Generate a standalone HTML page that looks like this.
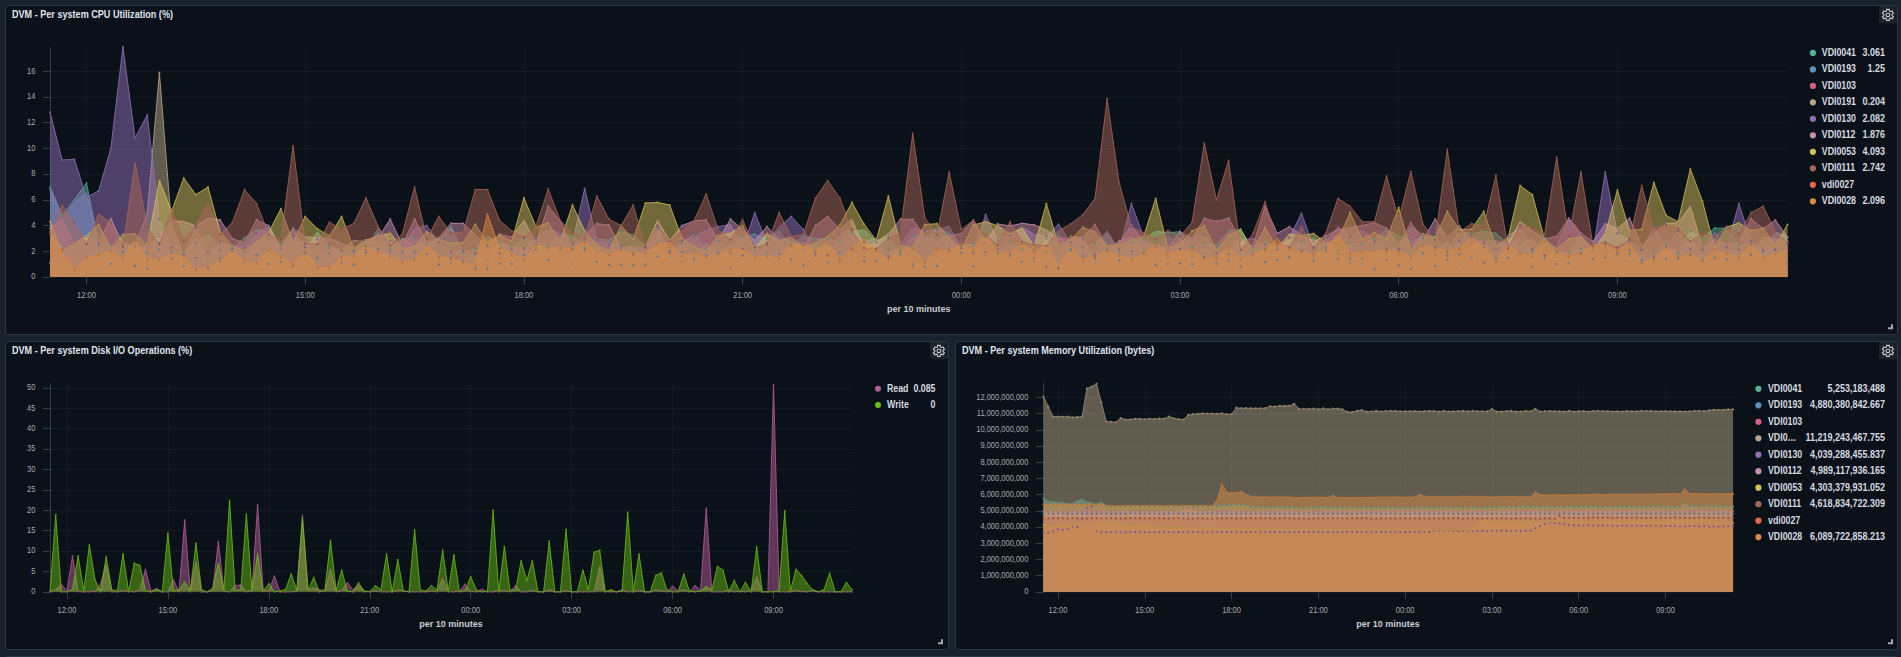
<!DOCTYPE html><html><head><meta charset="utf-8"><style>
html,body{margin:0;padding:0}body{width:1901px;height:657px;background:#19222c;overflow:hidden;position:relative;font-family:"Liberation Sans",sans-serif}
.p{position:absolute;box-sizing:border-box;border:1px solid #283644;background:#0b1118;border-radius:3px}
.t{position:absolute;font-weight:bold;font-size:9.1px;color:#dfe5ee;white-space:nowrap;line-height:1}
.g{position:absolute;width:18px;height:18px;background:#1b2027;border-radius:0 2px 0 4px}
svg{position:absolute;left:0;top:0}
</style></head><body>
<div class="p" style="left:5px;top:5px;width:1893px;height:330px"></div>
<div class="p" style="left:5px;top:341px;width:944px;height:309px"></div>
<div class="p" style="left:955px;top:341px;width:943px;height:309px"></div>
<div class="p" style="left:5px;top:656px;width:1893px;height:100px"></div>
<svg width="1901" height="657" viewBox="0 0 1901 657" font-family="Liberation Sans, sans-serif">
<text transform="translate(12 18.4) scale(1 1.1)" font-size="9.1" font-weight="bold" fill="#dfe5ee">DVM - Per system CPU Utilization (%)</text>
<text transform="translate(12 354.4) scale(1 1.1)" font-size="9.1" font-weight="bold" fill="#dfe5ee">DVM - Per system Disk I/O Operations (%)</text>
<text transform="translate(962 354.4) scale(1 1.1)" font-size="9.1" font-weight="bold" fill="#dfe5ee">DVM - Per system Memory Utilization (bytes)</text>
<path d="M1879 6 h18 v14.5 a3 3 0 0 1 -3 3 h-12 a3 3 0 0 1 -3 -3 z" fill="#1d2229"/>
<path d="M1886.46 10.95 L1886.62 9.35 L1889.18 9.35 L1889.34 10.95 A4.20 4.20 0 0 1 1890.60 11.68 L1892.07 11.01 L1893.35 13.23 L1892.04 14.17 A4.20 4.20 0 0 1 1892.04 15.63 L1893.35 16.57 L1892.07 18.79 L1890.60 18.12 A4.20 4.20 0 0 1 1889.34 18.85 L1889.18 20.45 L1886.62 20.45 L1886.46 18.85 A4.20 4.20 0 0 1 1885.20 18.12 L1883.73 18.79 L1882.45 16.57 L1883.76 15.63 A4.20 4.20 0 0 1 1883.76 14.17 L1882.45 13.23 L1883.73 11.01 L1885.20 11.68 A4.20 4.20 0 0 1 1886.46 10.95 Z" fill="none" stroke="#c3c8ce" stroke-width="1.15" stroke-linejoin="miter"/>
<rect x="1886.20" y="13.20" width="3.4" height="3.4" rx="1" fill="none" stroke="#c3c8ce" stroke-width="1.15"/>
<path d="M930 342 h18 v14.5 a3 3 0 0 1 -3 3 h-12 a3 3 0 0 1 -3 -3 z" fill="#1d2229"/>
<path d="M937.46 346.95 L937.62 345.35 L940.18 345.35 L940.34 346.95 A4.20 4.20 0 0 1 941.60 347.68 L943.07 347.01 L944.35 349.23 L943.04 350.17 A4.20 4.20 0 0 1 943.04 351.63 L944.35 352.57 L943.07 354.79 L941.60 354.12 A4.20 4.20 0 0 1 940.34 354.85 L940.18 356.45 L937.62 356.45 L937.46 354.85 A4.20 4.20 0 0 1 936.20 354.12 L934.73 354.79 L933.45 352.57 L934.76 351.63 A4.20 4.20 0 0 1 934.76 350.17 L933.45 349.23 L934.73 347.01 L936.20 347.68 A4.20 4.20 0 0 1 937.46 346.95 Z" fill="none" stroke="#c3c8ce" stroke-width="1.15" stroke-linejoin="miter"/>
<rect x="937.20" y="349.20" width="3.4" height="3.4" rx="1" fill="none" stroke="#c3c8ce" stroke-width="1.15"/>
<path d="M1879 342 h18 v14.5 a3 3 0 0 1 -3 3 h-12 a3 3 0 0 1 -3 -3 z" fill="#1d2229"/>
<path d="M1886.46 346.95 L1886.62 345.35 L1889.18 345.35 L1889.34 346.95 A4.20 4.20 0 0 1 1890.60 347.68 L1892.07 347.01 L1893.35 349.23 L1892.04 350.17 A4.20 4.20 0 0 1 1892.04 351.63 L1893.35 352.57 L1892.07 354.79 L1890.60 354.12 A4.20 4.20 0 0 1 1889.34 354.85 L1889.18 356.45 L1886.62 356.45 L1886.46 354.85 A4.20 4.20 0 0 1 1885.20 354.12 L1883.73 354.79 L1882.45 352.57 L1883.76 351.63 A4.20 4.20 0 0 1 1883.76 350.17 L1882.45 349.23 L1883.73 347.01 L1885.20 347.68 A4.20 4.20 0 0 1 1886.46 346.95 Z" fill="none" stroke="#c3c8ce" stroke-width="1.15" stroke-linejoin="miter"/>
<rect x="1886.20" y="349.20" width="3.4" height="3.4" rx="1" fill="none" stroke="#c3c8ce" stroke-width="1.15"/>
<path d="M1892 324.2 V328.2 H1888" fill="none" stroke="#a3a8ae" stroke-width="2"/>
<path d="M942 639.2 V643.2 H938" fill="none" stroke="#a3a8ae" stroke-width="2"/>
<path d="M1892 639.2 V643.2 H1888" fill="none" stroke="#a3a8ae" stroke-width="2"/>
<line x1="50" y1="277.5" x2="1787.5" y2="277.5" stroke="rgba(255,255,255,0.04)" stroke-width="1"/>
<line x1="43" y1="277.5" x2="50" y2="277.5" stroke="#343b43" stroke-width="1"/>
<text transform="translate(35.4 279.3) scale(1 1.13)" font-size="7.5" fill="#a3a9b0" text-anchor="end">0</text>
<line x1="50" y1="251.5" x2="1787.5" y2="251.5" stroke="rgba(255,255,255,0.04)" stroke-width="1"/>
<line x1="43" y1="251.5" x2="50" y2="251.5" stroke="#343b43" stroke-width="1"/>
<text transform="translate(35.4 253.58) scale(1 1.13)" font-size="7.5" fill="#a3a9b0" text-anchor="end">2</text>
<line x1="50" y1="225.5" x2="1787.5" y2="225.5" stroke="rgba(255,255,255,0.04)" stroke-width="1"/>
<line x1="43" y1="225.5" x2="50" y2="225.5" stroke="#343b43" stroke-width="1"/>
<text transform="translate(35.4 227.86) scale(1 1.13)" font-size="7.5" fill="#a3a9b0" text-anchor="end">4</text>
<line x1="50" y1="200.5" x2="1787.5" y2="200.5" stroke="rgba(255,255,255,0.04)" stroke-width="1"/>
<line x1="43" y1="200.5" x2="50" y2="200.5" stroke="#343b43" stroke-width="1"/>
<text transform="translate(35.4 202.14) scale(1 1.13)" font-size="7.5" fill="#a3a9b0" text-anchor="end">6</text>
<line x1="50" y1="174.5" x2="1787.5" y2="174.5" stroke="rgba(255,255,255,0.04)" stroke-width="1"/>
<line x1="43" y1="174.5" x2="50" y2="174.5" stroke="#343b43" stroke-width="1"/>
<text transform="translate(35.4 176.42) scale(1 1.13)" font-size="7.5" fill="#a3a9b0" text-anchor="end">8</text>
<line x1="50" y1="148.5" x2="1787.5" y2="148.5" stroke="rgba(255,255,255,0.04)" stroke-width="1"/>
<line x1="43" y1="148.5" x2="50" y2="148.5" stroke="#343b43" stroke-width="1"/>
<text transform="translate(35.4 150.7) scale(1 1.13)" font-size="7.5" fill="#a3a9b0" text-anchor="end">10</text>
<line x1="50" y1="122.5" x2="1787.5" y2="122.5" stroke="rgba(255,255,255,0.04)" stroke-width="1"/>
<line x1="43" y1="122.5" x2="50" y2="122.5" stroke="#343b43" stroke-width="1"/>
<text transform="translate(35.4 124.98) scale(1 1.13)" font-size="7.5" fill="#a3a9b0" text-anchor="end">12</text>
<line x1="50" y1="97.5" x2="1787.5" y2="97.5" stroke="rgba(255,255,255,0.04)" stroke-width="1"/>
<line x1="43" y1="97.5" x2="50" y2="97.5" stroke="#343b43" stroke-width="1"/>
<text transform="translate(35.4 99.26) scale(1 1.13)" font-size="7.5" fill="#a3a9b0" text-anchor="end">14</text>
<line x1="50" y1="71.5" x2="1787.5" y2="71.5" stroke="rgba(255,255,255,0.04)" stroke-width="1"/>
<line x1="43" y1="71.5" x2="50" y2="71.5" stroke="#343b43" stroke-width="1"/>
<text transform="translate(35.4 73.54) scale(1 1.13)" font-size="7.5" fill="#a3a9b0" text-anchor="end">16</text>
<line x1="86.5" y1="47" x2="86.5" y2="277" stroke="rgba(255,255,255,0.04)" stroke-width="1"/>
<line x1="86.5" y1="277" x2="86.5" y2="285" stroke="#343b43" stroke-width="1"/>
<text transform="translate(86.5 298) scale(1 1.13)" font-size="7.5" fill="#a3a9b0" text-anchor="middle">12:00</text>
<line x1="305.5" y1="47" x2="305.5" y2="277" stroke="rgba(255,255,255,0.04)" stroke-width="1"/>
<line x1="305.5" y1="277" x2="305.5" y2="285" stroke="#343b43" stroke-width="1"/>
<text transform="translate(305.2 298) scale(1 1.13)" font-size="7.5" fill="#a3a9b0" text-anchor="middle">15:00</text>
<line x1="524.5" y1="47" x2="524.5" y2="277" stroke="rgba(255,255,255,0.04)" stroke-width="1"/>
<line x1="524.5" y1="277" x2="524.5" y2="285" stroke="#343b43" stroke-width="1"/>
<text transform="translate(523.9 298) scale(1 1.13)" font-size="7.5" fill="#a3a9b0" text-anchor="middle">18:00</text>
<line x1="742.5" y1="47" x2="742.5" y2="277" stroke="rgba(255,255,255,0.04)" stroke-width="1"/>
<line x1="742.5" y1="277" x2="742.5" y2="285" stroke="#343b43" stroke-width="1"/>
<text transform="translate(742.6 298) scale(1 1.13)" font-size="7.5" fill="#a3a9b0" text-anchor="middle">21:00</text>
<line x1="961.5" y1="47" x2="961.5" y2="277" stroke="rgba(255,255,255,0.04)" stroke-width="1"/>
<line x1="961.5" y1="277" x2="961.5" y2="285" stroke="#343b43" stroke-width="1"/>
<text transform="translate(961.3 298) scale(1 1.13)" font-size="7.5" fill="#a3a9b0" text-anchor="middle">00:00</text>
<line x1="1180.5" y1="47" x2="1180.5" y2="277" stroke="rgba(255,255,255,0.04)" stroke-width="1"/>
<line x1="1180.5" y1="277" x2="1180.5" y2="285" stroke="#343b43" stroke-width="1"/>
<text transform="translate(1180 298) scale(1 1.13)" font-size="7.5" fill="#a3a9b0" text-anchor="middle">03:00</text>
<line x1="1398.5" y1="47" x2="1398.5" y2="277" stroke="rgba(255,255,255,0.04)" stroke-width="1"/>
<line x1="1398.5" y1="277" x2="1398.5" y2="285" stroke="#343b43" stroke-width="1"/>
<text transform="translate(1398.7 298) scale(1 1.13)" font-size="7.5" fill="#a3a9b0" text-anchor="middle">06:00</text>
<line x1="1617.5" y1="47" x2="1617.5" y2="277" stroke="rgba(255,255,255,0.04)" stroke-width="1"/>
<line x1="1617.5" y1="277" x2="1617.5" y2="285" stroke="#343b43" stroke-width="1"/>
<text transform="translate(1617.4 298) scale(1 1.13)" font-size="7.5" fill="#a3a9b0" text-anchor="middle">09:00</text>
<line x1="50.5" y1="47" x2="50.5" y2="277" stroke="#343b43" stroke-width="1"/>
<text transform="translate(918.8 312) scale(1 1.05)" font-size="9" font-weight="bold" fill="#c8cdd3" text-anchor="middle">per 10 minutes</text>
<polygon points="50.05,277 50.05,186.98 62.2,215.27 74.35,199.84 86.5,183.12 98.65,243.56 110.8,244.45 122.95,252.36 135.1,240.8 147.25,252.89 159.4,242.7 171.55,252.06 183.7,251.52 195.85,242.93 208,232.59 220.15,250.67 232.3,248.11 244.45,237.71 256.6,229.48 268.75,231.99 280.9,243.65 293.05,228.74 305.2,252.65 317.35,231.77 329.5,246.4 341.65,250.14 353.8,250.82 365.95,245.92 378.1,232.86 390.25,249.2 402.4,238.89 414.55,237.42 426.7,244.27 438.85,239.76 451,226.85 463.15,252.32 475.3,248.55 487.45,236.35 499.6,242.85 511.75,245.77 523.9,238.79 536.05,242.2 548.2,246.14 560.35,233.42 572.5,235.87 584.65,247.57 596.8,239.08 608.95,240.34 621.1,231.34 633.25,235.09 645.4,246.45 657.55,228.64 669.7,250.82 681.85,243.1 694,234.38 706.15,249.94 718.3,241.28 730.45,252.84 742.6,236.67 754.75,234.19 766.9,239.11 779.05,231.33 791.2,245.78 803.35,235.97 815.5,238.56 827.65,238.94 839.8,242.12 851.95,232.25 864.1,229.55 876.25,241.66 888.4,236.77 900.55,252.29 912.7,235.81 924.85,237.21 937,228.31 949.15,232.71 961.3,246.53 973.45,243.93 985.6,236.65 997.75,253.27 1009.9,241.98 1022.05,249.53 1034.2,250.84 1046.35,252.34 1058.5,234.09 1070.65,250.53 1082.8,247.48 1094.95,243.8 1107.1,231.44 1119.25,251.78 1131.4,242.3 1143.55,239.72 1155.7,231.13 1167.85,232.78 1180,231.63 1192.15,246.69 1204.3,243.17 1216.45,244.62 1228.6,231.11 1240.75,229.22 1252.9,249.97 1265.05,249.32 1277.2,247.89 1289.35,247.85 1301.5,241.38 1313.65,238.7 1325.8,247.09 1337.95,253.75 1350.1,243.08 1362.25,244.35 1374.4,239.29 1386.55,229.34 1398.7,236.09 1410.85,240.59 1423,237.97 1435.15,236.46 1447.3,252.46 1459.45,230.72 1471.6,233.79 1483.75,231.36 1495.9,233.33 1508.05,243.76 1520.2,243.59 1532.35,251.19 1544.5,237.54 1556.65,252.25 1568.8,252.12 1580.95,248.48 1593.1,249.68 1605.25,245.11 1617.4,252.5 1629.55,253.85 1641.7,249.96 1653.85,251.24 1666,244.5 1678.15,253.2 1690.3,231.36 1702.45,238.06 1714.6,228.13 1726.75,228.13 1738.9,244.92 1751.05,244.49 1763.2,250.69 1775.35,232.02 1787.5,237.13 1787.5,277" fill="#54B399" fill-opacity="0.5"/><polyline points="50.05,186.98 62.2,215.27 74.35,199.84 86.5,183.12 98.65,243.56 110.8,244.45 122.95,252.36 135.1,240.8 147.25,252.89 159.4,242.7 171.55,252.06 183.7,251.52 195.85,242.93 208,232.59 220.15,250.67 232.3,248.11 244.45,237.71 256.6,229.48 268.75,231.99 280.9,243.65 293.05,228.74 305.2,252.65 317.35,231.77 329.5,246.4 341.65,250.14 353.8,250.82 365.95,245.92 378.1,232.86 390.25,249.2 402.4,238.89 414.55,237.42 426.7,244.27 438.85,239.76 451,226.85 463.15,252.32 475.3,248.55 487.45,236.35 499.6,242.85 511.75,245.77 523.9,238.79 536.05,242.2 548.2,246.14 560.35,233.42 572.5,235.87 584.65,247.57 596.8,239.08 608.95,240.34 621.1,231.34 633.25,235.09 645.4,246.45 657.55,228.64 669.7,250.82 681.85,243.1 694,234.38 706.15,249.94 718.3,241.28 730.45,252.84 742.6,236.67 754.75,234.19 766.9,239.11 779.05,231.33 791.2,245.78 803.35,235.97 815.5,238.56 827.65,238.94 839.8,242.12 851.95,232.25 864.1,229.55 876.25,241.66 888.4,236.77 900.55,252.29 912.7,235.81 924.85,237.21 937,228.31 949.15,232.71 961.3,246.53 973.45,243.93 985.6,236.65 997.75,253.27 1009.9,241.98 1022.05,249.53 1034.2,250.84 1046.35,252.34 1058.5,234.09 1070.65,250.53 1082.8,247.48 1094.95,243.8 1107.1,231.44 1119.25,251.78 1131.4,242.3 1143.55,239.72 1155.7,231.13 1167.85,232.78 1180,231.63 1192.15,246.69 1204.3,243.17 1216.45,244.62 1228.6,231.11 1240.75,229.22 1252.9,249.97 1265.05,249.32 1277.2,247.89 1289.35,247.85 1301.5,241.38 1313.65,238.7 1325.8,247.09 1337.95,253.75 1350.1,243.08 1362.25,244.35 1374.4,239.29 1386.55,229.34 1398.7,236.09 1410.85,240.59 1423,237.97 1435.15,236.46 1447.3,252.46 1459.45,230.72 1471.6,233.79 1483.75,231.36 1495.9,233.33 1508.05,243.76 1520.2,243.59 1532.35,251.19 1544.5,237.54 1556.65,252.25 1568.8,252.12 1580.95,248.48 1593.1,249.68 1605.25,245.11 1617.4,252.5 1629.55,253.85 1641.7,249.96 1653.85,251.24 1666,244.5 1678.15,253.2 1690.3,231.36 1702.45,238.06 1714.6,228.13 1726.75,228.13 1738.9,244.92 1751.05,244.49 1763.2,250.69 1775.35,232.02 1787.5,237.13" fill="none" stroke="#54B399" stroke-opacity="0.8" stroke-width="1" stroke-linejoin="round"/>
<polygon points="50.05,277 50.05,189.55 62.2,219.13 74.35,202.41 86.5,193.41 98.65,244.85 110.8,263.84 122.95,252.23 135.1,265.96 147.25,268.81 159.4,249.72 171.55,258.41 183.7,266.27 195.85,258.11 208,268.73 220.15,258.42 232.3,249.15 244.45,251.52 256.6,254.96 268.75,263.91 280.9,261.74 293.05,265.85 305.2,253.4 317.35,258.33 329.5,253.25 341.65,262.5 353.8,264.69 365.95,252.59 378.1,249.02 390.25,251.74 402.4,252.7 414.55,252.45 426.7,254.06 438.85,264.62 451,258.63 463.15,261.97 475.3,268.69 487.45,268.71 499.6,263.53 511.75,263.95 523.9,255.03 536.05,249.6 548.2,260.08 560.35,250 572.5,248.95 584.65,249.63 596.8,261.78 608.95,264.75 621.1,264.62 633.25,265.24 645.4,265.08 657.55,256.44 669.7,250.76 681.85,251.99 694,259.42 706.15,255.85 718.3,252.83 730.45,267.54 742.6,255.69 754.75,250.56 766.9,253.19 779.05,253.85 791.2,259.45 803.35,265.61 815.5,253.05 827.65,262.44 839.8,252.81 851.95,249.29 864.1,261.14 876.25,261.03 888.4,249.8 900.55,254.37 912.7,265.79 924.85,266.67 937,266.17 949.15,250.67 961.3,252.69 973.45,266.28 985.6,252.28 997.75,249.11 1009.9,255.76 1022.05,262.07 1034.2,257.99 1046.35,266.59 1058.5,268.99 1070.65,249.31 1082.8,255.92 1094.95,258.45 1107.1,250.07 1119.25,260.36 1131.4,251.35 1143.55,252.29 1155.7,264.94 1167.85,264.1 1180,263.26 1192.15,264.33 1204.3,257.22 1216.45,263.95 1228.6,260.66 1240.75,266.59 1252.9,250.56 1265.05,262 1277.2,259.86 1289.35,257.28 1301.5,250.68 1313.65,260.63 1325.8,250.4 1337.95,258.96 1350.1,258.34 1362.25,258.51 1374.4,268.9 1386.55,260.23 1398.7,265.52 1410.85,269.2 1423,252.84 1435.15,265.74 1447.3,259.54 1459.45,254.36 1471.6,257.83 1483.75,262.58 1495.9,258.62 1508.05,257.86 1520.2,253.15 1532.35,267.1 1544.5,257.76 1556.65,264.17 1568.8,263.59 1580.95,253.39 1593.1,258.84 1605.25,257.73 1617.4,253.65 1629.55,250.51 1641.7,260.16 1653.85,256.68 1666,258.88 1678.15,258.75 1690.3,255.03 1702.45,259.98 1714.6,258.31 1726.75,259.45 1738.9,249.91 1751.05,254.9 1763.2,251.25 1775.35,249.9 1787.5,263.94 1787.5,277" fill="#6092C0" fill-opacity="0.5"/><polyline points="50.05,189.55 62.2,219.13 74.35,202.41 86.5,193.41 98.65,244.85 110.8,263.84 122.95,252.23 135.1,265.96 147.25,268.81 159.4,249.72 171.55,258.41 183.7,266.27 195.85,258.11 208,268.73 220.15,258.42 232.3,249.15 244.45,251.52 256.6,254.96 268.75,263.91 280.9,261.74 293.05,265.85 305.2,253.4 317.35,258.33 329.5,253.25 341.65,262.5 353.8,264.69 365.95,252.59 378.1,249.02 390.25,251.74 402.4,252.7 414.55,252.45 426.7,254.06 438.85,264.62 451,258.63 463.15,261.97 475.3,268.69 487.45,268.71 499.6,263.53 511.75,263.95 523.9,255.03 536.05,249.6 548.2,260.08 560.35,250 572.5,248.95 584.65,249.63 596.8,261.78 608.95,264.75 621.1,264.62 633.25,265.24 645.4,265.08 657.55,256.44 669.7,250.76 681.85,251.99 694,259.42 706.15,255.85 718.3,252.83 730.45,267.54 742.6,255.69 754.75,250.56 766.9,253.19 779.05,253.85 791.2,259.45 803.35,265.61 815.5,253.05 827.65,262.44 839.8,252.81 851.95,249.29 864.1,261.14 876.25,261.03 888.4,249.8 900.55,254.37 912.7,265.79 924.85,266.67 937,266.17 949.15,250.67 961.3,252.69 973.45,266.28 985.6,252.28 997.75,249.11 1009.9,255.76 1022.05,262.07 1034.2,257.99 1046.35,266.59 1058.5,268.99 1070.65,249.31 1082.8,255.92 1094.95,258.45 1107.1,250.07 1119.25,260.36 1131.4,251.35 1143.55,252.29 1155.7,264.94 1167.85,264.1 1180,263.26 1192.15,264.33 1204.3,257.22 1216.45,263.95 1228.6,260.66 1240.75,266.59 1252.9,250.56 1265.05,262 1277.2,259.86 1289.35,257.28 1301.5,250.68 1313.65,260.63 1325.8,250.4 1337.95,258.96 1350.1,258.34 1362.25,258.51 1374.4,268.9 1386.55,260.23 1398.7,265.52 1410.85,269.2 1423,252.84 1435.15,265.74 1447.3,259.54 1459.45,254.36 1471.6,257.83 1483.75,262.58 1495.9,258.62 1508.05,257.86 1520.2,253.15 1532.35,267.1 1544.5,257.76 1556.65,264.17 1568.8,263.59 1580.95,253.39 1593.1,258.84 1605.25,257.73 1617.4,253.65 1629.55,250.51 1641.7,260.16 1653.85,256.68 1666,258.88 1678.15,258.75 1690.3,255.03 1702.45,259.98 1714.6,258.31 1726.75,259.45 1738.9,249.91 1751.05,254.9 1763.2,251.25 1775.35,249.9 1787.5,263.94" fill="none" stroke="#6092C0" stroke-opacity="0.8" stroke-width="1" stroke-linejoin="round"/>
<polygon points="50.05,277 50.05,262.96 62.2,263.5 74.35,255.53 86.5,257.55 98.65,247.57 110.8,249.17 122.95,242.91 135.1,245.54 147.25,212.7 159.4,72.53 171.55,225.56 183.7,254.91 195.85,236.28 208,259.91 220.15,243.65 232.3,245.94 244.45,262.9 256.6,240.51 268.75,238.91 280.9,246.39 293.05,243.38 305.2,241.16 317.35,260.2 329.5,249.32 341.65,249.87 353.8,240.52 365.95,241.37 378.1,240.76 390.25,247.62 402.4,238.88 414.55,244.82 426.7,244.52 438.85,257.63 451,263.26 463.15,260.37 475.3,253.93 487.45,261.17 499.6,240.49 511.75,248.34 523.9,246.38 536.05,246.42 548.2,244.88 560.35,250.3 572.5,264.05 584.65,241.57 596.8,242.97 608.95,249.91 621.1,249 633.25,245.49 645.4,262.27 657.55,243.29 669.7,257 681.85,262.03 694,256.63 706.15,243.51 718.3,258.33 730.45,243.21 742.6,236.53 754.75,250.17 766.9,253.32 779.05,250.59 791.2,244.8 803.35,242.44 815.5,246.68 827.65,245.95 839.8,261.95 851.95,259.97 864.1,256.96 876.25,243.11 888.4,255.53 900.55,248.08 912.7,263.79 924.85,262.42 937,256.54 949.15,245.13 961.3,244.56 973.45,245.02 985.6,255.91 997.75,249.53 1009.9,250.99 1022.05,250.95 1034.2,260.79 1046.35,238.86 1058.5,258.5 1070.65,236.47 1082.8,237.65 1094.95,263.64 1107.1,251.15 1119.25,240.94 1131.4,236.75 1143.55,251.42 1155.7,256.54 1167.85,258.2 1180,237.39 1192.15,258.18 1204.3,247.69 1216.45,260.13 1228.6,249.31 1240.75,237.19 1252.9,260.39 1265.05,240.93 1277.2,249.75 1289.35,239.05 1301.5,244.24 1313.65,257.59 1325.8,238.74 1337.95,250.39 1350.1,263.44 1362.25,264.04 1374.4,250.23 1386.55,251.39 1398.7,255.6 1410.85,260.16 1423,254.41 1435.15,255.2 1447.3,240.37 1459.45,264.09 1471.6,242.9 1483.75,240.4 1495.9,260.74 1508.05,237.93 1520.2,243.97 1532.35,238.63 1544.5,255.94 1556.65,253.61 1568.8,253.02 1580.95,235.88 1593.1,247.47 1605.25,253.93 1617.4,252.03 1629.55,256.36 1641.7,262.77 1653.85,261.26 1666,240.53 1678.15,256.06 1690.3,237.67 1702.45,257.09 1714.6,256.62 1726.75,249.68 1738.9,258.77 1751.05,253.58 1763.2,237.09 1775.35,239.12 1787.5,241.17 1787.5,277" fill="#B9A888" fill-opacity="0.5"/><polyline points="50.05,262.96 62.2,263.5 74.35,255.53 86.5,257.55 98.65,247.57 110.8,249.17 122.95,242.91 135.1,245.54 147.25,212.7 159.4,72.53 171.55,225.56 183.7,254.91 195.85,236.28 208,259.91 220.15,243.65 232.3,245.94 244.45,262.9 256.6,240.51 268.75,238.91 280.9,246.39 293.05,243.38 305.2,241.16 317.35,260.2 329.5,249.32 341.65,249.87 353.8,240.52 365.95,241.37 378.1,240.76 390.25,247.62 402.4,238.88 414.55,244.82 426.7,244.52 438.85,257.63 451,263.26 463.15,260.37 475.3,253.93 487.45,261.17 499.6,240.49 511.75,248.34 523.9,246.38 536.05,246.42 548.2,244.88 560.35,250.3 572.5,264.05 584.65,241.57 596.8,242.97 608.95,249.91 621.1,249 633.25,245.49 645.4,262.27 657.55,243.29 669.7,257 681.85,262.03 694,256.63 706.15,243.51 718.3,258.33 730.45,243.21 742.6,236.53 754.75,250.17 766.9,253.32 779.05,250.59 791.2,244.8 803.35,242.44 815.5,246.68 827.65,245.95 839.8,261.95 851.95,259.97 864.1,256.96 876.25,243.11 888.4,255.53 900.55,248.08 912.7,263.79 924.85,262.42 937,256.54 949.15,245.13 961.3,244.56 973.45,245.02 985.6,255.91 997.75,249.53 1009.9,250.99 1022.05,250.95 1034.2,260.79 1046.35,238.86 1058.5,258.5 1070.65,236.47 1082.8,237.65 1094.95,263.64 1107.1,251.15 1119.25,240.94 1131.4,236.75 1143.55,251.42 1155.7,256.54 1167.85,258.2 1180,237.39 1192.15,258.18 1204.3,247.69 1216.45,260.13 1228.6,249.31 1240.75,237.19 1252.9,260.39 1265.05,240.93 1277.2,249.75 1289.35,239.05 1301.5,244.24 1313.65,257.59 1325.8,238.74 1337.95,250.39 1350.1,263.44 1362.25,264.04 1374.4,250.23 1386.55,251.39 1398.7,255.6 1410.85,260.16 1423,254.41 1435.15,255.2 1447.3,240.37 1459.45,264.09 1471.6,242.9 1483.75,240.4 1495.9,260.74 1508.05,237.93 1520.2,243.97 1532.35,238.63 1544.5,255.94 1556.65,253.61 1568.8,253.02 1580.95,235.88 1593.1,247.47 1605.25,253.93 1617.4,252.03 1629.55,256.36 1641.7,262.77 1653.85,261.26 1666,240.53 1678.15,256.06 1690.3,237.67 1702.45,257.09 1714.6,256.62 1726.75,249.68 1738.9,258.77 1751.05,253.58 1763.2,237.09 1775.35,239.12 1787.5,241.17" fill="none" stroke="#B9A888" stroke-opacity="0.8" stroke-width="1" stroke-linejoin="round"/>
<polygon points="50.05,277 50.05,112.39 62.2,159.97 74.35,159.33 86.5,197.27 98.65,190.84 110.8,148.4 122.95,46.81 135.1,138.11 147.25,114.96 159.4,219.13 171.55,247.59 183.7,254.91 195.85,227.82 208,252.49 220.15,241.85 232.3,245.82 244.45,247.23 256.6,233.61 268.75,226.29 280.9,248.39 293.05,236.18 305.2,247.14 317.35,239.22 329.5,244.25 341.65,251.26 353.8,251.43 365.95,250.01 378.1,228.46 390.25,241.08 402.4,249.63 414.55,228.45 426.7,225.67 438.85,242.54 451,252.12 463.15,250.49 475.3,253.62 487.45,245.87 499.6,253.61 511.75,249.04 523.9,248.45 536.05,238.84 548.2,229.04 560.35,233.29 572.5,243.68 584.65,188.27 596.8,240.25 608.95,244.79 621.1,245.99 633.25,254.51 645.4,247.86 657.55,226.56 669.7,252.54 681.85,240.89 694,236.99 706.15,229.79 718.3,226.85 730.45,224.27 742.6,248.76 754.75,212.7 766.9,242.66 779.05,226.98 791.2,216.56 803.35,229.48 815.5,255.75 827.65,255.43 839.8,234.53 851.95,228.78 864.1,241.82 876.25,238.3 888.4,256.42 900.55,244.34 912.7,227.82 924.85,230.94 937,230.02 949.15,226.42 961.3,248.76 973.45,253.06 985.6,214.63 997.75,240.3 1009.9,235.37 1022.05,227.37 1034.2,234.15 1046.35,236.44 1058.5,224.27 1070.65,242.31 1082.8,239.4 1094.95,255.2 1107.1,232.28 1119.25,249.25 1131.4,203.7 1143.55,236.5 1155.7,247.05 1167.85,234.56 1180,248.65 1192.15,236.79 1204.3,234.86 1216.45,252.96 1228.6,254.25 1240.75,240.24 1252.9,238.43 1265.05,244.45 1277.2,249.52 1289.35,237.87 1301.5,213.34 1313.65,247.12 1325.8,242.21 1337.95,226.83 1350.1,236.53 1362.25,229.15 1374.4,241.75 1386.55,249.18 1398.7,248.8 1410.85,226.78 1423,234.68 1435.15,246.94 1447.3,255.75 1459.45,241.04 1471.6,235.61 1483.75,243.46 1495.9,248.48 1508.05,235.83 1520.2,227.87 1532.35,249.42 1544.5,255.37 1556.65,245.99 1568.8,219.13 1580.95,235.36 1593.1,250.31 1605.25,172.19 1617.4,233.61 1629.55,240.84 1641.7,250.09 1653.85,226.49 1666,246.8 1678.15,231.12 1690.3,249.3 1702.45,249.59 1714.6,232.63 1726.75,247.32 1738.9,203.7 1751.05,241.12 1763.2,250.64 1775.35,249.53 1787.5,243.55 1787.5,277" fill="#9170B8" fill-opacity="0.5"/><polyline points="50.05,112.39 62.2,159.97 74.35,159.33 86.5,197.27 98.65,190.84 110.8,148.4 122.95,46.81 135.1,138.11 147.25,114.96 159.4,219.13 171.55,247.59 183.7,254.91 195.85,227.82 208,252.49 220.15,241.85 232.3,245.82 244.45,247.23 256.6,233.61 268.75,226.29 280.9,248.39 293.05,236.18 305.2,247.14 317.35,239.22 329.5,244.25 341.65,251.26 353.8,251.43 365.95,250.01 378.1,228.46 390.25,241.08 402.4,249.63 414.55,228.45 426.7,225.67 438.85,242.54 451,252.12 463.15,250.49 475.3,253.62 487.45,245.87 499.6,253.61 511.75,249.04 523.9,248.45 536.05,238.84 548.2,229.04 560.35,233.29 572.5,243.68 584.65,188.27 596.8,240.25 608.95,244.79 621.1,245.99 633.25,254.51 645.4,247.86 657.55,226.56 669.7,252.54 681.85,240.89 694,236.99 706.15,229.79 718.3,226.85 730.45,224.27 742.6,248.76 754.75,212.7 766.9,242.66 779.05,226.98 791.2,216.56 803.35,229.48 815.5,255.75 827.65,255.43 839.8,234.53 851.95,228.78 864.1,241.82 876.25,238.3 888.4,256.42 900.55,244.34 912.7,227.82 924.85,230.94 937,230.02 949.15,226.42 961.3,248.76 973.45,253.06 985.6,214.63 997.75,240.3 1009.9,235.37 1022.05,227.37 1034.2,234.15 1046.35,236.44 1058.5,224.27 1070.65,242.31 1082.8,239.4 1094.95,255.2 1107.1,232.28 1119.25,249.25 1131.4,203.7 1143.55,236.5 1155.7,247.05 1167.85,234.56 1180,248.65 1192.15,236.79 1204.3,234.86 1216.45,252.96 1228.6,254.25 1240.75,240.24 1252.9,238.43 1265.05,244.45 1277.2,249.52 1289.35,237.87 1301.5,213.34 1313.65,247.12 1325.8,242.21 1337.95,226.83 1350.1,236.53 1362.25,229.15 1374.4,241.75 1386.55,249.18 1398.7,248.8 1410.85,226.78 1423,234.68 1435.15,246.94 1447.3,255.75 1459.45,241.04 1471.6,235.61 1483.75,243.46 1495.9,248.48 1508.05,235.83 1520.2,227.87 1532.35,249.42 1544.5,255.37 1556.65,245.99 1568.8,219.13 1580.95,235.36 1593.1,250.31 1605.25,172.19 1617.4,233.61 1629.55,240.84 1641.7,250.09 1653.85,226.49 1666,246.8 1678.15,231.12 1690.3,249.3 1702.45,249.59 1714.6,232.63 1726.75,247.32 1738.9,203.7 1751.05,241.12 1763.2,250.64 1775.35,249.53 1787.5,243.55" fill="none" stroke="#9170B8" stroke-opacity="0.8" stroke-width="1" stroke-linejoin="round"/>
<polygon points="50.05,277 50.05,228.17 62.2,219.43 74.35,244.19 86.5,236.56 98.65,242.14 110.8,218.64 122.95,244.33 135.1,247.11 147.25,246.85 159.4,236.57 171.55,220.99 183.7,221.44 195.85,226.09 208,217.92 220.15,219.96 232.3,238.55 244.45,242.98 256.6,219.82 268.75,225.67 280.9,247.72 293.05,228.2 305.2,237.02 317.35,237.17 329.5,238.47 341.65,243.48 353.8,248.62 365.95,240.07 378.1,237.86 390.25,219.22 402.4,244.89 414.55,218.95 426.7,242.31 438.85,237.7 451,223.35 463.15,223.34 475.3,235.36 487.45,247.19 499.6,234.1 511.75,237.2 523.9,220.33 536.05,242.75 548.2,206.27 560.35,221.02 572.5,247.77 584.65,236.03 596.8,223.65 608.95,225.05 621.1,247.45 633.25,247.63 645.4,246.78 657.55,220.31 669.7,240.78 681.85,225.64 694,220.98 706.15,219.77 718.3,240.3 730.45,219.15 742.6,229.67 754.75,240.62 766.9,226.59 779.05,238.94 791.2,240.2 803.35,248.59 815.5,225.39 827.65,216.56 839.8,229.14 851.95,219.6 864.1,247.96 876.25,241.49 888.4,234.04 900.55,219.18 912.7,219.27 924.85,236.78 937,240.96 949.15,235.44 961.3,233.48 973.45,220.06 985.6,243.06 997.75,223.94 1009.9,225.92 1022.05,223.31 1034.2,224.86 1046.35,229.97 1058.5,238.59 1070.65,238.85 1082.8,237.54 1094.95,224.56 1107.1,246.27 1119.25,242.62 1131.4,225.47 1143.55,241.08 1155.7,246.71 1167.85,247.66 1180,231.65 1192.15,238.65 1204.3,218.45 1216.45,221.44 1228.6,218.22 1240.75,240.53 1252.9,246.11 1265.05,206.27 1277.2,233.32 1289.35,226.8 1301.5,234.91 1313.65,241.48 1325.8,235.84 1337.95,229.56 1350.1,227.9 1362.25,225.62 1374.4,222.57 1386.55,228.2 1398.7,244.97 1410.85,222.76 1423,239.64 1435.15,219.13 1447.3,237.2 1459.45,225.93 1471.6,242.56 1483.75,241.07 1495.9,241.14 1508.05,243.98 1520.2,221.42 1532.35,230.86 1544.5,238.64 1556.65,236.48 1568.8,218.08 1580.95,233.05 1593.1,241.57 1605.25,223.76 1617.4,228.54 1629.55,218.12 1641.7,245.55 1653.85,234.05 1666,223.43 1678.15,222.77 1690.3,206.27 1702.45,247.46 1714.6,239.64 1726.75,245.03 1738.9,242.86 1751.05,218.68 1763.2,228.78 1775.35,220 1787.5,237.22 1787.5,277" fill="#CA8EAE" fill-opacity="0.5"/><polyline points="50.05,228.17 62.2,219.43 74.35,244.19 86.5,236.56 98.65,242.14 110.8,218.64 122.95,244.33 135.1,247.11 147.25,246.85 159.4,236.57 171.55,220.99 183.7,221.44 195.85,226.09 208,217.92 220.15,219.96 232.3,238.55 244.45,242.98 256.6,219.82 268.75,225.67 280.9,247.72 293.05,228.2 305.2,237.02 317.35,237.17 329.5,238.47 341.65,243.48 353.8,248.62 365.95,240.07 378.1,237.86 390.25,219.22 402.4,244.89 414.55,218.95 426.7,242.31 438.85,237.7 451,223.35 463.15,223.34 475.3,235.36 487.45,247.19 499.6,234.1 511.75,237.2 523.9,220.33 536.05,242.75 548.2,206.27 560.35,221.02 572.5,247.77 584.65,236.03 596.8,223.65 608.95,225.05 621.1,247.45 633.25,247.63 645.4,246.78 657.55,220.31 669.7,240.78 681.85,225.64 694,220.98 706.15,219.77 718.3,240.3 730.45,219.15 742.6,229.67 754.75,240.62 766.9,226.59 779.05,238.94 791.2,240.2 803.35,248.59 815.5,225.39 827.65,216.56 839.8,229.14 851.95,219.6 864.1,247.96 876.25,241.49 888.4,234.04 900.55,219.18 912.7,219.27 924.85,236.78 937,240.96 949.15,235.44 961.3,233.48 973.45,220.06 985.6,243.06 997.75,223.94 1009.9,225.92 1022.05,223.31 1034.2,224.86 1046.35,229.97 1058.5,238.59 1070.65,238.85 1082.8,237.54 1094.95,224.56 1107.1,246.27 1119.25,242.62 1131.4,225.47 1143.55,241.08 1155.7,246.71 1167.85,247.66 1180,231.65 1192.15,238.65 1204.3,218.45 1216.45,221.44 1228.6,218.22 1240.75,240.53 1252.9,246.11 1265.05,206.27 1277.2,233.32 1289.35,226.8 1301.5,234.91 1313.65,241.48 1325.8,235.84 1337.95,229.56 1350.1,227.9 1362.25,225.62 1374.4,222.57 1386.55,228.2 1398.7,244.97 1410.85,222.76 1423,239.64 1435.15,219.13 1447.3,237.2 1459.45,225.93 1471.6,242.56 1483.75,241.07 1495.9,241.14 1508.05,243.98 1520.2,221.42 1532.35,230.86 1544.5,238.64 1556.65,236.48 1568.8,218.08 1580.95,233.05 1593.1,241.57 1605.25,223.76 1617.4,228.54 1629.55,218.12 1641.7,245.55 1653.85,234.05 1666,223.43 1678.15,222.77 1690.3,206.27 1702.45,247.46 1714.6,239.64 1726.75,245.03 1738.9,242.86 1751.05,218.68 1763.2,228.78 1775.35,220 1787.5,237.22" fill="none" stroke="#CA8EAE" stroke-opacity="0.8" stroke-width="1" stroke-linejoin="round"/>
<polygon points="50.05,277 50.05,221.7 62.2,251.28 74.35,243.56 86.5,235.85 98.65,224.52 110.8,248.29 122.95,234.41 135.1,233.74 147.25,245.12 159.4,180.55 171.55,211.41 183.7,177.98 195.85,194.7 208,186.98 220.15,231.99 232.3,245.52 244.45,250.96 256.6,242.02 268.75,232.09 280.9,208.84 293.05,242.45 305.2,216.56 317.35,228.78 329.5,235.77 341.65,216.56 353.8,248.41 365.95,240.1 378.1,235.72 390.25,233.2 402.4,248.7 414.55,246.65 426.7,231.61 438.85,239.69 451,243.26 463.15,242.58 475.3,224.31 487.45,242.44 499.6,235.25 511.75,241.17 523.9,197.91 536.05,226.83 548.2,223.08 560.35,240.99 572.5,204.98 584.65,230.68 596.8,245.52 608.95,251.11 621.1,225.77 633.25,239.29 645.4,203.06 657.55,202.41 669.7,204.98 681.85,238.24 694,246.68 706.15,250.86 718.3,235.68 730.45,233.15 742.6,225.54 754.75,248.76 766.9,233.68 779.05,240.79 791.2,237.01 803.35,247.15 815.5,243.27 827.65,236.54 839.8,225.1 851.95,202.41 864.1,224.27 876.25,240.35 888.4,195.98 900.55,245.7 912.7,247.7 924.85,224.6 937,223.68 949.15,237.62 961.3,249.77 973.45,225.08 985.6,221.7 997.75,225.7 1009.9,233.73 1022.05,227.95 1034.2,246.75 1046.35,203.7 1058.5,245 1070.65,239.84 1082.8,227.34 1094.95,231.99 1107.1,246.1 1119.25,245.11 1131.4,239.97 1143.55,236.63 1155.7,198.55 1167.85,247.8 1180,244.29 1192.15,230.77 1204.3,225.89 1216.45,250.12 1228.6,235.37 1240.75,229.85 1252.9,250.2 1265.05,227.57 1277.2,247.95 1289.35,234.32 1301.5,235.72 1313.65,233.54 1325.8,242.62 1337.95,239.4 1350.1,212.7 1362.25,239.23 1374.4,232.64 1386.55,238.64 1398.7,207.56 1410.85,250.62 1423,233.77 1435.15,237.43 1447.3,211.41 1459.45,229.68 1471.6,229.21 1483.75,211.41 1495.9,246.2 1508.05,237.89 1520.2,185.69 1532.35,194.7 1544.5,239.1 1556.65,248.69 1568.8,238.78 1580.95,236.85 1593.1,250.13 1605.25,233.27 1617.4,190.19 1629.55,230.53 1641.7,229.28 1653.85,182.48 1666,215.27 1678.15,221.7 1690.3,168.98 1702.45,201.13 1714.6,247.43 1726.75,227.03 1738.9,223.1 1751.05,230.57 1763.2,228.22 1775.35,245.8 1787.5,224.66 1787.5,277" fill="#D6BF57" fill-opacity="0.5"/><polyline points="50.05,221.7 62.2,251.28 74.35,243.56 86.5,235.85 98.65,224.52 110.8,248.29 122.95,234.41 135.1,233.74 147.25,245.12 159.4,180.55 171.55,211.41 183.7,177.98 195.85,194.7 208,186.98 220.15,231.99 232.3,245.52 244.45,250.96 256.6,242.02 268.75,232.09 280.9,208.84 293.05,242.45 305.2,216.56 317.35,228.78 329.5,235.77 341.65,216.56 353.8,248.41 365.95,240.1 378.1,235.72 390.25,233.2 402.4,248.7 414.55,246.65 426.7,231.61 438.85,239.69 451,243.26 463.15,242.58 475.3,224.31 487.45,242.44 499.6,235.25 511.75,241.17 523.9,197.91 536.05,226.83 548.2,223.08 560.35,240.99 572.5,204.98 584.65,230.68 596.8,245.52 608.95,251.11 621.1,225.77 633.25,239.29 645.4,203.06 657.55,202.41 669.7,204.98 681.85,238.24 694,246.68 706.15,250.86 718.3,235.68 730.45,233.15 742.6,225.54 754.75,248.76 766.9,233.68 779.05,240.79 791.2,237.01 803.35,247.15 815.5,243.27 827.65,236.54 839.8,225.1 851.95,202.41 864.1,224.27 876.25,240.35 888.4,195.98 900.55,245.7 912.7,247.7 924.85,224.6 937,223.68 949.15,237.62 961.3,249.77 973.45,225.08 985.6,221.7 997.75,225.7 1009.9,233.73 1022.05,227.95 1034.2,246.75 1046.35,203.7 1058.5,245 1070.65,239.84 1082.8,227.34 1094.95,231.99 1107.1,246.1 1119.25,245.11 1131.4,239.97 1143.55,236.63 1155.7,198.55 1167.85,247.8 1180,244.29 1192.15,230.77 1204.3,225.89 1216.45,250.12 1228.6,235.37 1240.75,229.85 1252.9,250.2 1265.05,227.57 1277.2,247.95 1289.35,234.32 1301.5,235.72 1313.65,233.54 1325.8,242.62 1337.95,239.4 1350.1,212.7 1362.25,239.23 1374.4,232.64 1386.55,238.64 1398.7,207.56 1410.85,250.62 1423,233.77 1435.15,237.43 1447.3,211.41 1459.45,229.68 1471.6,229.21 1483.75,211.41 1495.9,246.2 1508.05,237.89 1520.2,185.69 1532.35,194.7 1544.5,239.1 1556.65,248.69 1568.8,238.78 1580.95,236.85 1593.1,250.13 1605.25,233.27 1617.4,190.19 1629.55,230.53 1641.7,229.28 1653.85,182.48 1666,215.27 1678.15,221.7 1690.3,168.98 1702.45,201.13 1714.6,247.43 1726.75,227.03 1738.9,223.1 1751.05,230.57 1763.2,228.22 1775.35,245.8 1787.5,224.66" fill="none" stroke="#D6BF57" stroke-opacity="0.8" stroke-width="1" stroke-linejoin="round"/>
<polygon points="50.05,277 50.05,234.79 62.2,204.98 74.35,222.79 86.5,244.04 98.65,213.99 110.8,222.38 122.95,246.85 135.1,162.55 147.25,227.31 159.4,244.22 171.55,208.84 183.7,240.93 195.85,225.63 208,202.41 220.15,234.5 232.3,222.68 244.45,189.55 256.6,203.7 268.75,234.39 280.9,239.68 293.05,145.83 305.2,243.56 317.35,244.15 329.5,222.22 341.65,229.48 353.8,223.37 365.95,197.91 378.1,226.5 390.25,245.45 402.4,233.69 414.55,186.98 426.7,238.53 438.85,216.56 451,233 463.15,232.3 475.3,189.55 487.45,189.55 499.6,220.62 511.75,230.89 523.9,237.55 536.05,226.14 548.2,188.91 560.35,220.68 572.5,232.37 584.65,238.52 596.8,195.98 608.95,219.13 621.1,225.56 633.25,204.98 645.4,247.34 657.55,225.51 669.7,241.53 681.85,230.62 694,220.87 706.15,194.05 718.3,229.93 730.45,239.86 742.6,219.77 754.75,247.75 766.9,244.48 779.05,212.7 791.2,236.48 803.35,234.2 815.5,197.91 827.65,180.55 839.8,197.91 851.95,230.23 864.1,248.08 876.25,248.63 888.4,238.67 900.55,231.99 912.7,133.61 924.85,217.84 937,234.56 949.15,172.19 961.3,229.42 973.45,220.42 985.6,235.27 997.75,244.9 1009.9,221.7 1022.05,241.82 1034.2,244.48 1046.35,246 1058.5,230.65 1070.65,224.06 1082.8,214.63 1094.95,198.55 1107.1,98.89 1119.25,183.12 1131.4,226.85 1143.55,232.8 1155.7,238.8 1167.85,230.44 1180,236.15 1192.15,222.19 1204.3,143.26 1216.45,199.84 1228.6,160.62 1240.75,249.99 1252.9,233.67 1265.05,201.77 1277.2,241.98 1289.35,247.06 1301.5,226.67 1313.65,248.36 1325.8,233.12 1337.95,198.55 1350.1,206.27 1362.25,221.7 1374.4,221.7 1386.55,176.05 1398.7,219.13 1410.85,171.55 1423,224.27 1435.15,239.95 1447.3,149.69 1459.45,231.99 1471.6,223.55 1483.75,226.56 1495.9,175.41 1508.05,248.53 1520.2,224.82 1532.35,227.63 1544.5,235.54 1556.65,157.4 1568.8,235.91 1580.95,172.19 1593.1,245.73 1605.25,242.14 1617.4,247.61 1629.55,239.22 1641.7,185.69 1653.85,229.04 1666,224.79 1678.15,228.57 1690.3,241.18 1702.45,233.04 1714.6,236.37 1726.75,226.4 1738.9,233.9 1751.05,212.7 1763.2,206.27 1775.35,231.35 1787.5,242.57 1787.5,277" fill="#AA6556" fill-opacity="0.5"/><polyline points="50.05,234.79 62.2,204.98 74.35,222.79 86.5,244.04 98.65,213.99 110.8,222.38 122.95,246.85 135.1,162.55 147.25,227.31 159.4,244.22 171.55,208.84 183.7,240.93 195.85,225.63 208,202.41 220.15,234.5 232.3,222.68 244.45,189.55 256.6,203.7 268.75,234.39 280.9,239.68 293.05,145.83 305.2,243.56 317.35,244.15 329.5,222.22 341.65,229.48 353.8,223.37 365.95,197.91 378.1,226.5 390.25,245.45 402.4,233.69 414.55,186.98 426.7,238.53 438.85,216.56 451,233 463.15,232.3 475.3,189.55 487.45,189.55 499.6,220.62 511.75,230.89 523.9,237.55 536.05,226.14 548.2,188.91 560.35,220.68 572.5,232.37 584.65,238.52 596.8,195.98 608.95,219.13 621.1,225.56 633.25,204.98 645.4,247.34 657.55,225.51 669.7,241.53 681.85,230.62 694,220.87 706.15,194.05 718.3,229.93 730.45,239.86 742.6,219.77 754.75,247.75 766.9,244.48 779.05,212.7 791.2,236.48 803.35,234.2 815.5,197.91 827.65,180.55 839.8,197.91 851.95,230.23 864.1,248.08 876.25,248.63 888.4,238.67 900.55,231.99 912.7,133.61 924.85,217.84 937,234.56 949.15,172.19 961.3,229.42 973.45,220.42 985.6,235.27 997.75,244.9 1009.9,221.7 1022.05,241.82 1034.2,244.48 1046.35,246 1058.5,230.65 1070.65,224.06 1082.8,214.63 1094.95,198.55 1107.1,98.89 1119.25,183.12 1131.4,226.85 1143.55,232.8 1155.7,238.8 1167.85,230.44 1180,236.15 1192.15,222.19 1204.3,143.26 1216.45,199.84 1228.6,160.62 1240.75,249.99 1252.9,233.67 1265.05,201.77 1277.2,241.98 1289.35,247.06 1301.5,226.67 1313.65,248.36 1325.8,233.12 1337.95,198.55 1350.1,206.27 1362.25,221.7 1374.4,221.7 1386.55,176.05 1398.7,219.13 1410.85,171.55 1423,224.27 1435.15,239.95 1447.3,149.69 1459.45,231.99 1471.6,223.55 1483.75,226.56 1495.9,175.41 1508.05,248.53 1520.2,224.82 1532.35,227.63 1544.5,235.54 1556.65,157.4 1568.8,235.91 1580.95,172.19 1593.1,245.73 1605.25,242.14 1617.4,247.61 1629.55,239.22 1641.7,185.69 1653.85,229.04 1666,224.79 1678.15,228.57 1690.3,241.18 1702.45,233.04 1714.6,236.37 1726.75,226.4 1738.9,233.9 1751.05,212.7 1763.2,206.27 1775.35,231.35 1787.5,242.57" fill="none" stroke="#AA6556" stroke-opacity="0.8" stroke-width="1" stroke-linejoin="round"/>
<polygon points="50.05,277 50.05,231.99 62.2,250.38 74.35,270.18 86.5,257.32 98.65,254.88 110.8,251.28 122.95,258.61 135.1,240.61 147.25,259.9 159.4,260.28 171.55,253.98 183.7,256.42 195.85,269.93 208,267.74 220.15,261.83 232.3,251.79 244.45,260.28 256.6,263.88 268.75,249.99 280.9,257.32 293.05,264.53 305.2,252.31 317.35,267.74 329.5,267.74 341.65,257.32 353.8,256.42 365.95,246.78 378.1,252.57 390.25,256.42 402.4,262.34 414.55,259.9 426.7,245.88 438.85,257.71 451,257.97 463.15,262.34 475.3,265.3 487.45,213.99 499.6,248.71 511.75,253.98 523.9,259.51 536.05,245.36 548.2,248.19 560.35,247.42 572.5,248.71 584.65,242.28 596.8,252.31 608.95,255.14 621.1,249.99 633.25,253.21 645.4,253.34 657.55,244.72 669.7,242.02 681.85,256.17 694,252.95 706.15,257.32 718.3,254.24 730.45,249.48 742.6,249.48 754.75,258.35 766.9,256.17 779.05,258.74 791.2,245.75 803.35,245.24 815.5,251.02 827.65,243.05 839.8,259.64 851.95,248.71 864.1,237.65 876.25,251.02 888.4,259.64 900.55,250.25 912.7,248.71 924.85,262.85 937,249.48 949.15,251.02 961.3,245.24 973.45,249.99 985.6,234.43 997.75,252.05 1009.9,253.72 1022.05,243.95 1034.2,251.54 1046.35,245.49 1058.5,267.61 1070.65,246.26 1082.8,260.54 1094.95,256.17 1107.1,251.02 1119.25,256.17 1131.4,259.64 1143.55,254.24 1155.7,243.95 1167.85,253.72 1180,249.99 1192.15,250.51 1204.3,258.87 1216.45,257.32 1228.6,246.65 1240.75,259.25 1252.9,255.01 1265.05,249.99 1277.2,238.93 1289.35,249.48 1301.5,252.05 1313.65,255.01 1325.8,248.71 1337.95,234.05 1350.1,253.72 1362.25,252.82 1374.4,251.02 1386.55,250.25 1398.7,251.54 1410.85,256.81 1423,245.49 1435.15,248.71 1447.3,251.02 1459.45,249.48 1471.6,237.65 1483.75,247.42 1495.9,261.31 1508.05,246.26 1520.2,253.21 1532.35,256.81 1544.5,241.51 1556.65,252.57 1568.8,256.55 1580.95,254.24 1593.1,245.11 1605.25,244.34 1617.4,251.02 1629.55,243.44 1641.7,263.11 1653.85,258.87 1666,247.68 1678.15,257.84 1690.3,253.59 1702.45,260.93 1714.6,249.74 1726.75,254.24 1738.9,257.84 1751.05,244.34 1763.2,257.71 1775.35,254.75 1787.5,250.25 1787.5,277" fill="#DA8B45" fill-opacity="0.5"/><polyline points="50.05,231.99 62.2,250.38 74.35,270.18 86.5,257.32 98.65,254.88 110.8,251.28 122.95,258.61 135.1,240.61 147.25,259.9 159.4,260.28 171.55,253.98 183.7,256.42 195.85,269.93 208,267.74 220.15,261.83 232.3,251.79 244.45,260.28 256.6,263.88 268.75,249.99 280.9,257.32 293.05,264.53 305.2,252.31 317.35,267.74 329.5,267.74 341.65,257.32 353.8,256.42 365.95,246.78 378.1,252.57 390.25,256.42 402.4,262.34 414.55,259.9 426.7,245.88 438.85,257.71 451,257.97 463.15,262.34 475.3,265.3 487.45,213.99 499.6,248.71 511.75,253.98 523.9,259.51 536.05,245.36 548.2,248.19 560.35,247.42 572.5,248.71 584.65,242.28 596.8,252.31 608.95,255.14 621.1,249.99 633.25,253.21 645.4,253.34 657.55,244.72 669.7,242.02 681.85,256.17 694,252.95 706.15,257.32 718.3,254.24 730.45,249.48 742.6,249.48 754.75,258.35 766.9,256.17 779.05,258.74 791.2,245.75 803.35,245.24 815.5,251.02 827.65,243.05 839.8,259.64 851.95,248.71 864.1,237.65 876.25,251.02 888.4,259.64 900.55,250.25 912.7,248.71 924.85,262.85 937,249.48 949.15,251.02 961.3,245.24 973.45,249.99 985.6,234.43 997.75,252.05 1009.9,253.72 1022.05,243.95 1034.2,251.54 1046.35,245.49 1058.5,267.61 1070.65,246.26 1082.8,260.54 1094.95,256.17 1107.1,251.02 1119.25,256.17 1131.4,259.64 1143.55,254.24 1155.7,243.95 1167.85,253.72 1180,249.99 1192.15,250.51 1204.3,258.87 1216.45,257.32 1228.6,246.65 1240.75,259.25 1252.9,255.01 1265.05,249.99 1277.2,238.93 1289.35,249.48 1301.5,252.05 1313.65,255.01 1325.8,248.71 1337.95,234.05 1350.1,253.72 1362.25,252.82 1374.4,251.02 1386.55,250.25 1398.7,251.54 1410.85,256.81 1423,245.49 1435.15,248.71 1447.3,251.02 1459.45,249.48 1471.6,237.65 1483.75,247.42 1495.9,261.31 1508.05,246.26 1520.2,253.21 1532.35,256.81 1544.5,241.51 1556.65,252.57 1568.8,256.55 1580.95,254.24 1593.1,245.11 1605.25,244.34 1617.4,251.02 1629.55,243.44 1641.7,263.11 1653.85,258.87 1666,247.68 1678.15,257.84 1690.3,253.59 1702.45,260.93 1714.6,249.74 1726.75,254.24 1738.9,257.84 1751.05,244.34 1763.2,257.71 1775.35,254.75 1787.5,250.25" fill="none" stroke="#DA8B45" stroke-opacity="0.8" stroke-width="1" stroke-linejoin="round"/>
<g fill="#438f7a" fill-opacity="0.9"><circle cx="50.05" cy="186.98" r="1.1"/><circle cx="62.2" cy="215.27" r="1.1"/><circle cx="74.35" cy="199.84" r="1.1"/><circle cx="86.5" cy="183.12" r="1.1"/><circle cx="98.65" cy="243.56" r="1.1"/><circle cx="110.8" cy="244.45" r="1.1"/><circle cx="122.95" cy="252.36" r="1.1"/><circle cx="135.1" cy="240.8" r="1.1"/><circle cx="147.25" cy="252.89" r="1.1"/><circle cx="159.4" cy="242.7" r="1.1"/><circle cx="171.55" cy="252.06" r="1.1"/><circle cx="183.7" cy="251.52" r="1.1"/><circle cx="195.85" cy="242.93" r="1.1"/><circle cx="208" cy="232.59" r="1.1"/><circle cx="220.15" cy="250.67" r="1.1"/><circle cx="232.3" cy="248.11" r="1.1"/><circle cx="244.45" cy="237.71" r="1.1"/><circle cx="256.6" cy="229.48" r="1.1"/><circle cx="268.75" cy="231.99" r="1.1"/><circle cx="280.9" cy="243.65" r="1.1"/><circle cx="293.05" cy="228.74" r="1.1"/><circle cx="305.2" cy="252.65" r="1.1"/><circle cx="317.35" cy="231.77" r="1.1"/><circle cx="329.5" cy="246.4" r="1.1"/><circle cx="341.65" cy="250.14" r="1.1"/><circle cx="353.8" cy="250.82" r="1.1"/><circle cx="365.95" cy="245.92" r="1.1"/><circle cx="378.1" cy="232.86" r="1.1"/><circle cx="390.25" cy="249.2" r="1.1"/><circle cx="402.4" cy="238.89" r="1.1"/><circle cx="414.55" cy="237.42" r="1.1"/><circle cx="426.7" cy="244.27" r="1.1"/><circle cx="438.85" cy="239.76" r="1.1"/><circle cx="451" cy="226.85" r="1.1"/><circle cx="463.15" cy="252.32" r="1.1"/><circle cx="475.3" cy="248.55" r="1.1"/><circle cx="487.45" cy="236.35" r="1.1"/><circle cx="499.6" cy="242.85" r="1.1"/><circle cx="511.75" cy="245.77" r="1.1"/><circle cx="523.9" cy="238.79" r="1.1"/><circle cx="536.05" cy="242.2" r="1.1"/><circle cx="548.2" cy="246.14" r="1.1"/><circle cx="560.35" cy="233.42" r="1.1"/><circle cx="572.5" cy="235.87" r="1.1"/><circle cx="584.65" cy="247.57" r="1.1"/><circle cx="596.8" cy="239.08" r="1.1"/><circle cx="608.95" cy="240.34" r="1.1"/><circle cx="621.1" cy="231.34" r="1.1"/><circle cx="633.25" cy="235.09" r="1.1"/><circle cx="645.4" cy="246.45" r="1.1"/><circle cx="657.55" cy="228.64" r="1.1"/><circle cx="669.7" cy="250.82" r="1.1"/><circle cx="681.85" cy="243.1" r="1.1"/><circle cx="694" cy="234.38" r="1.1"/><circle cx="706.15" cy="249.94" r="1.1"/><circle cx="718.3" cy="241.28" r="1.1"/><circle cx="730.45" cy="252.84" r="1.1"/><circle cx="742.6" cy="236.67" r="1.1"/><circle cx="754.75" cy="234.19" r="1.1"/><circle cx="766.9" cy="239.11" r="1.1"/><circle cx="779.05" cy="231.33" r="1.1"/><circle cx="791.2" cy="245.78" r="1.1"/><circle cx="803.35" cy="235.97" r="1.1"/><circle cx="815.5" cy="238.56" r="1.1"/><circle cx="827.65" cy="238.94" r="1.1"/><circle cx="839.8" cy="242.12" r="1.1"/><circle cx="851.95" cy="232.25" r="1.1"/><circle cx="864.1" cy="229.55" r="1.1"/><circle cx="876.25" cy="241.66" r="1.1"/><circle cx="888.4" cy="236.77" r="1.1"/><circle cx="900.55" cy="252.29" r="1.1"/><circle cx="912.7" cy="235.81" r="1.1"/><circle cx="924.85" cy="237.21" r="1.1"/><circle cx="937" cy="228.31" r="1.1"/><circle cx="949.15" cy="232.71" r="1.1"/><circle cx="961.3" cy="246.53" r="1.1"/><circle cx="973.45" cy="243.93" r="1.1"/><circle cx="985.6" cy="236.65" r="1.1"/><circle cx="997.75" cy="253.27" r="1.1"/><circle cx="1009.9" cy="241.98" r="1.1"/><circle cx="1022.05" cy="249.53" r="1.1"/><circle cx="1034.2" cy="250.84" r="1.1"/><circle cx="1046.35" cy="252.34" r="1.1"/><circle cx="1058.5" cy="234.09" r="1.1"/><circle cx="1070.65" cy="250.53" r="1.1"/><circle cx="1082.8" cy="247.48" r="1.1"/><circle cx="1094.95" cy="243.8" r="1.1"/><circle cx="1107.1" cy="231.44" r="1.1"/><circle cx="1119.25" cy="251.78" r="1.1"/><circle cx="1131.4" cy="242.3" r="1.1"/><circle cx="1143.55" cy="239.72" r="1.1"/><circle cx="1155.7" cy="231.13" r="1.1"/><circle cx="1167.85" cy="232.78" r="1.1"/><circle cx="1180" cy="231.63" r="1.1"/><circle cx="1192.15" cy="246.69" r="1.1"/><circle cx="1204.3" cy="243.17" r="1.1"/><circle cx="1216.45" cy="244.62" r="1.1"/><circle cx="1228.6" cy="231.11" r="1.1"/><circle cx="1240.75" cy="229.22" r="1.1"/><circle cx="1252.9" cy="249.97" r="1.1"/><circle cx="1265.05" cy="249.32" r="1.1"/><circle cx="1277.2" cy="247.89" r="1.1"/><circle cx="1289.35" cy="247.85" r="1.1"/><circle cx="1301.5" cy="241.38" r="1.1"/><circle cx="1313.65" cy="238.7" r="1.1"/><circle cx="1325.8" cy="247.09" r="1.1"/><circle cx="1337.95" cy="253.75" r="1.1"/><circle cx="1350.1" cy="243.08" r="1.1"/><circle cx="1362.25" cy="244.35" r="1.1"/><circle cx="1374.4" cy="239.29" r="1.1"/><circle cx="1386.55" cy="229.34" r="1.1"/><circle cx="1398.7" cy="236.09" r="1.1"/><circle cx="1410.85" cy="240.59" r="1.1"/><circle cx="1423" cy="237.97" r="1.1"/><circle cx="1435.15" cy="236.46" r="1.1"/><circle cx="1447.3" cy="252.46" r="1.1"/><circle cx="1459.45" cy="230.72" r="1.1"/><circle cx="1471.6" cy="233.79" r="1.1"/><circle cx="1483.75" cy="231.36" r="1.1"/><circle cx="1495.9" cy="233.33" r="1.1"/><circle cx="1508.05" cy="243.76" r="1.1"/><circle cx="1520.2" cy="243.59" r="1.1"/><circle cx="1532.35" cy="251.19" r="1.1"/><circle cx="1544.5" cy="237.54" r="1.1"/><circle cx="1556.65" cy="252.25" r="1.1"/><circle cx="1568.8" cy="252.12" r="1.1"/><circle cx="1580.95" cy="248.48" r="1.1"/><circle cx="1593.1" cy="249.68" r="1.1"/><circle cx="1605.25" cy="245.11" r="1.1"/><circle cx="1617.4" cy="252.5" r="1.1"/><circle cx="1629.55" cy="253.85" r="1.1"/><circle cx="1641.7" cy="249.96" r="1.1"/><circle cx="1653.85" cy="251.24" r="1.1"/><circle cx="1666" cy="244.5" r="1.1"/><circle cx="1678.15" cy="253.2" r="1.1"/><circle cx="1690.3" cy="231.36" r="1.1"/><circle cx="1702.45" cy="238.06" r="1.1"/><circle cx="1714.6" cy="228.13" r="1.1"/><circle cx="1726.75" cy="228.13" r="1.1"/><circle cx="1738.9" cy="244.92" r="1.1"/><circle cx="1751.05" cy="244.49" r="1.1"/><circle cx="1763.2" cy="250.69" r="1.1"/><circle cx="1775.35" cy="232.02" r="1.1"/><circle cx="1787.5" cy="237.13" r="1.1"/></g>
<g fill="#4c7499" fill-opacity="0.9"><circle cx="50.05" cy="189.55" r="1.1"/><circle cx="62.2" cy="219.13" r="1.1"/><circle cx="74.35" cy="202.41" r="1.1"/><circle cx="86.5" cy="193.41" r="1.1"/><circle cx="98.65" cy="244.85" r="1.1"/><circle cx="110.8" cy="263.84" r="1.1"/><circle cx="122.95" cy="252.23" r="1.1"/><circle cx="135.1" cy="265.96" r="1.1"/><circle cx="147.25" cy="268.81" r="1.1"/><circle cx="159.4" cy="249.72" r="1.1"/><circle cx="171.55" cy="258.41" r="1.1"/><circle cx="183.7" cy="266.27" r="1.1"/><circle cx="195.85" cy="258.11" r="1.1"/><circle cx="208" cy="268.73" r="1.1"/><circle cx="220.15" cy="258.42" r="1.1"/><circle cx="232.3" cy="249.15" r="1.1"/><circle cx="244.45" cy="251.52" r="1.1"/><circle cx="256.6" cy="254.96" r="1.1"/><circle cx="268.75" cy="263.91" r="1.1"/><circle cx="280.9" cy="261.74" r="1.1"/><circle cx="293.05" cy="265.85" r="1.1"/><circle cx="305.2" cy="253.4" r="1.1"/><circle cx="317.35" cy="258.33" r="1.1"/><circle cx="329.5" cy="253.25" r="1.1"/><circle cx="341.65" cy="262.5" r="1.1"/><circle cx="353.8" cy="264.69" r="1.1"/><circle cx="365.95" cy="252.59" r="1.1"/><circle cx="378.1" cy="249.02" r="1.1"/><circle cx="390.25" cy="251.74" r="1.1"/><circle cx="402.4" cy="252.7" r="1.1"/><circle cx="414.55" cy="252.45" r="1.1"/><circle cx="426.7" cy="254.06" r="1.1"/><circle cx="438.85" cy="264.62" r="1.1"/><circle cx="451" cy="258.63" r="1.1"/><circle cx="463.15" cy="261.97" r="1.1"/><circle cx="475.3" cy="268.69" r="1.1"/><circle cx="487.45" cy="268.71" r="1.1"/><circle cx="499.6" cy="263.53" r="1.1"/><circle cx="511.75" cy="263.95" r="1.1"/><circle cx="523.9" cy="255.03" r="1.1"/><circle cx="536.05" cy="249.6" r="1.1"/><circle cx="548.2" cy="260.08" r="1.1"/><circle cx="560.35" cy="250" r="1.1"/><circle cx="572.5" cy="248.95" r="1.1"/><circle cx="584.65" cy="249.63" r="1.1"/><circle cx="596.8" cy="261.78" r="1.1"/><circle cx="608.95" cy="264.75" r="1.1"/><circle cx="621.1" cy="264.62" r="1.1"/><circle cx="633.25" cy="265.24" r="1.1"/><circle cx="645.4" cy="265.08" r="1.1"/><circle cx="657.55" cy="256.44" r="1.1"/><circle cx="669.7" cy="250.76" r="1.1"/><circle cx="681.85" cy="251.99" r="1.1"/><circle cx="694" cy="259.42" r="1.1"/><circle cx="706.15" cy="255.85" r="1.1"/><circle cx="718.3" cy="252.83" r="1.1"/><circle cx="730.45" cy="267.54" r="1.1"/><circle cx="742.6" cy="255.69" r="1.1"/><circle cx="754.75" cy="250.56" r="1.1"/><circle cx="766.9" cy="253.19" r="1.1"/><circle cx="779.05" cy="253.85" r="1.1"/><circle cx="791.2" cy="259.45" r="1.1"/><circle cx="803.35" cy="265.61" r="1.1"/><circle cx="815.5" cy="253.05" r="1.1"/><circle cx="827.65" cy="262.44" r="1.1"/><circle cx="839.8" cy="252.81" r="1.1"/><circle cx="851.95" cy="249.29" r="1.1"/><circle cx="864.1" cy="261.14" r="1.1"/><circle cx="876.25" cy="261.03" r="1.1"/><circle cx="888.4" cy="249.8" r="1.1"/><circle cx="900.55" cy="254.37" r="1.1"/><circle cx="912.7" cy="265.79" r="1.1"/><circle cx="924.85" cy="266.67" r="1.1"/><circle cx="937" cy="266.17" r="1.1"/><circle cx="949.15" cy="250.67" r="1.1"/><circle cx="961.3" cy="252.69" r="1.1"/><circle cx="973.45" cy="266.28" r="1.1"/><circle cx="985.6" cy="252.28" r="1.1"/><circle cx="997.75" cy="249.11" r="1.1"/><circle cx="1009.9" cy="255.76" r="1.1"/><circle cx="1022.05" cy="262.07" r="1.1"/><circle cx="1034.2" cy="257.99" r="1.1"/><circle cx="1046.35" cy="266.59" r="1.1"/><circle cx="1058.5" cy="268.99" r="1.1"/><circle cx="1070.65" cy="249.31" r="1.1"/><circle cx="1082.8" cy="255.92" r="1.1"/><circle cx="1094.95" cy="258.45" r="1.1"/><circle cx="1107.1" cy="250.07" r="1.1"/><circle cx="1119.25" cy="260.36" r="1.1"/><circle cx="1131.4" cy="251.35" r="1.1"/><circle cx="1143.55" cy="252.29" r="1.1"/><circle cx="1155.7" cy="264.94" r="1.1"/><circle cx="1167.85" cy="264.1" r="1.1"/><circle cx="1180" cy="263.26" r="1.1"/><circle cx="1192.15" cy="264.33" r="1.1"/><circle cx="1204.3" cy="257.22" r="1.1"/><circle cx="1216.45" cy="263.95" r="1.1"/><circle cx="1228.6" cy="260.66" r="1.1"/><circle cx="1240.75" cy="266.59" r="1.1"/><circle cx="1252.9" cy="250.56" r="1.1"/><circle cx="1265.05" cy="262" r="1.1"/><circle cx="1277.2" cy="259.86" r="1.1"/><circle cx="1289.35" cy="257.28" r="1.1"/><circle cx="1301.5" cy="250.68" r="1.1"/><circle cx="1313.65" cy="260.63" r="1.1"/><circle cx="1325.8" cy="250.4" r="1.1"/><circle cx="1337.95" cy="258.96" r="1.1"/><circle cx="1350.1" cy="258.34" r="1.1"/><circle cx="1362.25" cy="258.51" r="1.1"/><circle cx="1374.4" cy="268.9" r="1.1"/><circle cx="1386.55" cy="260.23" r="1.1"/><circle cx="1398.7" cy="265.52" r="1.1"/><circle cx="1410.85" cy="269.2" r="1.1"/><circle cx="1423" cy="252.84" r="1.1"/><circle cx="1435.15" cy="265.74" r="1.1"/><circle cx="1447.3" cy="259.54" r="1.1"/><circle cx="1459.45" cy="254.36" r="1.1"/><circle cx="1471.6" cy="257.83" r="1.1"/><circle cx="1483.75" cy="262.58" r="1.1"/><circle cx="1495.9" cy="258.62" r="1.1"/><circle cx="1508.05" cy="257.86" r="1.1"/><circle cx="1520.2" cy="253.15" r="1.1"/><circle cx="1532.35" cy="267.1" r="1.1"/><circle cx="1544.5" cy="257.76" r="1.1"/><circle cx="1556.65" cy="264.17" r="1.1"/><circle cx="1568.8" cy="263.59" r="1.1"/><circle cx="1580.95" cy="253.39" r="1.1"/><circle cx="1593.1" cy="258.84" r="1.1"/><circle cx="1605.25" cy="257.73" r="1.1"/><circle cx="1617.4" cy="253.65" r="1.1"/><circle cx="1629.55" cy="250.51" r="1.1"/><circle cx="1641.7" cy="260.16" r="1.1"/><circle cx="1653.85" cy="256.68" r="1.1"/><circle cx="1666" cy="258.88" r="1.1"/><circle cx="1678.15" cy="258.75" r="1.1"/><circle cx="1690.3" cy="255.03" r="1.1"/><circle cx="1702.45" cy="259.98" r="1.1"/><circle cx="1714.6" cy="258.31" r="1.1"/><circle cx="1726.75" cy="259.45" r="1.1"/><circle cx="1738.9" cy="249.91" r="1.1"/><circle cx="1751.05" cy="254.9" r="1.1"/><circle cx="1763.2" cy="251.25" r="1.1"/><circle cx="1775.35" cy="249.9" r="1.1"/><circle cx="1787.5" cy="263.94" r="1.1"/></g>
<g fill="#94866c" fill-opacity="0.9"><circle cx="50.05" cy="262.96" r="1.1"/><circle cx="62.2" cy="263.5" r="1.1"/><circle cx="74.35" cy="255.53" r="1.1"/><circle cx="86.5" cy="257.55" r="1.1"/><circle cx="98.65" cy="247.57" r="1.1"/><circle cx="110.8" cy="249.17" r="1.1"/><circle cx="122.95" cy="242.91" r="1.1"/><circle cx="135.1" cy="245.54" r="1.1"/><circle cx="147.25" cy="212.7" r="1.1"/><circle cx="159.4" cy="72.53" r="1.1"/><circle cx="171.55" cy="225.56" r="1.1"/><circle cx="183.7" cy="254.91" r="1.1"/><circle cx="195.85" cy="236.28" r="1.1"/><circle cx="208" cy="259.91" r="1.1"/><circle cx="220.15" cy="243.65" r="1.1"/><circle cx="232.3" cy="245.94" r="1.1"/><circle cx="244.45" cy="262.9" r="1.1"/><circle cx="256.6" cy="240.51" r="1.1"/><circle cx="268.75" cy="238.91" r="1.1"/><circle cx="280.9" cy="246.39" r="1.1"/><circle cx="293.05" cy="243.38" r="1.1"/><circle cx="305.2" cy="241.16" r="1.1"/><circle cx="317.35" cy="260.2" r="1.1"/><circle cx="329.5" cy="249.32" r="1.1"/><circle cx="341.65" cy="249.87" r="1.1"/><circle cx="353.8" cy="240.52" r="1.1"/><circle cx="365.95" cy="241.37" r="1.1"/><circle cx="378.1" cy="240.76" r="1.1"/><circle cx="390.25" cy="247.62" r="1.1"/><circle cx="402.4" cy="238.88" r="1.1"/><circle cx="414.55" cy="244.82" r="1.1"/><circle cx="426.7" cy="244.52" r="1.1"/><circle cx="438.85" cy="257.63" r="1.1"/><circle cx="451" cy="263.26" r="1.1"/><circle cx="463.15" cy="260.37" r="1.1"/><circle cx="475.3" cy="253.93" r="1.1"/><circle cx="487.45" cy="261.17" r="1.1"/><circle cx="499.6" cy="240.49" r="1.1"/><circle cx="511.75" cy="248.34" r="1.1"/><circle cx="523.9" cy="246.38" r="1.1"/><circle cx="536.05" cy="246.42" r="1.1"/><circle cx="548.2" cy="244.88" r="1.1"/><circle cx="560.35" cy="250.3" r="1.1"/><circle cx="572.5" cy="264.05" r="1.1"/><circle cx="584.65" cy="241.57" r="1.1"/><circle cx="596.8" cy="242.97" r="1.1"/><circle cx="608.95" cy="249.91" r="1.1"/><circle cx="621.1" cy="249" r="1.1"/><circle cx="633.25" cy="245.49" r="1.1"/><circle cx="645.4" cy="262.27" r="1.1"/><circle cx="657.55" cy="243.29" r="1.1"/><circle cx="669.7" cy="257" r="1.1"/><circle cx="681.85" cy="262.03" r="1.1"/><circle cx="694" cy="256.63" r="1.1"/><circle cx="706.15" cy="243.51" r="1.1"/><circle cx="718.3" cy="258.33" r="1.1"/><circle cx="730.45" cy="243.21" r="1.1"/><circle cx="742.6" cy="236.53" r="1.1"/><circle cx="754.75" cy="250.17" r="1.1"/><circle cx="766.9" cy="253.32" r="1.1"/><circle cx="779.05" cy="250.59" r="1.1"/><circle cx="791.2" cy="244.8" r="1.1"/><circle cx="803.35" cy="242.44" r="1.1"/><circle cx="815.5" cy="246.68" r="1.1"/><circle cx="827.65" cy="245.95" r="1.1"/><circle cx="839.8" cy="261.95" r="1.1"/><circle cx="851.95" cy="259.97" r="1.1"/><circle cx="864.1" cy="256.96" r="1.1"/><circle cx="876.25" cy="243.11" r="1.1"/><circle cx="888.4" cy="255.53" r="1.1"/><circle cx="900.55" cy="248.08" r="1.1"/><circle cx="912.7" cy="263.79" r="1.1"/><circle cx="924.85" cy="262.42" r="1.1"/><circle cx="937" cy="256.54" r="1.1"/><circle cx="949.15" cy="245.13" r="1.1"/><circle cx="961.3" cy="244.56" r="1.1"/><circle cx="973.45" cy="245.02" r="1.1"/><circle cx="985.6" cy="255.91" r="1.1"/><circle cx="997.75" cy="249.53" r="1.1"/><circle cx="1009.9" cy="250.99" r="1.1"/><circle cx="1022.05" cy="250.95" r="1.1"/><circle cx="1034.2" cy="260.79" r="1.1"/><circle cx="1046.35" cy="238.86" r="1.1"/><circle cx="1058.5" cy="258.5" r="1.1"/><circle cx="1070.65" cy="236.47" r="1.1"/><circle cx="1082.8" cy="237.65" r="1.1"/><circle cx="1094.95" cy="263.64" r="1.1"/><circle cx="1107.1" cy="251.15" r="1.1"/><circle cx="1119.25" cy="240.94" r="1.1"/><circle cx="1131.4" cy="236.75" r="1.1"/><circle cx="1143.55" cy="251.42" r="1.1"/><circle cx="1155.7" cy="256.54" r="1.1"/><circle cx="1167.85" cy="258.2" r="1.1"/><circle cx="1180" cy="237.39" r="1.1"/><circle cx="1192.15" cy="258.18" r="1.1"/><circle cx="1204.3" cy="247.69" r="1.1"/><circle cx="1216.45" cy="260.13" r="1.1"/><circle cx="1228.6" cy="249.31" r="1.1"/><circle cx="1240.75" cy="237.19" r="1.1"/><circle cx="1252.9" cy="260.39" r="1.1"/><circle cx="1265.05" cy="240.93" r="1.1"/><circle cx="1277.2" cy="249.75" r="1.1"/><circle cx="1289.35" cy="239.05" r="1.1"/><circle cx="1301.5" cy="244.24" r="1.1"/><circle cx="1313.65" cy="257.59" r="1.1"/><circle cx="1325.8" cy="238.74" r="1.1"/><circle cx="1337.95" cy="250.39" r="1.1"/><circle cx="1350.1" cy="263.44" r="1.1"/><circle cx="1362.25" cy="264.04" r="1.1"/><circle cx="1374.4" cy="250.23" r="1.1"/><circle cx="1386.55" cy="251.39" r="1.1"/><circle cx="1398.7" cy="255.6" r="1.1"/><circle cx="1410.85" cy="260.16" r="1.1"/><circle cx="1423" cy="254.41" r="1.1"/><circle cx="1435.15" cy="255.2" r="1.1"/><circle cx="1447.3" cy="240.37" r="1.1"/><circle cx="1459.45" cy="264.09" r="1.1"/><circle cx="1471.6" cy="242.9" r="1.1"/><circle cx="1483.75" cy="240.4" r="1.1"/><circle cx="1495.9" cy="260.74" r="1.1"/><circle cx="1508.05" cy="237.93" r="1.1"/><circle cx="1520.2" cy="243.97" r="1.1"/><circle cx="1532.35" cy="238.63" r="1.1"/><circle cx="1544.5" cy="255.94" r="1.1"/><circle cx="1556.65" cy="253.61" r="1.1"/><circle cx="1568.8" cy="253.02" r="1.1"/><circle cx="1580.95" cy="235.88" r="1.1"/><circle cx="1593.1" cy="247.47" r="1.1"/><circle cx="1605.25" cy="253.93" r="1.1"/><circle cx="1617.4" cy="252.03" r="1.1"/><circle cx="1629.55" cy="256.36" r="1.1"/><circle cx="1641.7" cy="262.77" r="1.1"/><circle cx="1653.85" cy="261.26" r="1.1"/><circle cx="1666" cy="240.53" r="1.1"/><circle cx="1678.15" cy="256.06" r="1.1"/><circle cx="1690.3" cy="237.67" r="1.1"/><circle cx="1702.45" cy="257.09" r="1.1"/><circle cx="1714.6" cy="256.62" r="1.1"/><circle cx="1726.75" cy="249.68" r="1.1"/><circle cx="1738.9" cy="258.77" r="1.1"/><circle cx="1751.05" cy="253.58" r="1.1"/><circle cx="1763.2" cy="237.09" r="1.1"/><circle cx="1775.35" cy="239.12" r="1.1"/><circle cx="1787.5" cy="241.17" r="1.1"/></g>
<g fill="#745993" fill-opacity="0.9"><circle cx="50.05" cy="112.39" r="1.1"/><circle cx="62.2" cy="159.97" r="1.1"/><circle cx="74.35" cy="159.33" r="1.1"/><circle cx="86.5" cy="197.27" r="1.1"/><circle cx="98.65" cy="190.84" r="1.1"/><circle cx="110.8" cy="148.4" r="1.1"/><circle cx="122.95" cy="46.81" r="1.1"/><circle cx="135.1" cy="138.11" r="1.1"/><circle cx="147.25" cy="114.96" r="1.1"/><circle cx="159.4" cy="219.13" r="1.1"/><circle cx="171.55" cy="247.59" r="1.1"/><circle cx="183.7" cy="254.91" r="1.1"/><circle cx="195.85" cy="227.82" r="1.1"/><circle cx="208" cy="252.49" r="1.1"/><circle cx="220.15" cy="241.85" r="1.1"/><circle cx="232.3" cy="245.82" r="1.1"/><circle cx="244.45" cy="247.23" r="1.1"/><circle cx="256.6" cy="233.61" r="1.1"/><circle cx="268.75" cy="226.29" r="1.1"/><circle cx="280.9" cy="248.39" r="1.1"/><circle cx="293.05" cy="236.18" r="1.1"/><circle cx="305.2" cy="247.14" r="1.1"/><circle cx="317.35" cy="239.22" r="1.1"/><circle cx="329.5" cy="244.25" r="1.1"/><circle cx="341.65" cy="251.26" r="1.1"/><circle cx="353.8" cy="251.43" r="1.1"/><circle cx="365.95" cy="250.01" r="1.1"/><circle cx="378.1" cy="228.46" r="1.1"/><circle cx="390.25" cy="241.08" r="1.1"/><circle cx="402.4" cy="249.63" r="1.1"/><circle cx="414.55" cy="228.45" r="1.1"/><circle cx="426.7" cy="225.67" r="1.1"/><circle cx="438.85" cy="242.54" r="1.1"/><circle cx="451" cy="252.12" r="1.1"/><circle cx="463.15" cy="250.49" r="1.1"/><circle cx="475.3" cy="253.62" r="1.1"/><circle cx="487.45" cy="245.87" r="1.1"/><circle cx="499.6" cy="253.61" r="1.1"/><circle cx="511.75" cy="249.04" r="1.1"/><circle cx="523.9" cy="248.45" r="1.1"/><circle cx="536.05" cy="238.84" r="1.1"/><circle cx="548.2" cy="229.04" r="1.1"/><circle cx="560.35" cy="233.29" r="1.1"/><circle cx="572.5" cy="243.68" r="1.1"/><circle cx="584.65" cy="188.27" r="1.1"/><circle cx="596.8" cy="240.25" r="1.1"/><circle cx="608.95" cy="244.79" r="1.1"/><circle cx="621.1" cy="245.99" r="1.1"/><circle cx="633.25" cy="254.51" r="1.1"/><circle cx="645.4" cy="247.86" r="1.1"/><circle cx="657.55" cy="226.56" r="1.1"/><circle cx="669.7" cy="252.54" r="1.1"/><circle cx="681.85" cy="240.89" r="1.1"/><circle cx="694" cy="236.99" r="1.1"/><circle cx="706.15" cy="229.79" r="1.1"/><circle cx="718.3" cy="226.85" r="1.1"/><circle cx="730.45" cy="224.27" r="1.1"/><circle cx="742.6" cy="248.76" r="1.1"/><circle cx="754.75" cy="212.7" r="1.1"/><circle cx="766.9" cy="242.66" r="1.1"/><circle cx="779.05" cy="226.98" r="1.1"/><circle cx="791.2" cy="216.56" r="1.1"/><circle cx="803.35" cy="229.48" r="1.1"/><circle cx="815.5" cy="255.75" r="1.1"/><circle cx="827.65" cy="255.43" r="1.1"/><circle cx="839.8" cy="234.53" r="1.1"/><circle cx="851.95" cy="228.78" r="1.1"/><circle cx="864.1" cy="241.82" r="1.1"/><circle cx="876.25" cy="238.3" r="1.1"/><circle cx="888.4" cy="256.42" r="1.1"/><circle cx="900.55" cy="244.34" r="1.1"/><circle cx="912.7" cy="227.82" r="1.1"/><circle cx="924.85" cy="230.94" r="1.1"/><circle cx="937" cy="230.02" r="1.1"/><circle cx="949.15" cy="226.42" r="1.1"/><circle cx="961.3" cy="248.76" r="1.1"/><circle cx="973.45" cy="253.06" r="1.1"/><circle cx="985.6" cy="214.63" r="1.1"/><circle cx="997.75" cy="240.3" r="1.1"/><circle cx="1009.9" cy="235.37" r="1.1"/><circle cx="1022.05" cy="227.37" r="1.1"/><circle cx="1034.2" cy="234.15" r="1.1"/><circle cx="1046.35" cy="236.44" r="1.1"/><circle cx="1058.5" cy="224.27" r="1.1"/><circle cx="1070.65" cy="242.31" r="1.1"/><circle cx="1082.8" cy="239.4" r="1.1"/><circle cx="1094.95" cy="255.2" r="1.1"/><circle cx="1107.1" cy="232.28" r="1.1"/><circle cx="1119.25" cy="249.25" r="1.1"/><circle cx="1131.4" cy="203.7" r="1.1"/><circle cx="1143.55" cy="236.5" r="1.1"/><circle cx="1155.7" cy="247.05" r="1.1"/><circle cx="1167.85" cy="234.56" r="1.1"/><circle cx="1180" cy="248.65" r="1.1"/><circle cx="1192.15" cy="236.79" r="1.1"/><circle cx="1204.3" cy="234.86" r="1.1"/><circle cx="1216.45" cy="252.96" r="1.1"/><circle cx="1228.6" cy="254.25" r="1.1"/><circle cx="1240.75" cy="240.24" r="1.1"/><circle cx="1252.9" cy="238.43" r="1.1"/><circle cx="1265.05" cy="244.45" r="1.1"/><circle cx="1277.2" cy="249.52" r="1.1"/><circle cx="1289.35" cy="237.87" r="1.1"/><circle cx="1301.5" cy="213.34" r="1.1"/><circle cx="1313.65" cy="247.12" r="1.1"/><circle cx="1325.8" cy="242.21" r="1.1"/><circle cx="1337.95" cy="226.83" r="1.1"/><circle cx="1350.1" cy="236.53" r="1.1"/><circle cx="1362.25" cy="229.15" r="1.1"/><circle cx="1374.4" cy="241.75" r="1.1"/><circle cx="1386.55" cy="249.18" r="1.1"/><circle cx="1398.7" cy="248.8" r="1.1"/><circle cx="1410.85" cy="226.78" r="1.1"/><circle cx="1423" cy="234.68" r="1.1"/><circle cx="1435.15" cy="246.94" r="1.1"/><circle cx="1447.3" cy="255.75" r="1.1"/><circle cx="1459.45" cy="241.04" r="1.1"/><circle cx="1471.6" cy="235.61" r="1.1"/><circle cx="1483.75" cy="243.46" r="1.1"/><circle cx="1495.9" cy="248.48" r="1.1"/><circle cx="1508.05" cy="235.83" r="1.1"/><circle cx="1520.2" cy="227.87" r="1.1"/><circle cx="1532.35" cy="249.42" r="1.1"/><circle cx="1544.5" cy="255.37" r="1.1"/><circle cx="1556.65" cy="245.99" r="1.1"/><circle cx="1568.8" cy="219.13" r="1.1"/><circle cx="1580.95" cy="235.36" r="1.1"/><circle cx="1593.1" cy="250.31" r="1.1"/><circle cx="1605.25" cy="172.19" r="1.1"/><circle cx="1617.4" cy="233.61" r="1.1"/><circle cx="1629.55" cy="240.84" r="1.1"/><circle cx="1641.7" cy="250.09" r="1.1"/><circle cx="1653.85" cy="226.49" r="1.1"/><circle cx="1666" cy="246.8" r="1.1"/><circle cx="1678.15" cy="231.12" r="1.1"/><circle cx="1690.3" cy="249.3" r="1.1"/><circle cx="1702.45" cy="249.59" r="1.1"/><circle cx="1714.6" cy="232.63" r="1.1"/><circle cx="1726.75" cy="247.32" r="1.1"/><circle cx="1738.9" cy="203.7" r="1.1"/><circle cx="1751.05" cy="241.12" r="1.1"/><circle cx="1763.2" cy="250.64" r="1.1"/><circle cx="1775.35" cy="249.53" r="1.1"/><circle cx="1787.5" cy="243.55" r="1.1"/></g>
<g fill="#a1718b" fill-opacity="0.9"><circle cx="50.05" cy="228.17" r="1.1"/><circle cx="62.2" cy="219.43" r="1.1"/><circle cx="74.35" cy="244.19" r="1.1"/><circle cx="86.5" cy="236.56" r="1.1"/><circle cx="98.65" cy="242.14" r="1.1"/><circle cx="110.8" cy="218.64" r="1.1"/><circle cx="122.95" cy="244.33" r="1.1"/><circle cx="135.1" cy="247.11" r="1.1"/><circle cx="147.25" cy="246.85" r="1.1"/><circle cx="159.4" cy="236.57" r="1.1"/><circle cx="171.55" cy="220.99" r="1.1"/><circle cx="183.7" cy="221.44" r="1.1"/><circle cx="195.85" cy="226.09" r="1.1"/><circle cx="208" cy="217.92" r="1.1"/><circle cx="220.15" cy="219.96" r="1.1"/><circle cx="232.3" cy="238.55" r="1.1"/><circle cx="244.45" cy="242.98" r="1.1"/><circle cx="256.6" cy="219.82" r="1.1"/><circle cx="268.75" cy="225.67" r="1.1"/><circle cx="280.9" cy="247.72" r="1.1"/><circle cx="293.05" cy="228.2" r="1.1"/><circle cx="305.2" cy="237.02" r="1.1"/><circle cx="317.35" cy="237.17" r="1.1"/><circle cx="329.5" cy="238.47" r="1.1"/><circle cx="341.65" cy="243.48" r="1.1"/><circle cx="353.8" cy="248.62" r="1.1"/><circle cx="365.95" cy="240.07" r="1.1"/><circle cx="378.1" cy="237.86" r="1.1"/><circle cx="390.25" cy="219.22" r="1.1"/><circle cx="402.4" cy="244.89" r="1.1"/><circle cx="414.55" cy="218.95" r="1.1"/><circle cx="426.7" cy="242.31" r="1.1"/><circle cx="438.85" cy="237.7" r="1.1"/><circle cx="451" cy="223.35" r="1.1"/><circle cx="463.15" cy="223.34" r="1.1"/><circle cx="475.3" cy="235.36" r="1.1"/><circle cx="487.45" cy="247.19" r="1.1"/><circle cx="499.6" cy="234.1" r="1.1"/><circle cx="511.75" cy="237.2" r="1.1"/><circle cx="523.9" cy="220.33" r="1.1"/><circle cx="536.05" cy="242.75" r="1.1"/><circle cx="548.2" cy="206.27" r="1.1"/><circle cx="560.35" cy="221.02" r="1.1"/><circle cx="572.5" cy="247.77" r="1.1"/><circle cx="584.65" cy="236.03" r="1.1"/><circle cx="596.8" cy="223.65" r="1.1"/><circle cx="608.95" cy="225.05" r="1.1"/><circle cx="621.1" cy="247.45" r="1.1"/><circle cx="633.25" cy="247.63" r="1.1"/><circle cx="645.4" cy="246.78" r="1.1"/><circle cx="657.55" cy="220.31" r="1.1"/><circle cx="669.7" cy="240.78" r="1.1"/><circle cx="681.85" cy="225.64" r="1.1"/><circle cx="694" cy="220.98" r="1.1"/><circle cx="706.15" cy="219.77" r="1.1"/><circle cx="718.3" cy="240.3" r="1.1"/><circle cx="730.45" cy="219.15" r="1.1"/><circle cx="742.6" cy="229.67" r="1.1"/><circle cx="754.75" cy="240.62" r="1.1"/><circle cx="766.9" cy="226.59" r="1.1"/><circle cx="779.05" cy="238.94" r="1.1"/><circle cx="791.2" cy="240.2" r="1.1"/><circle cx="803.35" cy="248.59" r="1.1"/><circle cx="815.5" cy="225.39" r="1.1"/><circle cx="827.65" cy="216.56" r="1.1"/><circle cx="839.8" cy="229.14" r="1.1"/><circle cx="851.95" cy="219.6" r="1.1"/><circle cx="864.1" cy="247.96" r="1.1"/><circle cx="876.25" cy="241.49" r="1.1"/><circle cx="888.4" cy="234.04" r="1.1"/><circle cx="900.55" cy="219.18" r="1.1"/><circle cx="912.7" cy="219.27" r="1.1"/><circle cx="924.85" cy="236.78" r="1.1"/><circle cx="937" cy="240.96" r="1.1"/><circle cx="949.15" cy="235.44" r="1.1"/><circle cx="961.3" cy="233.48" r="1.1"/><circle cx="973.45" cy="220.06" r="1.1"/><circle cx="985.6" cy="243.06" r="1.1"/><circle cx="997.75" cy="223.94" r="1.1"/><circle cx="1009.9" cy="225.92" r="1.1"/><circle cx="1022.05" cy="223.31" r="1.1"/><circle cx="1034.2" cy="224.86" r="1.1"/><circle cx="1046.35" cy="229.97" r="1.1"/><circle cx="1058.5" cy="238.59" r="1.1"/><circle cx="1070.65" cy="238.85" r="1.1"/><circle cx="1082.8" cy="237.54" r="1.1"/><circle cx="1094.95" cy="224.56" r="1.1"/><circle cx="1107.1" cy="246.27" r="1.1"/><circle cx="1119.25" cy="242.62" r="1.1"/><circle cx="1131.4" cy="225.47" r="1.1"/><circle cx="1143.55" cy="241.08" r="1.1"/><circle cx="1155.7" cy="246.71" r="1.1"/><circle cx="1167.85" cy="247.66" r="1.1"/><circle cx="1180" cy="231.65" r="1.1"/><circle cx="1192.15" cy="238.65" r="1.1"/><circle cx="1204.3" cy="218.45" r="1.1"/><circle cx="1216.45" cy="221.44" r="1.1"/><circle cx="1228.6" cy="218.22" r="1.1"/><circle cx="1240.75" cy="240.53" r="1.1"/><circle cx="1252.9" cy="246.11" r="1.1"/><circle cx="1265.05" cy="206.27" r="1.1"/><circle cx="1277.2" cy="233.32" r="1.1"/><circle cx="1289.35" cy="226.8" r="1.1"/><circle cx="1301.5" cy="234.91" r="1.1"/><circle cx="1313.65" cy="241.48" r="1.1"/><circle cx="1325.8" cy="235.84" r="1.1"/><circle cx="1337.95" cy="229.56" r="1.1"/><circle cx="1350.1" cy="227.9" r="1.1"/><circle cx="1362.25" cy="225.62" r="1.1"/><circle cx="1374.4" cy="222.57" r="1.1"/><circle cx="1386.55" cy="228.2" r="1.1"/><circle cx="1398.7" cy="244.97" r="1.1"/><circle cx="1410.85" cy="222.76" r="1.1"/><circle cx="1423" cy="239.64" r="1.1"/><circle cx="1435.15" cy="219.13" r="1.1"/><circle cx="1447.3" cy="237.2" r="1.1"/><circle cx="1459.45" cy="225.93" r="1.1"/><circle cx="1471.6" cy="242.56" r="1.1"/><circle cx="1483.75" cy="241.07" r="1.1"/><circle cx="1495.9" cy="241.14" r="1.1"/><circle cx="1508.05" cy="243.98" r="1.1"/><circle cx="1520.2" cy="221.42" r="1.1"/><circle cx="1532.35" cy="230.86" r="1.1"/><circle cx="1544.5" cy="238.64" r="1.1"/><circle cx="1556.65" cy="236.48" r="1.1"/><circle cx="1568.8" cy="218.08" r="1.1"/><circle cx="1580.95" cy="233.05" r="1.1"/><circle cx="1593.1" cy="241.57" r="1.1"/><circle cx="1605.25" cy="223.76" r="1.1"/><circle cx="1617.4" cy="228.54" r="1.1"/><circle cx="1629.55" cy="218.12" r="1.1"/><circle cx="1641.7" cy="245.55" r="1.1"/><circle cx="1653.85" cy="234.05" r="1.1"/><circle cx="1666" cy="223.43" r="1.1"/><circle cx="1678.15" cy="222.77" r="1.1"/><circle cx="1690.3" cy="206.27" r="1.1"/><circle cx="1702.45" cy="247.46" r="1.1"/><circle cx="1714.6" cy="239.64" r="1.1"/><circle cx="1726.75" cy="245.03" r="1.1"/><circle cx="1738.9" cy="242.86" r="1.1"/><circle cx="1751.05" cy="218.68" r="1.1"/><circle cx="1763.2" cy="228.78" r="1.1"/><circle cx="1775.35" cy="220" r="1.1"/><circle cx="1787.5" cy="237.22" r="1.1"/></g>
<g fill="#ab9845" fill-opacity="0.9"><circle cx="50.05" cy="221.7" r="1.1"/><circle cx="62.2" cy="251.28" r="1.1"/><circle cx="74.35" cy="243.56" r="1.1"/><circle cx="86.5" cy="235.85" r="1.1"/><circle cx="98.65" cy="224.52" r="1.1"/><circle cx="110.8" cy="248.29" r="1.1"/><circle cx="122.95" cy="234.41" r="1.1"/><circle cx="135.1" cy="233.74" r="1.1"/><circle cx="147.25" cy="245.12" r="1.1"/><circle cx="159.4" cy="180.55" r="1.1"/><circle cx="171.55" cy="211.41" r="1.1"/><circle cx="183.7" cy="177.98" r="1.1"/><circle cx="195.85" cy="194.7" r="1.1"/><circle cx="208" cy="186.98" r="1.1"/><circle cx="220.15" cy="231.99" r="1.1"/><circle cx="232.3" cy="245.52" r="1.1"/><circle cx="244.45" cy="250.96" r="1.1"/><circle cx="256.6" cy="242.02" r="1.1"/><circle cx="268.75" cy="232.09" r="1.1"/><circle cx="280.9" cy="208.84" r="1.1"/><circle cx="293.05" cy="242.45" r="1.1"/><circle cx="305.2" cy="216.56" r="1.1"/><circle cx="317.35" cy="228.78" r="1.1"/><circle cx="329.5" cy="235.77" r="1.1"/><circle cx="341.65" cy="216.56" r="1.1"/><circle cx="353.8" cy="248.41" r="1.1"/><circle cx="365.95" cy="240.1" r="1.1"/><circle cx="378.1" cy="235.72" r="1.1"/><circle cx="390.25" cy="233.2" r="1.1"/><circle cx="402.4" cy="248.7" r="1.1"/><circle cx="414.55" cy="246.65" r="1.1"/><circle cx="426.7" cy="231.61" r="1.1"/><circle cx="438.85" cy="239.69" r="1.1"/><circle cx="451" cy="243.26" r="1.1"/><circle cx="463.15" cy="242.58" r="1.1"/><circle cx="475.3" cy="224.31" r="1.1"/><circle cx="487.45" cy="242.44" r="1.1"/><circle cx="499.6" cy="235.25" r="1.1"/><circle cx="511.75" cy="241.17" r="1.1"/><circle cx="523.9" cy="197.91" r="1.1"/><circle cx="536.05" cy="226.83" r="1.1"/><circle cx="548.2" cy="223.08" r="1.1"/><circle cx="560.35" cy="240.99" r="1.1"/><circle cx="572.5" cy="204.98" r="1.1"/><circle cx="584.65" cy="230.68" r="1.1"/><circle cx="596.8" cy="245.52" r="1.1"/><circle cx="608.95" cy="251.11" r="1.1"/><circle cx="621.1" cy="225.77" r="1.1"/><circle cx="633.25" cy="239.29" r="1.1"/><circle cx="645.4" cy="203.06" r="1.1"/><circle cx="657.55" cy="202.41" r="1.1"/><circle cx="669.7" cy="204.98" r="1.1"/><circle cx="681.85" cy="238.24" r="1.1"/><circle cx="694" cy="246.68" r="1.1"/><circle cx="706.15" cy="250.86" r="1.1"/><circle cx="718.3" cy="235.68" r="1.1"/><circle cx="730.45" cy="233.15" r="1.1"/><circle cx="742.6" cy="225.54" r="1.1"/><circle cx="754.75" cy="248.76" r="1.1"/><circle cx="766.9" cy="233.68" r="1.1"/><circle cx="779.05" cy="240.79" r="1.1"/><circle cx="791.2" cy="237.01" r="1.1"/><circle cx="803.35" cy="247.15" r="1.1"/><circle cx="815.5" cy="243.27" r="1.1"/><circle cx="827.65" cy="236.54" r="1.1"/><circle cx="839.8" cy="225.1" r="1.1"/><circle cx="851.95" cy="202.41" r="1.1"/><circle cx="864.1" cy="224.27" r="1.1"/><circle cx="876.25" cy="240.35" r="1.1"/><circle cx="888.4" cy="195.98" r="1.1"/><circle cx="900.55" cy="245.7" r="1.1"/><circle cx="912.7" cy="247.7" r="1.1"/><circle cx="924.85" cy="224.6" r="1.1"/><circle cx="937" cy="223.68" r="1.1"/><circle cx="949.15" cy="237.62" r="1.1"/><circle cx="961.3" cy="249.77" r="1.1"/><circle cx="973.45" cy="225.08" r="1.1"/><circle cx="985.6" cy="221.7" r="1.1"/><circle cx="997.75" cy="225.7" r="1.1"/><circle cx="1009.9" cy="233.73" r="1.1"/><circle cx="1022.05" cy="227.95" r="1.1"/><circle cx="1034.2" cy="246.75" r="1.1"/><circle cx="1046.35" cy="203.7" r="1.1"/><circle cx="1058.5" cy="245" r="1.1"/><circle cx="1070.65" cy="239.84" r="1.1"/><circle cx="1082.8" cy="227.34" r="1.1"/><circle cx="1094.95" cy="231.99" r="1.1"/><circle cx="1107.1" cy="246.1" r="1.1"/><circle cx="1119.25" cy="245.11" r="1.1"/><circle cx="1131.4" cy="239.97" r="1.1"/><circle cx="1143.55" cy="236.63" r="1.1"/><circle cx="1155.7" cy="198.55" r="1.1"/><circle cx="1167.85" cy="247.8" r="1.1"/><circle cx="1180" cy="244.29" r="1.1"/><circle cx="1192.15" cy="230.77" r="1.1"/><circle cx="1204.3" cy="225.89" r="1.1"/><circle cx="1216.45" cy="250.12" r="1.1"/><circle cx="1228.6" cy="235.37" r="1.1"/><circle cx="1240.75" cy="229.85" r="1.1"/><circle cx="1252.9" cy="250.2" r="1.1"/><circle cx="1265.05" cy="227.57" r="1.1"/><circle cx="1277.2" cy="247.95" r="1.1"/><circle cx="1289.35" cy="234.32" r="1.1"/><circle cx="1301.5" cy="235.72" r="1.1"/><circle cx="1313.65" cy="233.54" r="1.1"/><circle cx="1325.8" cy="242.62" r="1.1"/><circle cx="1337.95" cy="239.4" r="1.1"/><circle cx="1350.1" cy="212.7" r="1.1"/><circle cx="1362.25" cy="239.23" r="1.1"/><circle cx="1374.4" cy="232.64" r="1.1"/><circle cx="1386.55" cy="238.64" r="1.1"/><circle cx="1398.7" cy="207.56" r="1.1"/><circle cx="1410.85" cy="250.62" r="1.1"/><circle cx="1423" cy="233.77" r="1.1"/><circle cx="1435.15" cy="237.43" r="1.1"/><circle cx="1447.3" cy="211.41" r="1.1"/><circle cx="1459.45" cy="229.68" r="1.1"/><circle cx="1471.6" cy="229.21" r="1.1"/><circle cx="1483.75" cy="211.41" r="1.1"/><circle cx="1495.9" cy="246.2" r="1.1"/><circle cx="1508.05" cy="237.89" r="1.1"/><circle cx="1520.2" cy="185.69" r="1.1"/><circle cx="1532.35" cy="194.7" r="1.1"/><circle cx="1544.5" cy="239.1" r="1.1"/><circle cx="1556.65" cy="248.69" r="1.1"/><circle cx="1568.8" cy="238.78" r="1.1"/><circle cx="1580.95" cy="236.85" r="1.1"/><circle cx="1593.1" cy="250.13" r="1.1"/><circle cx="1605.25" cy="233.27" r="1.1"/><circle cx="1617.4" cy="190.19" r="1.1"/><circle cx="1629.55" cy="230.53" r="1.1"/><circle cx="1641.7" cy="229.28" r="1.1"/><circle cx="1653.85" cy="182.48" r="1.1"/><circle cx="1666" cy="215.27" r="1.1"/><circle cx="1678.15" cy="221.7" r="1.1"/><circle cx="1690.3" cy="168.98" r="1.1"/><circle cx="1702.45" cy="201.13" r="1.1"/><circle cx="1714.6" cy="247.43" r="1.1"/><circle cx="1726.75" cy="227.03" r="1.1"/><circle cx="1738.9" cy="223.1" r="1.1"/><circle cx="1751.05" cy="230.57" r="1.1"/><circle cx="1763.2" cy="228.22" r="1.1"/><circle cx="1775.35" cy="245.8" r="1.1"/><circle cx="1787.5" cy="224.66" r="1.1"/></g>
<g fill="#885044" fill-opacity="0.9"><circle cx="50.05" cy="234.79" r="1.1"/><circle cx="62.2" cy="204.98" r="1.1"/><circle cx="74.35" cy="222.79" r="1.1"/><circle cx="86.5" cy="244.04" r="1.1"/><circle cx="98.65" cy="213.99" r="1.1"/><circle cx="110.8" cy="222.38" r="1.1"/><circle cx="122.95" cy="246.85" r="1.1"/><circle cx="135.1" cy="162.55" r="1.1"/><circle cx="147.25" cy="227.31" r="1.1"/><circle cx="159.4" cy="244.22" r="1.1"/><circle cx="171.55" cy="208.84" r="1.1"/><circle cx="183.7" cy="240.93" r="1.1"/><circle cx="195.85" cy="225.63" r="1.1"/><circle cx="208" cy="202.41" r="1.1"/><circle cx="220.15" cy="234.5" r="1.1"/><circle cx="232.3" cy="222.68" r="1.1"/><circle cx="244.45" cy="189.55" r="1.1"/><circle cx="256.6" cy="203.7" r="1.1"/><circle cx="268.75" cy="234.39" r="1.1"/><circle cx="280.9" cy="239.68" r="1.1"/><circle cx="293.05" cy="145.83" r="1.1"/><circle cx="305.2" cy="243.56" r="1.1"/><circle cx="317.35" cy="244.15" r="1.1"/><circle cx="329.5" cy="222.22" r="1.1"/><circle cx="341.65" cy="229.48" r="1.1"/><circle cx="353.8" cy="223.37" r="1.1"/><circle cx="365.95" cy="197.91" r="1.1"/><circle cx="378.1" cy="226.5" r="1.1"/><circle cx="390.25" cy="245.45" r="1.1"/><circle cx="402.4" cy="233.69" r="1.1"/><circle cx="414.55" cy="186.98" r="1.1"/><circle cx="426.7" cy="238.53" r="1.1"/><circle cx="438.85" cy="216.56" r="1.1"/><circle cx="451" cy="233" r="1.1"/><circle cx="463.15" cy="232.3" r="1.1"/><circle cx="475.3" cy="189.55" r="1.1"/><circle cx="487.45" cy="189.55" r="1.1"/><circle cx="499.6" cy="220.62" r="1.1"/><circle cx="511.75" cy="230.89" r="1.1"/><circle cx="523.9" cy="237.55" r="1.1"/><circle cx="536.05" cy="226.14" r="1.1"/><circle cx="548.2" cy="188.91" r="1.1"/><circle cx="560.35" cy="220.68" r="1.1"/><circle cx="572.5" cy="232.37" r="1.1"/><circle cx="584.65" cy="238.52" r="1.1"/><circle cx="596.8" cy="195.98" r="1.1"/><circle cx="608.95" cy="219.13" r="1.1"/><circle cx="621.1" cy="225.56" r="1.1"/><circle cx="633.25" cy="204.98" r="1.1"/><circle cx="645.4" cy="247.34" r="1.1"/><circle cx="657.55" cy="225.51" r="1.1"/><circle cx="669.7" cy="241.53" r="1.1"/><circle cx="681.85" cy="230.62" r="1.1"/><circle cx="694" cy="220.87" r="1.1"/><circle cx="706.15" cy="194.05" r="1.1"/><circle cx="718.3" cy="229.93" r="1.1"/><circle cx="730.45" cy="239.86" r="1.1"/><circle cx="742.6" cy="219.77" r="1.1"/><circle cx="754.75" cy="247.75" r="1.1"/><circle cx="766.9" cy="244.48" r="1.1"/><circle cx="779.05" cy="212.7" r="1.1"/><circle cx="791.2" cy="236.48" r="1.1"/><circle cx="803.35" cy="234.2" r="1.1"/><circle cx="815.5" cy="197.91" r="1.1"/><circle cx="827.65" cy="180.55" r="1.1"/><circle cx="839.8" cy="197.91" r="1.1"/><circle cx="851.95" cy="230.23" r="1.1"/><circle cx="864.1" cy="248.08" r="1.1"/><circle cx="876.25" cy="248.63" r="1.1"/><circle cx="888.4" cy="238.67" r="1.1"/><circle cx="900.55" cy="231.99" r="1.1"/><circle cx="912.7" cy="133.61" r="1.1"/><circle cx="924.85" cy="217.84" r="1.1"/><circle cx="937" cy="234.56" r="1.1"/><circle cx="949.15" cy="172.19" r="1.1"/><circle cx="961.3" cy="229.42" r="1.1"/><circle cx="973.45" cy="220.42" r="1.1"/><circle cx="985.6" cy="235.27" r="1.1"/><circle cx="997.75" cy="244.9" r="1.1"/><circle cx="1009.9" cy="221.7" r="1.1"/><circle cx="1022.05" cy="241.82" r="1.1"/><circle cx="1034.2" cy="244.48" r="1.1"/><circle cx="1046.35" cy="246" r="1.1"/><circle cx="1058.5" cy="230.65" r="1.1"/><circle cx="1070.65" cy="224.06" r="1.1"/><circle cx="1082.8" cy="214.63" r="1.1"/><circle cx="1094.95" cy="198.55" r="1.1"/><circle cx="1107.1" cy="98.89" r="1.1"/><circle cx="1119.25" cy="183.12" r="1.1"/><circle cx="1131.4" cy="226.85" r="1.1"/><circle cx="1143.55" cy="232.8" r="1.1"/><circle cx="1155.7" cy="238.8" r="1.1"/><circle cx="1167.85" cy="230.44" r="1.1"/><circle cx="1180" cy="236.15" r="1.1"/><circle cx="1192.15" cy="222.19" r="1.1"/><circle cx="1204.3" cy="143.26" r="1.1"/><circle cx="1216.45" cy="199.84" r="1.1"/><circle cx="1228.6" cy="160.62" r="1.1"/><circle cx="1240.75" cy="249.99" r="1.1"/><circle cx="1252.9" cy="233.67" r="1.1"/><circle cx="1265.05" cy="201.77" r="1.1"/><circle cx="1277.2" cy="241.98" r="1.1"/><circle cx="1289.35" cy="247.06" r="1.1"/><circle cx="1301.5" cy="226.67" r="1.1"/><circle cx="1313.65" cy="248.36" r="1.1"/><circle cx="1325.8" cy="233.12" r="1.1"/><circle cx="1337.95" cy="198.55" r="1.1"/><circle cx="1350.1" cy="206.27" r="1.1"/><circle cx="1362.25" cy="221.7" r="1.1"/><circle cx="1374.4" cy="221.7" r="1.1"/><circle cx="1386.55" cy="176.05" r="1.1"/><circle cx="1398.7" cy="219.13" r="1.1"/><circle cx="1410.85" cy="171.55" r="1.1"/><circle cx="1423" cy="224.27" r="1.1"/><circle cx="1435.15" cy="239.95" r="1.1"/><circle cx="1447.3" cy="149.69" r="1.1"/><circle cx="1459.45" cy="231.99" r="1.1"/><circle cx="1471.6" cy="223.55" r="1.1"/><circle cx="1483.75" cy="226.56" r="1.1"/><circle cx="1495.9" cy="175.41" r="1.1"/><circle cx="1508.05" cy="248.53" r="1.1"/><circle cx="1520.2" cy="224.82" r="1.1"/><circle cx="1532.35" cy="227.63" r="1.1"/><circle cx="1544.5" cy="235.54" r="1.1"/><circle cx="1556.65" cy="157.4" r="1.1"/><circle cx="1568.8" cy="235.91" r="1.1"/><circle cx="1580.95" cy="172.19" r="1.1"/><circle cx="1593.1" cy="245.73" r="1.1"/><circle cx="1605.25" cy="242.14" r="1.1"/><circle cx="1617.4" cy="247.61" r="1.1"/><circle cx="1629.55" cy="239.22" r="1.1"/><circle cx="1641.7" cy="185.69" r="1.1"/><circle cx="1653.85" cy="229.04" r="1.1"/><circle cx="1666" cy="224.79" r="1.1"/><circle cx="1678.15" cy="228.57" r="1.1"/><circle cx="1690.3" cy="241.18" r="1.1"/><circle cx="1702.45" cy="233.04" r="1.1"/><circle cx="1714.6" cy="236.37" r="1.1"/><circle cx="1726.75" cy="226.4" r="1.1"/><circle cx="1738.9" cy="233.9" r="1.1"/><circle cx="1751.05" cy="212.7" r="1.1"/><circle cx="1763.2" cy="206.27" r="1.1"/><circle cx="1775.35" cy="231.35" r="1.1"/><circle cx="1787.5" cy="242.57" r="1.1"/></g>
<g fill="#ae6f37" fill-opacity="0.9"><circle cx="50.05" cy="231.99" r="1.1"/><circle cx="62.2" cy="250.38" r="1.1"/><circle cx="74.35" cy="270.18" r="1.1"/><circle cx="86.5" cy="257.32" r="1.1"/><circle cx="98.65" cy="254.88" r="1.1"/><circle cx="110.8" cy="251.28" r="1.1"/><circle cx="122.95" cy="258.61" r="1.1"/><circle cx="135.1" cy="240.61" r="1.1"/><circle cx="147.25" cy="259.9" r="1.1"/><circle cx="159.4" cy="260.28" r="1.1"/><circle cx="171.55" cy="253.98" r="1.1"/><circle cx="183.7" cy="256.42" r="1.1"/><circle cx="195.85" cy="269.93" r="1.1"/><circle cx="208" cy="267.74" r="1.1"/><circle cx="220.15" cy="261.83" r="1.1"/><circle cx="232.3" cy="251.79" r="1.1"/><circle cx="244.45" cy="260.28" r="1.1"/><circle cx="256.6" cy="263.88" r="1.1"/><circle cx="268.75" cy="249.99" r="1.1"/><circle cx="280.9" cy="257.32" r="1.1"/><circle cx="293.05" cy="264.53" r="1.1"/><circle cx="305.2" cy="252.31" r="1.1"/><circle cx="317.35" cy="267.74" r="1.1"/><circle cx="329.5" cy="267.74" r="1.1"/><circle cx="341.65" cy="257.32" r="1.1"/><circle cx="353.8" cy="256.42" r="1.1"/><circle cx="365.95" cy="246.78" r="1.1"/><circle cx="378.1" cy="252.57" r="1.1"/><circle cx="390.25" cy="256.42" r="1.1"/><circle cx="402.4" cy="262.34" r="1.1"/><circle cx="414.55" cy="259.9" r="1.1"/><circle cx="426.7" cy="245.88" r="1.1"/><circle cx="438.85" cy="257.71" r="1.1"/><circle cx="451" cy="257.97" r="1.1"/><circle cx="463.15" cy="262.34" r="1.1"/><circle cx="475.3" cy="265.3" r="1.1"/><circle cx="487.45" cy="213.99" r="1.1"/><circle cx="499.6" cy="248.71" r="1.1"/><circle cx="511.75" cy="253.98" r="1.1"/><circle cx="523.9" cy="259.51" r="1.1"/><circle cx="536.05" cy="245.36" r="1.1"/><circle cx="548.2" cy="248.19" r="1.1"/><circle cx="560.35" cy="247.42" r="1.1"/><circle cx="572.5" cy="248.71" r="1.1"/><circle cx="584.65" cy="242.28" r="1.1"/><circle cx="596.8" cy="252.31" r="1.1"/><circle cx="608.95" cy="255.14" r="1.1"/><circle cx="621.1" cy="249.99" r="1.1"/><circle cx="633.25" cy="253.21" r="1.1"/><circle cx="645.4" cy="253.34" r="1.1"/><circle cx="657.55" cy="244.72" r="1.1"/><circle cx="669.7" cy="242.02" r="1.1"/><circle cx="681.85" cy="256.17" r="1.1"/><circle cx="694" cy="252.95" r="1.1"/><circle cx="706.15" cy="257.32" r="1.1"/><circle cx="718.3" cy="254.24" r="1.1"/><circle cx="730.45" cy="249.48" r="1.1"/><circle cx="742.6" cy="249.48" r="1.1"/><circle cx="754.75" cy="258.35" r="1.1"/><circle cx="766.9" cy="256.17" r="1.1"/><circle cx="779.05" cy="258.74" r="1.1"/><circle cx="791.2" cy="245.75" r="1.1"/><circle cx="803.35" cy="245.24" r="1.1"/><circle cx="815.5" cy="251.02" r="1.1"/><circle cx="827.65" cy="243.05" r="1.1"/><circle cx="839.8" cy="259.64" r="1.1"/><circle cx="851.95" cy="248.71" r="1.1"/><circle cx="864.1" cy="237.65" r="1.1"/><circle cx="876.25" cy="251.02" r="1.1"/><circle cx="888.4" cy="259.64" r="1.1"/><circle cx="900.55" cy="250.25" r="1.1"/><circle cx="912.7" cy="248.71" r="1.1"/><circle cx="924.85" cy="262.85" r="1.1"/><circle cx="937" cy="249.48" r="1.1"/><circle cx="949.15" cy="251.02" r="1.1"/><circle cx="961.3" cy="245.24" r="1.1"/><circle cx="973.45" cy="249.99" r="1.1"/><circle cx="985.6" cy="234.43" r="1.1"/><circle cx="997.75" cy="252.05" r="1.1"/><circle cx="1009.9" cy="253.72" r="1.1"/><circle cx="1022.05" cy="243.95" r="1.1"/><circle cx="1034.2" cy="251.54" r="1.1"/><circle cx="1046.35" cy="245.49" r="1.1"/><circle cx="1058.5" cy="267.61" r="1.1"/><circle cx="1070.65" cy="246.26" r="1.1"/><circle cx="1082.8" cy="260.54" r="1.1"/><circle cx="1094.95" cy="256.17" r="1.1"/><circle cx="1107.1" cy="251.02" r="1.1"/><circle cx="1119.25" cy="256.17" r="1.1"/><circle cx="1131.4" cy="259.64" r="1.1"/><circle cx="1143.55" cy="254.24" r="1.1"/><circle cx="1155.7" cy="243.95" r="1.1"/><circle cx="1167.85" cy="253.72" r="1.1"/><circle cx="1180" cy="249.99" r="1.1"/><circle cx="1192.15" cy="250.51" r="1.1"/><circle cx="1204.3" cy="258.87" r="1.1"/><circle cx="1216.45" cy="257.32" r="1.1"/><circle cx="1228.6" cy="246.65" r="1.1"/><circle cx="1240.75" cy="259.25" r="1.1"/><circle cx="1252.9" cy="255.01" r="1.1"/><circle cx="1265.05" cy="249.99" r="1.1"/><circle cx="1277.2" cy="238.93" r="1.1"/><circle cx="1289.35" cy="249.48" r="1.1"/><circle cx="1301.5" cy="252.05" r="1.1"/><circle cx="1313.65" cy="255.01" r="1.1"/><circle cx="1325.8" cy="248.71" r="1.1"/><circle cx="1337.95" cy="234.05" r="1.1"/><circle cx="1350.1" cy="253.72" r="1.1"/><circle cx="1362.25" cy="252.82" r="1.1"/><circle cx="1374.4" cy="251.02" r="1.1"/><circle cx="1386.55" cy="250.25" r="1.1"/><circle cx="1398.7" cy="251.54" r="1.1"/><circle cx="1410.85" cy="256.81" r="1.1"/><circle cx="1423" cy="245.49" r="1.1"/><circle cx="1435.15" cy="248.71" r="1.1"/><circle cx="1447.3" cy="251.02" r="1.1"/><circle cx="1459.45" cy="249.48" r="1.1"/><circle cx="1471.6" cy="237.65" r="1.1"/><circle cx="1483.75" cy="247.42" r="1.1"/><circle cx="1495.9" cy="261.31" r="1.1"/><circle cx="1508.05" cy="246.26" r="1.1"/><circle cx="1520.2" cy="253.21" r="1.1"/><circle cx="1532.35" cy="256.81" r="1.1"/><circle cx="1544.5" cy="241.51" r="1.1"/><circle cx="1556.65" cy="252.57" r="1.1"/><circle cx="1568.8" cy="256.55" r="1.1"/><circle cx="1580.95" cy="254.24" r="1.1"/><circle cx="1593.1" cy="245.11" r="1.1"/><circle cx="1605.25" cy="244.34" r="1.1"/><circle cx="1617.4" cy="251.02" r="1.1"/><circle cx="1629.55" cy="243.44" r="1.1"/><circle cx="1641.7" cy="263.11" r="1.1"/><circle cx="1653.85" cy="258.87" r="1.1"/><circle cx="1666" cy="247.68" r="1.1"/><circle cx="1678.15" cy="257.84" r="1.1"/><circle cx="1690.3" cy="253.59" r="1.1"/><circle cx="1702.45" cy="260.93" r="1.1"/><circle cx="1714.6" cy="249.74" r="1.1"/><circle cx="1726.75" cy="254.24" r="1.1"/><circle cx="1738.9" cy="257.84" r="1.1"/><circle cx="1751.05" cy="244.34" r="1.1"/><circle cx="1763.2" cy="257.71" r="1.1"/><circle cx="1775.35" cy="254.75" r="1.1"/><circle cx="1787.5" cy="250.25" r="1.1"/></g>
<circle cx="1812.9" cy="52.9" r="3.1" fill="#54B399"/>
<text transform="translate(1821.8 55.8) scale(1 1.16)" font-size="8.8" font-weight="bold" fill="#d5dae1" text-anchor="start">VDI0041</text>
<text transform="translate(1885 55.8) scale(1 1.16)" font-size="9.0" font-weight="bold" fill="#d5dae1" text-anchor="end">3.061</text>
<circle cx="1812.9" cy="69.39" r="3.1" fill="#6092C0"/>
<text transform="translate(1821.8 72.29) scale(1 1.16)" font-size="8.8" font-weight="bold" fill="#d5dae1" text-anchor="start">VDI0193</text>
<text transform="translate(1885 72.29) scale(1 1.16)" font-size="9.0" font-weight="bold" fill="#d5dae1" text-anchor="end">1.25</text>
<circle cx="1812.9" cy="85.88" r="3.1" fill="#D36086"/>
<text transform="translate(1821.8 88.78) scale(1 1.16)" font-size="8.8" font-weight="bold" fill="#d5dae1" text-anchor="start">VDI0103</text>
<circle cx="1812.9" cy="102.37" r="3.1" fill="#B9A888"/>
<text transform="translate(1821.8 105.27) scale(1 1.16)" font-size="8.8" font-weight="bold" fill="#d5dae1" text-anchor="start">VDI0191</text>
<text transform="translate(1885 105.27) scale(1 1.16)" font-size="9.0" font-weight="bold" fill="#d5dae1" text-anchor="end">0.204</text>
<circle cx="1812.9" cy="118.86" r="3.1" fill="#9170B8"/>
<text transform="translate(1821.8 121.76) scale(1 1.16)" font-size="8.8" font-weight="bold" fill="#d5dae1" text-anchor="start">VDI0130</text>
<text transform="translate(1885 121.76) scale(1 1.16)" font-size="9.0" font-weight="bold" fill="#d5dae1" text-anchor="end">2.082</text>
<circle cx="1812.9" cy="135.35" r="3.1" fill="#CA8EAE"/>
<text transform="translate(1821.8 138.25) scale(1 1.16)" font-size="8.8" font-weight="bold" fill="#d5dae1" text-anchor="start">VDI0112</text>
<text transform="translate(1885 138.25) scale(1 1.16)" font-size="9.0" font-weight="bold" fill="#d5dae1" text-anchor="end">1.876</text>
<circle cx="1812.9" cy="151.84" r="3.1" fill="#D6BF57"/>
<text transform="translate(1821.8 154.74) scale(1 1.16)" font-size="8.8" font-weight="bold" fill="#d5dae1" text-anchor="start">VDI0053</text>
<text transform="translate(1885 154.74) scale(1 1.16)" font-size="9.0" font-weight="bold" fill="#d5dae1" text-anchor="end">4.093</text>
<circle cx="1812.9" cy="168.33" r="3.1" fill="#AA6556"/>
<text transform="translate(1821.8 171.23) scale(1 1.16)" font-size="8.8" font-weight="bold" fill="#d5dae1" text-anchor="start">VDI0111</text>
<text transform="translate(1885 171.23) scale(1 1.16)" font-size="9.0" font-weight="bold" fill="#d5dae1" text-anchor="end">2.742</text>
<circle cx="1812.9" cy="184.82" r="3.1" fill="#E7664C"/>
<text transform="translate(1821.8 187.72) scale(1 1.16)" font-size="8.8" font-weight="bold" fill="#d5dae1" text-anchor="start">vdi0027</text>
<circle cx="1812.9" cy="201.31" r="3.1" fill="#DA8B45"/>
<text transform="translate(1821.8 204.21) scale(1 1.16)" font-size="8.8" font-weight="bold" fill="#d5dae1" text-anchor="start">VDI0028</text>
<text transform="translate(1885 204.21) scale(1 1.16)" font-size="9.0" font-weight="bold" fill="#d5dae1" text-anchor="end">2.096</text>
<line x1="50" y1="592.5" x2="852.04" y2="592.5" stroke="rgba(255,255,255,0.04)" stroke-width="1"/>
<line x1="43" y1="592.5" x2="50" y2="592.5" stroke="#343b43" stroke-width="1"/>
<text transform="translate(35.4 594.1) scale(1 1.13)" font-size="7.5" fill="#a3a9b0" text-anchor="end">0</text>
<line x1="50" y1="571.5" x2="852.04" y2="571.5" stroke="rgba(255,255,255,0.04)" stroke-width="1"/>
<line x1="43" y1="571.5" x2="50" y2="571.5" stroke="#343b43" stroke-width="1"/>
<text transform="translate(35.4 573.7) scale(1 1.13)" font-size="7.5" fill="#a3a9b0" text-anchor="end">5</text>
<line x1="50" y1="551.5" x2="852.04" y2="551.5" stroke="rgba(255,255,255,0.04)" stroke-width="1"/>
<line x1="43" y1="551.5" x2="50" y2="551.5" stroke="#343b43" stroke-width="1"/>
<text transform="translate(35.4 553.3) scale(1 1.13)" font-size="7.5" fill="#a3a9b0" text-anchor="end">10</text>
<line x1="50" y1="530.5" x2="852.04" y2="530.5" stroke="rgba(255,255,255,0.04)" stroke-width="1"/>
<line x1="43" y1="530.5" x2="50" y2="530.5" stroke="#343b43" stroke-width="1"/>
<text transform="translate(35.4 532.9) scale(1 1.13)" font-size="7.5" fill="#a3a9b0" text-anchor="end">15</text>
<line x1="50" y1="510.5" x2="852.04" y2="510.5" stroke="rgba(255,255,255,0.04)" stroke-width="1"/>
<line x1="43" y1="510.5" x2="50" y2="510.5" stroke="#343b43" stroke-width="1"/>
<text transform="translate(35.4 512.5) scale(1 1.13)" font-size="7.5" fill="#a3a9b0" text-anchor="end">20</text>
<line x1="50" y1="490.5" x2="852.04" y2="490.5" stroke="rgba(255,255,255,0.04)" stroke-width="1"/>
<line x1="43" y1="490.5" x2="50" y2="490.5" stroke="#343b43" stroke-width="1"/>
<text transform="translate(35.4 492.1) scale(1 1.13)" font-size="7.5" fill="#a3a9b0" text-anchor="end">25</text>
<line x1="50" y1="469.5" x2="852.04" y2="469.5" stroke="rgba(255,255,255,0.04)" stroke-width="1"/>
<line x1="43" y1="469.5" x2="50" y2="469.5" stroke="#343b43" stroke-width="1"/>
<text transform="translate(35.4 471.7) scale(1 1.13)" font-size="7.5" fill="#a3a9b0" text-anchor="end">30</text>
<line x1="50" y1="449.5" x2="852.04" y2="449.5" stroke="rgba(255,255,255,0.04)" stroke-width="1"/>
<line x1="43" y1="449.5" x2="50" y2="449.5" stroke="#343b43" stroke-width="1"/>
<text transform="translate(35.4 451.3) scale(1 1.13)" font-size="7.5" fill="#a3a9b0" text-anchor="end">35</text>
<line x1="50" y1="428.5" x2="852.04" y2="428.5" stroke="rgba(255,255,255,0.04)" stroke-width="1"/>
<line x1="43" y1="428.5" x2="50" y2="428.5" stroke="#343b43" stroke-width="1"/>
<text transform="translate(35.4 430.9) scale(1 1.13)" font-size="7.5" fill="#a3a9b0" text-anchor="end">40</text>
<line x1="50" y1="408.5" x2="852.04" y2="408.5" stroke="rgba(255,255,255,0.04)" stroke-width="1"/>
<line x1="43" y1="408.5" x2="50" y2="408.5" stroke="#343b43" stroke-width="1"/>
<text transform="translate(35.4 410.5) scale(1 1.13)" font-size="7.5" fill="#a3a9b0" text-anchor="end">45</text>
<line x1="50" y1="388.5" x2="852.04" y2="388.5" stroke="rgba(255,255,255,0.04)" stroke-width="1"/>
<line x1="43" y1="388.5" x2="50" y2="388.5" stroke="#343b43" stroke-width="1"/>
<text transform="translate(35.4 390.1) scale(1 1.13)" font-size="7.5" fill="#a3a9b0" text-anchor="end">50</text>
<line x1="67.5" y1="383" x2="67.5" y2="591" stroke="rgba(255,255,255,0.04)" stroke-width="1"/>
<line x1="67.5" y1="591" x2="67.5" y2="599" stroke="#343b43" stroke-width="1"/>
<text transform="translate(66.92 613) scale(1 1.13)" font-size="7.5" fill="#a3a9b0" text-anchor="middle">12:00</text>
<line x1="168.5" y1="383" x2="168.5" y2="591" stroke="rgba(255,255,255,0.04)" stroke-width="1"/>
<line x1="168.5" y1="591" x2="168.5" y2="599" stroke="#343b43" stroke-width="1"/>
<text transform="translate(167.87 613) scale(1 1.13)" font-size="7.5" fill="#a3a9b0" text-anchor="middle">15:00</text>
<line x1="269.5" y1="383" x2="269.5" y2="591" stroke="rgba(255,255,255,0.04)" stroke-width="1"/>
<line x1="269.5" y1="591" x2="269.5" y2="599" stroke="#343b43" stroke-width="1"/>
<text transform="translate(268.81 613) scale(1 1.13)" font-size="7.5" fill="#a3a9b0" text-anchor="middle">18:00</text>
<line x1="370.5" y1="383" x2="370.5" y2="591" stroke="rgba(255,255,255,0.04)" stroke-width="1"/>
<line x1="370.5" y1="591" x2="370.5" y2="599" stroke="#343b43" stroke-width="1"/>
<text transform="translate(369.76 613) scale(1 1.13)" font-size="7.5" fill="#a3a9b0" text-anchor="middle">21:00</text>
<line x1="470.5" y1="383" x2="470.5" y2="591" stroke="rgba(255,255,255,0.04)" stroke-width="1"/>
<line x1="470.5" y1="591" x2="470.5" y2="599" stroke="#343b43" stroke-width="1"/>
<text transform="translate(470.7 613) scale(1 1.13)" font-size="7.5" fill="#a3a9b0" text-anchor="middle">00:00</text>
<line x1="571.5" y1="383" x2="571.5" y2="591" stroke="rgba(255,255,255,0.04)" stroke-width="1"/>
<line x1="571.5" y1="591" x2="571.5" y2="599" stroke="#343b43" stroke-width="1"/>
<text transform="translate(571.64 613) scale(1 1.13)" font-size="7.5" fill="#a3a9b0" text-anchor="middle">03:00</text>
<line x1="672.5" y1="383" x2="672.5" y2="591" stroke="rgba(255,255,255,0.04)" stroke-width="1"/>
<line x1="672.5" y1="591" x2="672.5" y2="599" stroke="#343b43" stroke-width="1"/>
<text transform="translate(672.59 613) scale(1 1.13)" font-size="7.5" fill="#a3a9b0" text-anchor="middle">06:00</text>
<line x1="773.5" y1="383" x2="773.5" y2="591" stroke="rgba(255,255,255,0.04)" stroke-width="1"/>
<line x1="773.5" y1="591" x2="773.5" y2="599" stroke="#343b43" stroke-width="1"/>
<text transform="translate(773.53 613) scale(1 1.13)" font-size="7.5" fill="#a3a9b0" text-anchor="middle">09:00</text>
<line x1="50.5" y1="383" x2="50.5" y2="591" stroke="#343b43" stroke-width="1"/>
<text transform="translate(451 627) scale(1 1.05)" font-size="9" font-weight="bold" fill="#c8cdd3" text-anchor="middle">per 10 minutes</text>
<polygon points="50.1,591.8 50.1,591.8 55.71,589.35 61.32,584.05 66.92,590.98 72.53,555.9 78.14,591.61 83.75,591.8 89.36,591.8 94.96,591.42 100.57,584.05 106.18,564.87 111.79,591.8 117.4,591.8 123,590.61 128.61,591.14 134.22,591.8 139.83,589.84 145.44,569.36 151.04,591.31 156.65,588.54 162.26,591.8 167.87,591.8 173.48,579.97 179.08,591.8 184.69,519.99 190.3,591.8 195.91,562.02 201.52,591.8 207.12,591.8 212.73,590.47 218.34,541.62 223.95,591.37 229.56,591.8 235.16,585.68 240.77,584.86 246.38,591.8 251.99,589.77 257.6,504.9 263.2,590.48 268.81,591.07 274.42,576.09 280.03,591.8 285.64,591.8 291.24,591.8 296.85,590.81 302.46,515.91 308.07,590.45 313.68,587.72 319.28,589.95 324.89,590.45 330.5,568.95 336.11,591.8 341.72,590.16 347.32,582.82 352.93,589.85 358.54,584.86 364.15,591.8 369.76,591.42 375.36,590.75 380.97,591.8 386.58,591.8 392.19,591.8 397.8,589.92 403.4,590.85 409.01,591.8 414.62,591.8 420.23,591.8 425.84,591.8 431.44,590.67 437.05,591.8 442.66,578.34 448.27,591.8 453.88,591.8 459.48,590.96 465.09,584.46 470.7,591.36 476.31,591.8 481.92,589.35 487.52,591.8 493.13,591.8 498.74,589.89 504.35,590.64 509.96,591.8 515.56,585.68 521.17,591.8 526.78,591.8 532.39,590.41 538,591.37 543.6,591.8 549.21,589.81 554.82,591.8 560.43,591.8 566.04,590.78 571.64,591.8 577.25,591.8 582.86,591.8 588.47,591.8 594.08,591.63 599.68,566.5 605.29,591.55 610.9,591.8 616.51,591.8 622.12,589.94 627.72,591.8 633.33,591.67 638.94,590.36 644.55,591.8 650.16,591.8 655.76,590.17 661.37,590.58 666.98,591.8 672.59,586.29 678.2,590.93 683.8,590.03 689.41,591.8 695.02,585.68 700.63,590.29 706.24,508.16 711.84,591.8 717.45,591.8 723.06,591.8 728.67,589.93 734.28,591.8 739.88,591.09 745.49,591.8 751.1,590.55 756.71,576.7 762.32,591.8 767.92,591.8 773.53,384.54 779.14,591.8 784.75,591.8 790.36,591.74 795.96,590.42 801.57,591.49 807.18,591.8 812.79,590.13 818.4,591.8 824,591.8 829.61,591.8 835.22,591.8 840.83,591.8 846.44,591.8 852.04,591.8 852.04,591.8" fill="#B55C98" fill-opacity="0.5"/><polyline points="50.1,591.8 55.71,589.35 61.32,584.05 66.92,590.98 72.53,555.9 78.14,591.61 83.75,591.8 89.36,591.8 94.96,591.42 100.57,584.05 106.18,564.87 111.79,591.8 117.4,591.8 123,590.61 128.61,591.14 134.22,591.8 139.83,589.84 145.44,569.36 151.04,591.31 156.65,588.54 162.26,591.8 167.87,591.8 173.48,579.97 179.08,591.8 184.69,519.99 190.3,591.8 195.91,562.02 201.52,591.8 207.12,591.8 212.73,590.47 218.34,541.62 223.95,591.37 229.56,591.8 235.16,585.68 240.77,584.86 246.38,591.8 251.99,589.77 257.6,504.9 263.2,590.48 268.81,591.07 274.42,576.09 280.03,591.8 285.64,591.8 291.24,591.8 296.85,590.81 302.46,515.91 308.07,590.45 313.68,587.72 319.28,589.95 324.89,590.45 330.5,568.95 336.11,591.8 341.72,590.16 347.32,582.82 352.93,589.85 358.54,584.86 364.15,591.8 369.76,591.42 375.36,590.75 380.97,591.8 386.58,591.8 392.19,591.8 397.8,589.92 403.4,590.85 409.01,591.8 414.62,591.8 420.23,591.8 425.84,591.8 431.44,590.67 437.05,591.8 442.66,578.34 448.27,591.8 453.88,591.8 459.48,590.96 465.09,584.46 470.7,591.36 476.31,591.8 481.92,589.35 487.52,591.8 493.13,591.8 498.74,589.89 504.35,590.64 509.96,591.8 515.56,585.68 521.17,591.8 526.78,591.8 532.39,590.41 538,591.37 543.6,591.8 549.21,589.81 554.82,591.8 560.43,591.8 566.04,590.78 571.64,591.8 577.25,591.8 582.86,591.8 588.47,591.8 594.08,591.63 599.68,566.5 605.29,591.55 610.9,591.8 616.51,591.8 622.12,589.94 627.72,591.8 633.33,591.67 638.94,590.36 644.55,591.8 650.16,591.8 655.76,590.17 661.37,590.58 666.98,591.8 672.59,586.29 678.2,590.93 683.8,590.03 689.41,591.8 695.02,585.68 700.63,590.29 706.24,508.16 711.84,591.8 717.45,591.8 723.06,591.8 728.67,589.93 734.28,591.8 739.88,591.09 745.49,591.8 751.1,590.55 756.71,576.7 762.32,591.8 767.92,591.8 773.53,384.54 779.14,591.8 784.75,591.8 790.36,591.74 795.96,590.42 801.57,591.49 807.18,591.8 812.79,590.13 818.4,591.8 824,591.8 829.61,591.8 835.22,591.8 840.83,591.8 846.44,591.8 852.04,591.8" fill="none" stroke="#B55C98" stroke-opacity="0.8" stroke-width="1" stroke-linejoin="round"/>
<polygon points="50.1,591.8 50.1,591.45 55.71,514.69 61.32,591.8 66.92,591.8 72.53,589.45 78.14,555.9 83.75,590.86 89.36,544.88 94.96,579.56 100.57,591.8 106.18,556.71 111.79,589.79 117.4,590.82 123,553.86 128.61,591.8 134.22,563.24 139.83,565.28 145.44,590.67 151.04,591.8 156.65,589.36 162.26,591.8 167.87,533.05 173.48,590.64 179.08,589.84 184.69,582.01 190.3,590.8 195.91,543.25 201.52,589.77 207.12,591.8 212.73,588.54 218.34,563.04 223.95,589.98 229.56,500.41 235.16,590.38 240.77,590.02 246.38,514.08 251.99,591.19 257.6,553.86 263.2,591.4 268.81,583.64 274.42,591.8 280.03,591.12 285.64,589.38 291.24,573.85 296.85,590.68 302.46,517.95 308.07,590.65 313.68,577.52 319.28,591.8 324.89,590.14 330.5,540.39 336.11,590.57 341.72,570.18 347.32,591.3 352.93,591.8 358.54,582.82 364.15,590.83 369.76,591.8 375.36,585.68 380.97,589.74 386.58,553.86 392.19,591.8 397.8,559.57 403.4,590.93 409.01,591.8 414.62,529.78 420.23,589.81 425.84,591.02 431.44,585.68 437.05,589.88 442.66,550.18 448.27,590.99 453.88,554.88 459.48,591.8 465.09,590.3 470.7,576.7 476.31,589.94 481.92,591.8 487.52,591.39 493.13,510.2 498.74,591.8 504.35,546.51 509.96,590.15 515.56,590.09 521.17,560.79 526.78,580.38 532.39,560.79 538,591.8 543.6,591.8 549.21,541.21 554.82,591.8 560.43,591.8 566.04,529.38 571.64,591.8 577.25,591.8 582.86,570.18 588.47,589.44 594.08,552.22 599.68,550.18 605.29,591.8 610.9,589.97 616.51,591.8 622.12,590.78 627.72,512.24 633.33,591.8 638.94,553.86 644.55,591.8 650.16,591.8 655.76,575.28 661.37,573.03 666.98,590.19 672.59,591.8 678.2,591.8 683.8,573.85 689.41,591.17 695.02,591.8 700.63,591.16 706.24,586.29 711.84,590.3 717.45,566.5 723.06,570.18 728.67,591.8 734.28,580.38 739.88,591.8 745.49,582.42 751.1,591.8 756.71,546.92 762.32,591.8 767.92,591.8 773.53,591.8 779.14,590.83 784.75,511.02 790.36,591.24 795.96,569.36 801.57,575.48 807.18,583.64 812.79,589.81 818.4,591.8 824,589.68 829.61,573.03 835.22,591.8 840.83,591.8 846.44,582.42 852.04,589.79 852.04,591.8" fill="#6AC012" fill-opacity="0.48"/><polyline points="50.1,591.45 55.71,514.69 61.32,591.8 66.92,591.8 72.53,589.45 78.14,555.9 83.75,590.86 89.36,544.88 94.96,579.56 100.57,591.8 106.18,556.71 111.79,589.79 117.4,590.82 123,553.86 128.61,591.8 134.22,563.24 139.83,565.28 145.44,590.67 151.04,591.8 156.65,589.36 162.26,591.8 167.87,533.05 173.48,590.64 179.08,589.84 184.69,582.01 190.3,590.8 195.91,543.25 201.52,589.77 207.12,591.8 212.73,588.54 218.34,563.04 223.95,589.98 229.56,500.41 235.16,590.38 240.77,590.02 246.38,514.08 251.99,591.19 257.6,553.86 263.2,591.4 268.81,583.64 274.42,591.8 280.03,591.12 285.64,589.38 291.24,573.85 296.85,590.68 302.46,517.95 308.07,590.65 313.68,577.52 319.28,591.8 324.89,590.14 330.5,540.39 336.11,590.57 341.72,570.18 347.32,591.3 352.93,591.8 358.54,582.82 364.15,590.83 369.76,591.8 375.36,585.68 380.97,589.74 386.58,553.86 392.19,591.8 397.8,559.57 403.4,590.93 409.01,591.8 414.62,529.78 420.23,589.81 425.84,591.02 431.44,585.68 437.05,589.88 442.66,550.18 448.27,590.99 453.88,554.88 459.48,591.8 465.09,590.3 470.7,576.7 476.31,589.94 481.92,591.8 487.52,591.39 493.13,510.2 498.74,591.8 504.35,546.51 509.96,590.15 515.56,590.09 521.17,560.79 526.78,580.38 532.39,560.79 538,591.8 543.6,591.8 549.21,541.21 554.82,591.8 560.43,591.8 566.04,529.38 571.64,591.8 577.25,591.8 582.86,570.18 588.47,589.44 594.08,552.22 599.68,550.18 605.29,591.8 610.9,589.97 616.51,591.8 622.12,590.78 627.72,512.24 633.33,591.8 638.94,553.86 644.55,591.8 650.16,591.8 655.76,575.28 661.37,573.03 666.98,590.19 672.59,591.8 678.2,591.8 683.8,573.85 689.41,591.17 695.02,591.8 700.63,591.16 706.24,586.29 711.84,590.3 717.45,566.5 723.06,570.18 728.67,591.8 734.28,580.38 739.88,591.8 745.49,582.42 751.1,591.8 756.71,546.92 762.32,591.8 767.92,591.8 773.53,591.8 779.14,590.83 784.75,511.02 790.36,591.24 795.96,569.36 801.57,575.48 807.18,583.64 812.79,589.81 818.4,591.8 824,589.68 829.61,573.03 835.22,591.8 840.83,591.8 846.44,582.42 852.04,589.79" fill="none" stroke="#6AC012" stroke-opacity="0.8" stroke-width="1.0" stroke-linejoin="round"/>
<g fill="#904979" fill-opacity="0.9"><circle cx="50.1" cy="591.8" r="0.9"/><circle cx="55.71" cy="589.35" r="0.9"/><circle cx="61.32" cy="584.05" r="0.9"/><circle cx="66.92" cy="590.98" r="0.9"/><circle cx="72.53" cy="555.9" r="0.9"/><circle cx="78.14" cy="591.61" r="0.9"/><circle cx="83.75" cy="591.8" r="0.9"/><circle cx="89.36" cy="591.8" r="0.9"/><circle cx="94.96" cy="591.42" r="0.9"/><circle cx="100.57" cy="584.05" r="0.9"/><circle cx="106.18" cy="564.87" r="0.9"/><circle cx="111.79" cy="591.8" r="0.9"/><circle cx="117.4" cy="591.8" r="0.9"/><circle cx="123" cy="590.61" r="0.9"/><circle cx="128.61" cy="591.14" r="0.9"/><circle cx="134.22" cy="591.8" r="0.9"/><circle cx="139.83" cy="589.84" r="0.9"/><circle cx="145.44" cy="569.36" r="0.9"/><circle cx="151.04" cy="591.31" r="0.9"/><circle cx="156.65" cy="588.54" r="0.9"/><circle cx="162.26" cy="591.8" r="0.9"/><circle cx="167.87" cy="591.8" r="0.9"/><circle cx="173.48" cy="579.97" r="0.9"/><circle cx="179.08" cy="591.8" r="0.9"/><circle cx="184.69" cy="519.99" r="0.9"/><circle cx="190.3" cy="591.8" r="0.9"/><circle cx="195.91" cy="562.02" r="0.9"/><circle cx="201.52" cy="591.8" r="0.9"/><circle cx="207.12" cy="591.8" r="0.9"/><circle cx="212.73" cy="590.47" r="0.9"/><circle cx="218.34" cy="541.62" r="0.9"/><circle cx="223.95" cy="591.37" r="0.9"/><circle cx="229.56" cy="591.8" r="0.9"/><circle cx="235.16" cy="585.68" r="0.9"/><circle cx="240.77" cy="584.86" r="0.9"/><circle cx="246.38" cy="591.8" r="0.9"/><circle cx="251.99" cy="589.77" r="0.9"/><circle cx="257.6" cy="504.9" r="0.9"/><circle cx="263.2" cy="590.48" r="0.9"/><circle cx="268.81" cy="591.07" r="0.9"/><circle cx="274.42" cy="576.09" r="0.9"/><circle cx="280.03" cy="591.8" r="0.9"/><circle cx="285.64" cy="591.8" r="0.9"/><circle cx="291.24" cy="591.8" r="0.9"/><circle cx="296.85" cy="590.81" r="0.9"/><circle cx="302.46" cy="515.91" r="0.9"/><circle cx="308.07" cy="590.45" r="0.9"/><circle cx="313.68" cy="587.72" r="0.9"/><circle cx="319.28" cy="589.95" r="0.9"/><circle cx="324.89" cy="590.45" r="0.9"/><circle cx="330.5" cy="568.95" r="0.9"/><circle cx="336.11" cy="591.8" r="0.9"/><circle cx="341.72" cy="590.16" r="0.9"/><circle cx="347.32" cy="582.82" r="0.9"/><circle cx="352.93" cy="589.85" r="0.9"/><circle cx="358.54" cy="584.86" r="0.9"/><circle cx="364.15" cy="591.8" r="0.9"/><circle cx="369.76" cy="591.42" r="0.9"/><circle cx="375.36" cy="590.75" r="0.9"/><circle cx="380.97" cy="591.8" r="0.9"/><circle cx="386.58" cy="591.8" r="0.9"/><circle cx="392.19" cy="591.8" r="0.9"/><circle cx="397.8" cy="589.92" r="0.9"/><circle cx="403.4" cy="590.85" r="0.9"/><circle cx="409.01" cy="591.8" r="0.9"/><circle cx="414.62" cy="591.8" r="0.9"/><circle cx="420.23" cy="591.8" r="0.9"/><circle cx="425.84" cy="591.8" r="0.9"/><circle cx="431.44" cy="590.67" r="0.9"/><circle cx="437.05" cy="591.8" r="0.9"/><circle cx="442.66" cy="578.34" r="0.9"/><circle cx="448.27" cy="591.8" r="0.9"/><circle cx="453.88" cy="591.8" r="0.9"/><circle cx="459.48" cy="590.96" r="0.9"/><circle cx="465.09" cy="584.46" r="0.9"/><circle cx="470.7" cy="591.36" r="0.9"/><circle cx="476.31" cy="591.8" r="0.9"/><circle cx="481.92" cy="589.35" r="0.9"/><circle cx="487.52" cy="591.8" r="0.9"/><circle cx="493.13" cy="591.8" r="0.9"/><circle cx="498.74" cy="589.89" r="0.9"/><circle cx="504.35" cy="590.64" r="0.9"/><circle cx="509.96" cy="591.8" r="0.9"/><circle cx="515.56" cy="585.68" r="0.9"/><circle cx="521.17" cy="591.8" r="0.9"/><circle cx="526.78" cy="591.8" r="0.9"/><circle cx="532.39" cy="590.41" r="0.9"/><circle cx="538" cy="591.37" r="0.9"/><circle cx="543.6" cy="591.8" r="0.9"/><circle cx="549.21" cy="589.81" r="0.9"/><circle cx="554.82" cy="591.8" r="0.9"/><circle cx="560.43" cy="591.8" r="0.9"/><circle cx="566.04" cy="590.78" r="0.9"/><circle cx="571.64" cy="591.8" r="0.9"/><circle cx="577.25" cy="591.8" r="0.9"/><circle cx="582.86" cy="591.8" r="0.9"/><circle cx="588.47" cy="591.8" r="0.9"/><circle cx="594.08" cy="591.63" r="0.9"/><circle cx="599.68" cy="566.5" r="0.9"/><circle cx="605.29" cy="591.55" r="0.9"/><circle cx="610.9" cy="591.8" r="0.9"/><circle cx="616.51" cy="591.8" r="0.9"/><circle cx="622.12" cy="589.94" r="0.9"/><circle cx="627.72" cy="591.8" r="0.9"/><circle cx="633.33" cy="591.67" r="0.9"/><circle cx="638.94" cy="590.36" r="0.9"/><circle cx="644.55" cy="591.8" r="0.9"/><circle cx="650.16" cy="591.8" r="0.9"/><circle cx="655.76" cy="590.17" r="0.9"/><circle cx="661.37" cy="590.58" r="0.9"/><circle cx="666.98" cy="591.8" r="0.9"/><circle cx="672.59" cy="586.29" r="0.9"/><circle cx="678.2" cy="590.93" r="0.9"/><circle cx="683.8" cy="590.03" r="0.9"/><circle cx="689.41" cy="591.8" r="0.9"/><circle cx="695.02" cy="585.68" r="0.9"/><circle cx="700.63" cy="590.29" r="0.9"/><circle cx="706.24" cy="508.16" r="0.9"/><circle cx="711.84" cy="591.8" r="0.9"/><circle cx="717.45" cy="591.8" r="0.9"/><circle cx="723.06" cy="591.8" r="0.9"/><circle cx="728.67" cy="589.93" r="0.9"/><circle cx="734.28" cy="591.8" r="0.9"/><circle cx="739.88" cy="591.09" r="0.9"/><circle cx="745.49" cy="591.8" r="0.9"/><circle cx="751.1" cy="590.55" r="0.9"/><circle cx="756.71" cy="576.7" r="0.9"/><circle cx="762.32" cy="591.8" r="0.9"/><circle cx="767.92" cy="591.8" r="0.9"/><circle cx="773.53" cy="384.54" r="0.9"/><circle cx="779.14" cy="591.8" r="0.9"/><circle cx="784.75" cy="591.8" r="0.9"/><circle cx="790.36" cy="591.74" r="0.9"/><circle cx="795.96" cy="590.42" r="0.9"/><circle cx="801.57" cy="591.49" r="0.9"/><circle cx="807.18" cy="591.8" r="0.9"/><circle cx="812.79" cy="590.13" r="0.9"/><circle cx="818.4" cy="591.8" r="0.9"/><circle cx="824" cy="591.8" r="0.9"/><circle cx="829.61" cy="591.8" r="0.9"/><circle cx="835.22" cy="591.8" r="0.9"/><circle cx="840.83" cy="591.8" r="0.9"/><circle cx="846.44" cy="591.8" r="0.9"/><circle cx="852.04" cy="591.8" r="0.9"/></g>
<g fill="#54990e" fill-opacity="0.9"><circle cx="50.1" cy="591.45" r="0.9"/><circle cx="55.71" cy="514.69" r="0.9"/><circle cx="61.32" cy="591.8" r="0.9"/><circle cx="66.92" cy="591.8" r="0.9"/><circle cx="72.53" cy="589.45" r="0.9"/><circle cx="78.14" cy="555.9" r="0.9"/><circle cx="83.75" cy="590.86" r="0.9"/><circle cx="89.36" cy="544.88" r="0.9"/><circle cx="94.96" cy="579.56" r="0.9"/><circle cx="100.57" cy="591.8" r="0.9"/><circle cx="106.18" cy="556.71" r="0.9"/><circle cx="111.79" cy="589.79" r="0.9"/><circle cx="117.4" cy="590.82" r="0.9"/><circle cx="123" cy="553.86" r="0.9"/><circle cx="128.61" cy="591.8" r="0.9"/><circle cx="134.22" cy="563.24" r="0.9"/><circle cx="139.83" cy="565.28" r="0.9"/><circle cx="145.44" cy="590.67" r="0.9"/><circle cx="151.04" cy="591.8" r="0.9"/><circle cx="156.65" cy="589.36" r="0.9"/><circle cx="162.26" cy="591.8" r="0.9"/><circle cx="167.87" cy="533.05" r="0.9"/><circle cx="173.48" cy="590.64" r="0.9"/><circle cx="179.08" cy="589.84" r="0.9"/><circle cx="184.69" cy="582.01" r="0.9"/><circle cx="190.3" cy="590.8" r="0.9"/><circle cx="195.91" cy="543.25" r="0.9"/><circle cx="201.52" cy="589.77" r="0.9"/><circle cx="207.12" cy="591.8" r="0.9"/><circle cx="212.73" cy="588.54" r="0.9"/><circle cx="218.34" cy="563.04" r="0.9"/><circle cx="223.95" cy="589.98" r="0.9"/><circle cx="229.56" cy="500.41" r="0.9"/><circle cx="235.16" cy="590.38" r="0.9"/><circle cx="240.77" cy="590.02" r="0.9"/><circle cx="246.38" cy="514.08" r="0.9"/><circle cx="251.99" cy="591.19" r="0.9"/><circle cx="257.6" cy="553.86" r="0.9"/><circle cx="263.2" cy="591.4" r="0.9"/><circle cx="268.81" cy="583.64" r="0.9"/><circle cx="274.42" cy="591.8" r="0.9"/><circle cx="280.03" cy="591.12" r="0.9"/><circle cx="285.64" cy="589.38" r="0.9"/><circle cx="291.24" cy="573.85" r="0.9"/><circle cx="296.85" cy="590.68" r="0.9"/><circle cx="302.46" cy="517.95" r="0.9"/><circle cx="308.07" cy="590.65" r="0.9"/><circle cx="313.68" cy="577.52" r="0.9"/><circle cx="319.28" cy="591.8" r="0.9"/><circle cx="324.89" cy="590.14" r="0.9"/><circle cx="330.5" cy="540.39" r="0.9"/><circle cx="336.11" cy="590.57" r="0.9"/><circle cx="341.72" cy="570.18" r="0.9"/><circle cx="347.32" cy="591.3" r="0.9"/><circle cx="352.93" cy="591.8" r="0.9"/><circle cx="358.54" cy="582.82" r="0.9"/><circle cx="364.15" cy="590.83" r="0.9"/><circle cx="369.76" cy="591.8" r="0.9"/><circle cx="375.36" cy="585.68" r="0.9"/><circle cx="380.97" cy="589.74" r="0.9"/><circle cx="386.58" cy="553.86" r="0.9"/><circle cx="392.19" cy="591.8" r="0.9"/><circle cx="397.8" cy="559.57" r="0.9"/><circle cx="403.4" cy="590.93" r="0.9"/><circle cx="409.01" cy="591.8" r="0.9"/><circle cx="414.62" cy="529.78" r="0.9"/><circle cx="420.23" cy="589.81" r="0.9"/><circle cx="425.84" cy="591.02" r="0.9"/><circle cx="431.44" cy="585.68" r="0.9"/><circle cx="437.05" cy="589.88" r="0.9"/><circle cx="442.66" cy="550.18" r="0.9"/><circle cx="448.27" cy="590.99" r="0.9"/><circle cx="453.88" cy="554.88" r="0.9"/><circle cx="459.48" cy="591.8" r="0.9"/><circle cx="465.09" cy="590.3" r="0.9"/><circle cx="470.7" cy="576.7" r="0.9"/><circle cx="476.31" cy="589.94" r="0.9"/><circle cx="481.92" cy="591.8" r="0.9"/><circle cx="487.52" cy="591.39" r="0.9"/><circle cx="493.13" cy="510.2" r="0.9"/><circle cx="498.74" cy="591.8" r="0.9"/><circle cx="504.35" cy="546.51" r="0.9"/><circle cx="509.96" cy="590.15" r="0.9"/><circle cx="515.56" cy="590.09" r="0.9"/><circle cx="521.17" cy="560.79" r="0.9"/><circle cx="526.78" cy="580.38" r="0.9"/><circle cx="532.39" cy="560.79" r="0.9"/><circle cx="538" cy="591.8" r="0.9"/><circle cx="543.6" cy="591.8" r="0.9"/><circle cx="549.21" cy="541.21" r="0.9"/><circle cx="554.82" cy="591.8" r="0.9"/><circle cx="560.43" cy="591.8" r="0.9"/><circle cx="566.04" cy="529.38" r="0.9"/><circle cx="571.64" cy="591.8" r="0.9"/><circle cx="577.25" cy="591.8" r="0.9"/><circle cx="582.86" cy="570.18" r="0.9"/><circle cx="588.47" cy="589.44" r="0.9"/><circle cx="594.08" cy="552.22" r="0.9"/><circle cx="599.68" cy="550.18" r="0.9"/><circle cx="605.29" cy="591.8" r="0.9"/><circle cx="610.9" cy="589.97" r="0.9"/><circle cx="616.51" cy="591.8" r="0.9"/><circle cx="622.12" cy="590.78" r="0.9"/><circle cx="627.72" cy="512.24" r="0.9"/><circle cx="633.33" cy="591.8" r="0.9"/><circle cx="638.94" cy="553.86" r="0.9"/><circle cx="644.55" cy="591.8" r="0.9"/><circle cx="650.16" cy="591.8" r="0.9"/><circle cx="655.76" cy="575.28" r="0.9"/><circle cx="661.37" cy="573.03" r="0.9"/><circle cx="666.98" cy="590.19" r="0.9"/><circle cx="672.59" cy="591.8" r="0.9"/><circle cx="678.2" cy="591.8" r="0.9"/><circle cx="683.8" cy="573.85" r="0.9"/><circle cx="689.41" cy="591.17" r="0.9"/><circle cx="695.02" cy="591.8" r="0.9"/><circle cx="700.63" cy="591.16" r="0.9"/><circle cx="706.24" cy="586.29" r="0.9"/><circle cx="711.84" cy="590.3" r="0.9"/><circle cx="717.45" cy="566.5" r="0.9"/><circle cx="723.06" cy="570.18" r="0.9"/><circle cx="728.67" cy="591.8" r="0.9"/><circle cx="734.28" cy="580.38" r="0.9"/><circle cx="739.88" cy="591.8" r="0.9"/><circle cx="745.49" cy="582.42" r="0.9"/><circle cx="751.1" cy="591.8" r="0.9"/><circle cx="756.71" cy="546.92" r="0.9"/><circle cx="762.32" cy="591.8" r="0.9"/><circle cx="767.92" cy="591.8" r="0.9"/><circle cx="773.53" cy="591.8" r="0.9"/><circle cx="779.14" cy="590.83" r="0.9"/><circle cx="784.75" cy="511.02" r="0.9"/><circle cx="790.36" cy="591.24" r="0.9"/><circle cx="795.96" cy="569.36" r="0.9"/><circle cx="801.57" cy="575.48" r="0.9"/><circle cx="807.18" cy="583.64" r="0.9"/><circle cx="812.79" cy="589.81" r="0.9"/><circle cx="818.4" cy="591.8" r="0.9"/><circle cx="824" cy="589.68" r="0.9"/><circle cx="829.61" cy="573.03" r="0.9"/><circle cx="835.22" cy="591.8" r="0.9"/><circle cx="840.83" cy="591.8" r="0.9"/><circle cx="846.44" cy="582.42" r="0.9"/><circle cx="852.04" cy="589.79" r="0.9"/></g>
<circle cx="878" cy="388.7" r="3" fill="#B55C98"/>
<circle cx="878" cy="405.1" r="3" fill="#6AC012"/>
<text transform="translate(887 391.9) scale(1 1.16)" font-size="8.8" font-weight="bold" fill="#d5dae1" text-anchor="start">Read</text>
<text transform="translate(935.5 391.9) scale(1 1.16)" font-size="8.8" font-weight="bold" fill="#d5dae1" text-anchor="end">0.085</text>
<text transform="translate(887 408.3) scale(1 1.16)" font-size="8.8" font-weight="bold" fill="#d5dae1" text-anchor="start">Write</text>
<text transform="translate(935.5 408.3) scale(1 1.16)" font-size="8.8" font-weight="bold" fill="#d5dae1" text-anchor="end">0</text>
<line x1="1043" y1="592.5" x2="1733.05" y2="592.5" stroke="rgba(255,255,255,0.04)" stroke-width="1"/>
<line x1="1036" y1="592.5" x2="1043" y2="592.5" stroke="#343b43" stroke-width="1"/>
<text transform="translate(1028.4 594.1) scale(1 1.13)" font-size="7.5" fill="#a3a9b0" text-anchor="end">0</text>
<line x1="1043" y1="575.5" x2="1733.05" y2="575.5" stroke="rgba(255,255,255,0.04)" stroke-width="1"/>
<line x1="1036" y1="575.5" x2="1043" y2="575.5" stroke="#343b43" stroke-width="1"/>
<text transform="translate(1028.4 577.91) scale(1 1.13)" font-size="7.5" fill="#a3a9b0" text-anchor="end">1,000,000,000</text>
<line x1="1043" y1="559.5" x2="1733.05" y2="559.5" stroke="rgba(255,255,255,0.04)" stroke-width="1"/>
<line x1="1036" y1="559.5" x2="1043" y2="559.5" stroke="#343b43" stroke-width="1"/>
<text transform="translate(1028.4 561.72) scale(1 1.13)" font-size="7.5" fill="#a3a9b0" text-anchor="end">2,000,000,000</text>
<line x1="1043" y1="543.5" x2="1733.05" y2="543.5" stroke="rgba(255,255,255,0.04)" stroke-width="1"/>
<line x1="1036" y1="543.5" x2="1043" y2="543.5" stroke="#343b43" stroke-width="1"/>
<text transform="translate(1028.4 545.53) scale(1 1.13)" font-size="7.5" fill="#a3a9b0" text-anchor="end">3,000,000,000</text>
<line x1="1043" y1="527.5" x2="1733.05" y2="527.5" stroke="rgba(255,255,255,0.04)" stroke-width="1"/>
<line x1="1036" y1="527.5" x2="1043" y2="527.5" stroke="#343b43" stroke-width="1"/>
<text transform="translate(1028.4 529.34) scale(1 1.13)" font-size="7.5" fill="#a3a9b0" text-anchor="end">4,000,000,000</text>
<line x1="1043" y1="511.5" x2="1733.05" y2="511.5" stroke="rgba(255,255,255,0.04)" stroke-width="1"/>
<line x1="1036" y1="511.5" x2="1043" y2="511.5" stroke="#343b43" stroke-width="1"/>
<text transform="translate(1028.4 513.15) scale(1 1.13)" font-size="7.5" fill="#a3a9b0" text-anchor="end">5,000,000,000</text>
<line x1="1043" y1="494.5" x2="1733.05" y2="494.5" stroke="rgba(255,255,255,0.04)" stroke-width="1"/>
<line x1="1036" y1="494.5" x2="1043" y2="494.5" stroke="#343b43" stroke-width="1"/>
<text transform="translate(1028.4 496.96) scale(1 1.13)" font-size="7.5" fill="#a3a9b0" text-anchor="end">6,000,000,000</text>
<line x1="1043" y1="478.5" x2="1733.05" y2="478.5" stroke="rgba(255,255,255,0.04)" stroke-width="1"/>
<line x1="1036" y1="478.5" x2="1043" y2="478.5" stroke="#343b43" stroke-width="1"/>
<text transform="translate(1028.4 480.77) scale(1 1.13)" font-size="7.5" fill="#a3a9b0" text-anchor="end">7,000,000,000</text>
<line x1="1043" y1="462.5" x2="1733.05" y2="462.5" stroke="rgba(255,255,255,0.04)" stroke-width="1"/>
<line x1="1036" y1="462.5" x2="1043" y2="462.5" stroke="#343b43" stroke-width="1"/>
<text transform="translate(1028.4 464.58) scale(1 1.13)" font-size="7.5" fill="#a3a9b0" text-anchor="end">8,000,000,000</text>
<line x1="1043" y1="446.5" x2="1733.05" y2="446.5" stroke="rgba(255,255,255,0.04)" stroke-width="1"/>
<line x1="1036" y1="446.5" x2="1043" y2="446.5" stroke="#343b43" stroke-width="1"/>
<text transform="translate(1028.4 448.39) scale(1 1.13)" font-size="7.5" fill="#a3a9b0" text-anchor="end">9,000,000,000</text>
<line x1="1043" y1="430.5" x2="1733.05" y2="430.5" stroke="rgba(255,255,255,0.04)" stroke-width="1"/>
<line x1="1036" y1="430.5" x2="1043" y2="430.5" stroke="#343b43" stroke-width="1"/>
<text transform="translate(1028.4 432.2) scale(1 1.13)" font-size="7.5" fill="#a3a9b0" text-anchor="end">10,000,000,000</text>
<line x1="1043" y1="413.5" x2="1733.05" y2="413.5" stroke="rgba(255,255,255,0.04)" stroke-width="1"/>
<line x1="1036" y1="413.5" x2="1043" y2="413.5" stroke="#343b43" stroke-width="1"/>
<text transform="translate(1028.4 416.01) scale(1 1.13)" font-size="7.5" fill="#a3a9b0" text-anchor="end">11,000,000,000</text>
<line x1="1043" y1="397.5" x2="1733.05" y2="397.5" stroke="rgba(255,255,255,0.04)" stroke-width="1"/>
<line x1="1036" y1="397.5" x2="1043" y2="397.5" stroke="#343b43" stroke-width="1"/>
<text transform="translate(1028.4 399.82) scale(1 1.13)" font-size="7.5" fill="#a3a9b0" text-anchor="end">12,000,000,000</text>
<line x1="1058.5" y1="383" x2="1058.5" y2="591" stroke="rgba(255,255,255,0.04)" stroke-width="1"/>
<line x1="1058.5" y1="591" x2="1058.5" y2="599" stroke="#343b43" stroke-width="1"/>
<text transform="translate(1057.97 613) scale(1 1.13)" font-size="7.5" fill="#a3a9b0" text-anchor="middle">12:00</text>
<line x1="1145.5" y1="383" x2="1145.5" y2="591" stroke="rgba(255,255,255,0.04)" stroke-width="1"/>
<line x1="1145.5" y1="591" x2="1145.5" y2="599" stroke="#343b43" stroke-width="1"/>
<text transform="translate(1144.76 613) scale(1 1.13)" font-size="7.5" fill="#a3a9b0" text-anchor="middle">15:00</text>
<line x1="1231.5" y1="383" x2="1231.5" y2="591" stroke="rgba(255,255,255,0.04)" stroke-width="1"/>
<line x1="1231.5" y1="591" x2="1231.5" y2="599" stroke="#343b43" stroke-width="1"/>
<text transform="translate(1231.56 613) scale(1 1.13)" font-size="7.5" fill="#a3a9b0" text-anchor="middle">18:00</text>
<line x1="1318.5" y1="383" x2="1318.5" y2="591" stroke="rgba(255,255,255,0.04)" stroke-width="1"/>
<line x1="1318.5" y1="591" x2="1318.5" y2="599" stroke="#343b43" stroke-width="1"/>
<text transform="translate(1318.35 613) scale(1 1.13)" font-size="7.5" fill="#a3a9b0" text-anchor="middle">21:00</text>
<line x1="1405.5" y1="383" x2="1405.5" y2="591" stroke="rgba(255,255,255,0.04)" stroke-width="1"/>
<line x1="1405.5" y1="591" x2="1405.5" y2="599" stroke="#343b43" stroke-width="1"/>
<text transform="translate(1405.15 613) scale(1 1.13)" font-size="7.5" fill="#a3a9b0" text-anchor="middle">00:00</text>
<line x1="1492.5" y1="383" x2="1492.5" y2="591" stroke="rgba(255,255,255,0.04)" stroke-width="1"/>
<line x1="1492.5" y1="591" x2="1492.5" y2="599" stroke="#343b43" stroke-width="1"/>
<text transform="translate(1491.95 613) scale(1 1.13)" font-size="7.5" fill="#a3a9b0" text-anchor="middle">03:00</text>
<line x1="1578.5" y1="383" x2="1578.5" y2="591" stroke="rgba(255,255,255,0.04)" stroke-width="1"/>
<line x1="1578.5" y1="591" x2="1578.5" y2="599" stroke="#343b43" stroke-width="1"/>
<text transform="translate(1578.74 613) scale(1 1.13)" font-size="7.5" fill="#a3a9b0" text-anchor="middle">06:00</text>
<line x1="1665.5" y1="383" x2="1665.5" y2="591" stroke="rgba(255,255,255,0.04)" stroke-width="1"/>
<line x1="1665.5" y1="591" x2="1665.5" y2="599" stroke="#343b43" stroke-width="1"/>
<text transform="translate(1665.54 613) scale(1 1.13)" font-size="7.5" fill="#a3a9b0" text-anchor="middle">09:00</text>
<line x1="1043.5" y1="383" x2="1043.5" y2="591" stroke="#343b43" stroke-width="1"/>
<text transform="translate(1388 627) scale(1 1.05)" font-size="9" font-weight="bold" fill="#c8cdd3" text-anchor="middle">per 10 minutes</text>
<polygon points="1043.5,591.8 1043.5,498.13 1048.32,501.39 1053.14,501.73 1057.97,502.57 1062.79,502.59 1067.61,503.69 1072.43,503.54 1077.25,500.92 1082.08,499.65 1086.9,501.93 1091.72,502.78 1096.54,504.46 1101.36,501.95 1106.19,505.93 1111.01,506.31 1115.83,506.18 1120.65,506.06 1125.47,505.78 1130.3,505.81 1135.12,506.05 1139.94,506.41 1144.76,505.93 1149.58,506.17 1154.41,506.08 1159.23,506.01 1164.05,506.08 1168.87,506.19 1173.69,505.92 1178.52,506.28 1183.34,506.29 1188.16,506 1192.98,506.44 1197.8,506.39 1202.63,506.06 1207.45,506.57 1212.27,506.08 1217.09,506.19 1221.91,505.23 1226.74,505.22 1231.56,504.81 1236.38,504.63 1241.2,505.03 1246.02,504.71 1250.85,506.77 1255.67,506.87 1260.49,507.04 1265.31,507.22 1270.13,507.01 1274.96,506.92 1279.78,507.47 1284.6,507.43 1289.42,507.11 1294.24,507.2 1299.07,507.34 1303.89,507.76 1308.71,507.31 1313.53,507.14 1318.35,507.13 1323.18,507.32 1328,507.74 1332.82,507.23 1337.64,507.63 1342.46,507.36 1347.29,507.16 1352.11,507.31 1356.93,507.69 1361.75,507.58 1366.57,507.18 1371.4,507.68 1376.22,507.38 1381.04,507.51 1385.86,507.67 1390.68,507.37 1395.51,507.75 1400.33,507.7 1405.15,507.53 1409.97,507.73 1414.79,507.74 1419.62,507.4 1424.44,507.29 1429.26,507.21 1434.08,507.69 1438.9,507.49 1443.73,507.57 1448.55,507.39 1453.37,507.46 1458.19,507.17 1463.01,507.53 1467.84,507.74 1472.66,507.32 1477.48,507.68 1482.3,507.37 1487.12,507.45 1491.95,507.18 1496.77,507.41 1501.59,506.56 1506.41,506.79 1511.23,506.61 1516.06,506.8 1520.88,506.48 1525.7,506.63 1530.52,506.88 1535.34,506.81 1540.17,506.72 1544.99,506.49 1549.81,506.85 1554.63,506.5 1559.45,506.54 1564.28,506.91 1569.1,506.53 1573.92,506.91 1578.74,506.88 1583.56,506.58 1588.39,506.81 1593.21,506.4 1598.03,506.65 1602.85,506.76 1607.67,506.45 1612.5,506.95 1617.32,506.49 1622.14,506.93 1626.96,506.87 1631.78,506.35 1636.61,506.52 1641.43,506.82 1646.25,506.89 1651.07,506.33 1655.89,506.53 1660.72,506.43 1665.54,506.87 1670.36,506.56 1675.18,506.73 1680,506.81 1684.83,503.19 1689.65,505.92 1694.47,506.16 1699.29,506.21 1704.11,506.44 1708.94,506.07 1713.76,506.26 1718.58,506.23 1723.4,506.54 1728.22,506.34 1733.05,506.63 1733.05,591.8" fill="#54B399" fill-opacity="0.5"/><polyline points="1043.5,498.13 1048.32,501.39 1053.14,501.73 1057.97,502.57 1062.79,502.59 1067.61,503.69 1072.43,503.54 1077.25,500.92 1082.08,499.65 1086.9,501.93 1091.72,502.78 1096.54,504.46 1101.36,501.95 1106.19,505.93 1111.01,506.31 1115.83,506.18 1120.65,506.06 1125.47,505.78 1130.3,505.81 1135.12,506.05 1139.94,506.41 1144.76,505.93 1149.58,506.17 1154.41,506.08 1159.23,506.01 1164.05,506.08 1168.87,506.19 1173.69,505.92 1178.52,506.28 1183.34,506.29 1188.16,506 1192.98,506.44 1197.8,506.39 1202.63,506.06 1207.45,506.57 1212.27,506.08 1217.09,506.19 1221.91,505.23 1226.74,505.22 1231.56,504.81 1236.38,504.63 1241.2,505.03 1246.02,504.71 1250.85,506.77 1255.67,506.87 1260.49,507.04 1265.31,507.22 1270.13,507.01 1274.96,506.92 1279.78,507.47 1284.6,507.43 1289.42,507.11 1294.24,507.2 1299.07,507.34 1303.89,507.76 1308.71,507.31 1313.53,507.14 1318.35,507.13 1323.18,507.32 1328,507.74 1332.82,507.23 1337.64,507.63 1342.46,507.36 1347.29,507.16 1352.11,507.31 1356.93,507.69 1361.75,507.58 1366.57,507.18 1371.4,507.68 1376.22,507.38 1381.04,507.51 1385.86,507.67 1390.68,507.37 1395.51,507.75 1400.33,507.7 1405.15,507.53 1409.97,507.73 1414.79,507.74 1419.62,507.4 1424.44,507.29 1429.26,507.21 1434.08,507.69 1438.9,507.49 1443.73,507.57 1448.55,507.39 1453.37,507.46 1458.19,507.17 1463.01,507.53 1467.84,507.74 1472.66,507.32 1477.48,507.68 1482.3,507.37 1487.12,507.45 1491.95,507.18 1496.77,507.41 1501.59,506.56 1506.41,506.79 1511.23,506.61 1516.06,506.8 1520.88,506.48 1525.7,506.63 1530.52,506.88 1535.34,506.81 1540.17,506.72 1544.99,506.49 1549.81,506.85 1554.63,506.5 1559.45,506.54 1564.28,506.91 1569.1,506.53 1573.92,506.91 1578.74,506.88 1583.56,506.58 1588.39,506.81 1593.21,506.4 1598.03,506.65 1602.85,506.76 1607.67,506.45 1612.5,506.95 1617.32,506.49 1622.14,506.93 1626.96,506.87 1631.78,506.35 1636.61,506.52 1641.43,506.82 1646.25,506.89 1651.07,506.33 1655.89,506.53 1660.72,506.43 1665.54,506.87 1670.36,506.56 1675.18,506.73 1680,506.81 1684.83,503.19 1689.65,505.92 1694.47,506.16 1699.29,506.21 1704.11,506.44 1708.94,506.07 1713.76,506.26 1718.58,506.23 1723.4,506.54 1728.22,506.34 1733.05,506.63" fill="none" stroke="#54B399" stroke-opacity="0.35" stroke-width="1" stroke-linejoin="round"/>
<polygon points="1043.5,591.8 1043.5,513.33 1048.32,513.34 1053.14,513.56 1057.97,513.3 1062.79,513.51 1067.61,513.63 1072.43,513.66 1077.25,513.62 1082.08,513.57 1086.9,513.38 1091.72,513.57 1096.54,513.68 1101.36,513.34 1106.19,513.44 1111.01,513.7 1115.83,513.69 1120.65,513.66 1125.47,513.55 1130.3,513.31 1135.12,513.27 1139.94,513.43 1144.76,513.62 1149.58,513.52 1154.41,513.56 1159.23,513.58 1164.05,513.73 1168.87,513.46 1173.69,513.34 1178.52,513.39 1183.34,513.7 1188.16,513.49 1192.98,513.67 1197.8,513.41 1202.63,513.54 1207.45,513.3 1212.27,513.38 1217.09,513.71 1221.91,513.61 1226.74,513.32 1231.56,513.55 1236.38,513.56 1241.2,513.56 1246.02,513.41 1250.85,513.33 1255.67,513.52 1260.49,513.31 1265.31,513.5 1270.13,513.74 1274.96,513.4 1279.78,513.59 1284.6,513.77 1289.42,513.32 1294.24,513.79 1299.07,513.52 1303.89,513.57 1308.71,513.38 1313.53,513.62 1318.35,513.71 1323.18,513.68 1328,513.72 1332.82,513.55 1337.64,513.65 1342.46,513.46 1347.29,513.71 1352.11,513.66 1356.93,513.71 1361.75,513.36 1366.57,513.43 1371.4,513.42 1376.22,513.54 1381.04,513.65 1385.86,513.77 1390.68,513.44 1395.51,513.61 1400.33,513.83 1405.15,513.77 1409.97,513.81 1414.79,513.51 1419.62,513.42 1424.44,513.77 1429.26,513.48 1434.08,513.71 1438.9,513.54 1443.73,513.45 1448.55,513.57 1453.37,513.49 1458.19,513.7 1463.01,513.88 1467.84,513.63 1472.66,513.6 1477.48,513.8 1482.3,513.7 1487.12,513.74 1491.95,513.88 1496.77,513.74 1501.59,513.71 1506.41,513.67 1511.23,513.56 1516.06,513.71 1520.88,513.43 1525.7,513.51 1530.52,513.46 1535.34,513.58 1540.17,513.59 1544.99,513.66 1549.81,513.53 1554.63,513.75 1559.45,513.64 1564.28,513.6 1569.1,513.68 1573.92,513.79 1578.74,513.9 1583.56,513.89 1588.39,513.77 1593.21,513.66 1598.03,513.57 1602.85,513.6 1607.67,513.8 1612.5,513.5 1617.32,513.82 1622.14,513.61 1626.96,513.92 1631.78,513.59 1636.61,513.64 1641.43,513.5 1646.25,513.53 1651.07,513.63 1655.89,513.56 1660.72,513.61 1665.54,513.68 1670.36,513.88 1675.18,513.73 1680,513.55 1684.83,513.87 1689.65,513.51 1694.47,513.72 1699.29,513.8 1704.11,513.99 1708.94,513.81 1713.76,513.91 1718.58,513.68 1723.4,513.57 1728.22,513.56 1733.05,513.71 1733.05,591.8" fill="#6092C0" fill-opacity="0.5"/><polyline points="1043.5,513.33 1048.32,513.34 1053.14,513.56 1057.97,513.3 1062.79,513.51 1067.61,513.63 1072.43,513.66 1077.25,513.62 1082.08,513.57 1086.9,513.38 1091.72,513.57 1096.54,513.68 1101.36,513.34 1106.19,513.44 1111.01,513.7 1115.83,513.69 1120.65,513.66 1125.47,513.55 1130.3,513.31 1135.12,513.27 1139.94,513.43 1144.76,513.62 1149.58,513.52 1154.41,513.56 1159.23,513.58 1164.05,513.73 1168.87,513.46 1173.69,513.34 1178.52,513.39 1183.34,513.7 1188.16,513.49 1192.98,513.67 1197.8,513.41 1202.63,513.54 1207.45,513.3 1212.27,513.38 1217.09,513.71 1221.91,513.61 1226.74,513.32 1231.56,513.55 1236.38,513.56 1241.2,513.56 1246.02,513.41 1250.85,513.33 1255.67,513.52 1260.49,513.31 1265.31,513.5 1270.13,513.74 1274.96,513.4 1279.78,513.59 1284.6,513.77 1289.42,513.32 1294.24,513.79 1299.07,513.52 1303.89,513.57 1308.71,513.38 1313.53,513.62 1318.35,513.71 1323.18,513.68 1328,513.72 1332.82,513.55 1337.64,513.65 1342.46,513.46 1347.29,513.71 1352.11,513.66 1356.93,513.71 1361.75,513.36 1366.57,513.43 1371.4,513.42 1376.22,513.54 1381.04,513.65 1385.86,513.77 1390.68,513.44 1395.51,513.61 1400.33,513.83 1405.15,513.77 1409.97,513.81 1414.79,513.51 1419.62,513.42 1424.44,513.77 1429.26,513.48 1434.08,513.71 1438.9,513.54 1443.73,513.45 1448.55,513.57 1453.37,513.49 1458.19,513.7 1463.01,513.88 1467.84,513.63 1472.66,513.6 1477.48,513.8 1482.3,513.7 1487.12,513.74 1491.95,513.88 1496.77,513.74 1501.59,513.71 1506.41,513.67 1511.23,513.56 1516.06,513.71 1520.88,513.43 1525.7,513.51 1530.52,513.46 1535.34,513.58 1540.17,513.59 1544.99,513.66 1549.81,513.53 1554.63,513.75 1559.45,513.64 1564.28,513.6 1569.1,513.68 1573.92,513.79 1578.74,513.9 1583.56,513.89 1588.39,513.77 1593.21,513.66 1598.03,513.57 1602.85,513.6 1607.67,513.8 1612.5,513.5 1617.32,513.82 1622.14,513.61 1626.96,513.92 1631.78,513.59 1636.61,513.64 1641.43,513.5 1646.25,513.53 1651.07,513.63 1655.89,513.56 1660.72,513.61 1665.54,513.68 1670.36,513.88 1675.18,513.73 1680,513.55 1684.83,513.87 1689.65,513.51 1694.47,513.72 1699.29,513.8 1704.11,513.99 1708.94,513.81 1713.76,513.91 1718.58,513.68 1723.4,513.57 1728.22,513.56 1733.05,513.71" fill="none" stroke="#6092C0" stroke-opacity="0.35" stroke-width="1" stroke-linejoin="round"/>
<polygon points="1043.5,591.8 1043.5,396.61 1048.32,406.63 1053.14,416.71 1057.97,416.59 1062.79,416.75 1067.61,416.61 1072.43,417.33 1077.25,416.98 1082.08,416.59 1086.9,388.49 1091.72,386.67 1096.54,383.75 1101.36,402.4 1106.19,421.52 1111.01,421.77 1115.83,422.23 1120.65,418.15 1125.47,419.61 1130.3,419.45 1135.12,418.84 1139.94,418.86 1144.76,419.25 1149.58,418.63 1154.41,419.06 1159.23,418.57 1164.05,418.87 1168.87,416.54 1173.69,418.27 1178.52,419.21 1183.34,419.61 1188.16,414.94 1192.98,414.22 1197.8,413.88 1202.63,413.34 1207.45,413.68 1212.27,413.57 1217.09,413.95 1221.91,413.35 1226.74,414.37 1231.56,414.14 1236.38,407.72 1241.2,408.21 1246.02,408.16 1250.85,408.31 1255.67,408.33 1260.49,408.4 1265.31,408.2 1270.13,406.34 1274.96,406.62 1279.78,405.88 1284.6,405.95 1289.42,405.77 1294.24,403.74 1299.07,408.87 1303.89,409 1308.71,408.87 1313.53,408.69 1318.35,409.21 1323.18,408.47 1328,409.24 1332.82,408.65 1337.64,408.57 1342.46,409.24 1347.29,411.86 1352.11,412.2 1356.93,410.81 1361.75,410.06 1366.57,411.65 1371.4,411.54 1376.22,410.91 1381.04,411.53 1385.86,411.07 1390.68,410.93 1395.51,410.92 1400.33,411.41 1405.15,411.4 1409.97,411.26 1414.79,411.06 1419.62,411.6 1424.44,411.08 1429.26,411.04 1434.08,410.99 1438.9,411.66 1443.73,410.92 1448.55,411.61 1453.37,411.41 1458.19,411.19 1463.01,410.94 1467.84,411.41 1472.66,410.94 1477.48,411.24 1482.3,411.43 1487.12,411.43 1491.95,409.11 1496.77,411.62 1501.59,411.57 1506.41,411.13 1511.23,410.88 1516.06,411.56 1520.88,411.65 1525.7,410.89 1530.52,411.25 1535.34,408.93 1540.17,411.49 1544.99,411.21 1549.81,411.02 1554.63,411.32 1559.45,411.34 1564.28,411.64 1569.1,410.94 1573.92,411.66 1578.74,411.29 1583.56,411.01 1588.39,411.58 1593.21,411.09 1598.03,410.92 1602.85,411.18 1607.67,411.05 1612.5,411.6 1617.32,411.33 1622.14,411.57 1626.96,411 1631.78,411.45 1636.61,411.32 1641.43,410.88 1646.25,411 1651.07,410.9 1655.89,411.32 1660.72,411.29 1665.54,411.1 1670.36,411.3 1675.18,411.45 1680,411.36 1684.83,411.57 1689.65,411.38 1694.47,410.89 1699.29,410.91 1704.11,411.18 1708.94,410.47 1713.76,409.79 1718.58,410 1723.4,409.85 1728.22,409.43 1733.05,409.37 1733.05,591.8" fill="#B9A888" fill-opacity="0.5"/><polyline points="1043.5,396.61 1048.32,406.63 1053.14,416.71 1057.97,416.59 1062.79,416.75 1067.61,416.61 1072.43,417.33 1077.25,416.98 1082.08,416.59 1086.9,388.49 1091.72,386.67 1096.54,383.75 1101.36,402.4 1106.19,421.52 1111.01,421.77 1115.83,422.23 1120.65,418.15 1125.47,419.61 1130.3,419.45 1135.12,418.84 1139.94,418.86 1144.76,419.25 1149.58,418.63 1154.41,419.06 1159.23,418.57 1164.05,418.87 1168.87,416.54 1173.69,418.27 1178.52,419.21 1183.34,419.61 1188.16,414.94 1192.98,414.22 1197.8,413.88 1202.63,413.34 1207.45,413.68 1212.27,413.57 1217.09,413.95 1221.91,413.35 1226.74,414.37 1231.56,414.14 1236.38,407.72 1241.2,408.21 1246.02,408.16 1250.85,408.31 1255.67,408.33 1260.49,408.4 1265.31,408.2 1270.13,406.34 1274.96,406.62 1279.78,405.88 1284.6,405.95 1289.42,405.77 1294.24,403.74 1299.07,408.87 1303.89,409 1308.71,408.87 1313.53,408.69 1318.35,409.21 1323.18,408.47 1328,409.24 1332.82,408.65 1337.64,408.57 1342.46,409.24 1347.29,411.86 1352.11,412.2 1356.93,410.81 1361.75,410.06 1366.57,411.65 1371.4,411.54 1376.22,410.91 1381.04,411.53 1385.86,411.07 1390.68,410.93 1395.51,410.92 1400.33,411.41 1405.15,411.4 1409.97,411.26 1414.79,411.06 1419.62,411.6 1424.44,411.08 1429.26,411.04 1434.08,410.99 1438.9,411.66 1443.73,410.92 1448.55,411.61 1453.37,411.41 1458.19,411.19 1463.01,410.94 1467.84,411.41 1472.66,410.94 1477.48,411.24 1482.3,411.43 1487.12,411.43 1491.95,409.11 1496.77,411.62 1501.59,411.57 1506.41,411.13 1511.23,410.88 1516.06,411.56 1520.88,411.65 1525.7,410.89 1530.52,411.25 1535.34,408.93 1540.17,411.49 1544.99,411.21 1549.81,411.02 1554.63,411.32 1559.45,411.34 1564.28,411.64 1569.1,410.94 1573.92,411.66 1578.74,411.29 1583.56,411.01 1588.39,411.58 1593.21,411.09 1598.03,410.92 1602.85,411.18 1607.67,411.05 1612.5,411.6 1617.32,411.33 1622.14,411.57 1626.96,411 1631.78,411.45 1636.61,411.32 1641.43,410.88 1646.25,411 1651.07,410.9 1655.89,411.32 1660.72,411.29 1665.54,411.1 1670.36,411.3 1675.18,411.45 1680,411.36 1684.83,411.57 1689.65,411.38 1694.47,410.89 1699.29,410.91 1704.11,411.18 1708.94,410.47 1713.76,409.79 1718.58,410 1723.4,409.85 1728.22,409.43 1733.05,409.37" fill="none" stroke="#B9A888" stroke-opacity="0.6" stroke-width="1" stroke-linejoin="round"/>
<polygon points="1043.5,591.8 1043.5,532.97 1048.32,532.73 1053.14,531.3 1057.97,529.06 1062.79,529.83 1067.61,528.87 1072.43,526.25 1077.25,527.29 1082.08,518.75 1086.9,507.99 1091.72,506.69 1096.54,531.02 1101.36,532.05 1106.19,532.4 1111.01,532.09 1115.83,532.32 1120.65,532.3 1125.47,532.44 1130.3,532.07 1135.12,532.18 1139.94,531.99 1144.76,532.19 1149.58,532.34 1154.41,532.31 1159.23,532.28 1164.05,531.94 1168.87,532.3 1173.69,532.35 1178.52,532.22 1183.34,532.34 1188.16,532.17 1192.98,532.07 1197.8,532.05 1202.63,532.28 1207.45,532.29 1212.27,532.12 1217.09,532.02 1221.91,532.13 1226.74,532.06 1231.56,531.89 1236.38,532.26 1241.2,532.2 1246.02,532.08 1250.85,532.06 1255.67,531.87 1260.49,532.04 1265.31,531.98 1270.13,532.09 1274.96,531.91 1279.78,531.88 1284.6,532.14 1289.42,532.23 1294.24,532.15 1299.07,532.09 1303.89,531.83 1308.71,532.13 1313.53,531.95 1318.35,531.94 1323.18,531.78 1328,532.18 1332.82,531.86 1337.64,532.07 1342.46,532.18 1347.29,531.91 1352.11,531.81 1356.93,531.93 1361.75,532.18 1366.57,531.73 1371.4,532.01 1376.22,531.88 1381.04,531.84 1385.86,532.06 1390.68,531.98 1395.51,532.01 1400.33,532.12 1405.15,532.13 1409.97,531.81 1414.79,531.95 1419.62,531.73 1424.44,532.11 1429.26,531.99 1434.08,531.08 1438.9,530.7 1443.73,530.77 1448.55,530.71 1453.37,530.89 1458.19,531.08 1463.01,530.92 1467.84,531 1472.66,531.09 1477.48,530.82 1482.3,530.95 1487.12,531.03 1491.95,530.82 1496.77,530.61 1501.59,530.6 1506.41,530.82 1511.23,530.99 1516.06,530.66 1520.88,530.97 1525.7,530.75 1530.52,530.97 1535.34,528.1 1540.17,526.05 1544.99,523.83 1549.81,522.62 1554.63,523.06 1559.45,523.44 1564.28,524.29 1569.1,524.98 1573.92,525.41 1578.74,525.25 1583.56,525.54 1588.39,525.44 1593.21,525.34 1598.03,525.65 1602.85,525.45 1607.67,525.61 1612.5,525.83 1617.32,525.9 1622.14,525.5 1626.96,525.76 1631.78,525.8 1636.61,525.6 1641.43,525.8 1646.25,525.86 1651.07,526 1655.89,525.8 1660.72,526.07 1665.54,525.99 1670.36,525.88 1675.18,525.99 1680,526.25 1684.83,526.24 1689.65,526.03 1694.47,526.05 1699.29,526.38 1704.11,525.97 1708.94,526.42 1713.76,526.44 1718.58,526.5 1723.4,526.36 1728.22,526.3 1733.05,526.22 1733.05,591.8" fill="#9170B8" fill-opacity="0.5"/><polyline points="1043.5,532.97 1048.32,532.73 1053.14,531.3 1057.97,529.06 1062.79,529.83 1067.61,528.87 1072.43,526.25 1077.25,527.29 1082.08,518.75 1086.9,507.99 1091.72,506.69 1096.54,531.02 1101.36,532.05 1106.19,532.4 1111.01,532.09 1115.83,532.32 1120.65,532.3 1125.47,532.44 1130.3,532.07 1135.12,532.18 1139.94,531.99 1144.76,532.19 1149.58,532.34 1154.41,532.31 1159.23,532.28 1164.05,531.94 1168.87,532.3 1173.69,532.35 1178.52,532.22 1183.34,532.34 1188.16,532.17 1192.98,532.07 1197.8,532.05 1202.63,532.28 1207.45,532.29 1212.27,532.12 1217.09,532.02 1221.91,532.13 1226.74,532.06 1231.56,531.89 1236.38,532.26 1241.2,532.2 1246.02,532.08 1250.85,532.06 1255.67,531.87 1260.49,532.04 1265.31,531.98 1270.13,532.09 1274.96,531.91 1279.78,531.88 1284.6,532.14 1289.42,532.23 1294.24,532.15 1299.07,532.09 1303.89,531.83 1308.71,532.13 1313.53,531.95 1318.35,531.94 1323.18,531.78 1328,532.18 1332.82,531.86 1337.64,532.07 1342.46,532.18 1347.29,531.91 1352.11,531.81 1356.93,531.93 1361.75,532.18 1366.57,531.73 1371.4,532.01 1376.22,531.88 1381.04,531.84 1385.86,532.06 1390.68,531.98 1395.51,532.01 1400.33,532.12 1405.15,532.13 1409.97,531.81 1414.79,531.95 1419.62,531.73 1424.44,532.11 1429.26,531.99 1434.08,531.08 1438.9,530.7 1443.73,530.77 1448.55,530.71 1453.37,530.89 1458.19,531.08 1463.01,530.92 1467.84,531 1472.66,531.09 1477.48,530.82 1482.3,530.95 1487.12,531.03 1491.95,530.82 1496.77,530.61 1501.59,530.6 1506.41,530.82 1511.23,530.99 1516.06,530.66 1520.88,530.97 1525.7,530.75 1530.52,530.97 1535.34,528.1 1540.17,526.05 1544.99,523.83 1549.81,522.62 1554.63,523.06 1559.45,523.44 1564.28,524.29 1569.1,524.98 1573.92,525.41 1578.74,525.25 1583.56,525.54 1588.39,525.44 1593.21,525.34 1598.03,525.65 1602.85,525.45 1607.67,525.61 1612.5,525.83 1617.32,525.9 1622.14,525.5 1626.96,525.76 1631.78,525.8 1636.61,525.6 1641.43,525.8 1646.25,525.86 1651.07,526 1655.89,525.8 1660.72,526.07 1665.54,525.99 1670.36,525.88 1675.18,525.99 1680,526.25 1684.83,526.24 1689.65,526.03 1694.47,526.05 1699.29,526.38 1704.11,525.97 1708.94,526.42 1713.76,526.44 1718.58,526.5 1723.4,526.36 1728.22,526.3 1733.05,526.22" fill="none" stroke="#9170B8" stroke-opacity="0.35" stroke-width="1" stroke-linejoin="round"/>
<polygon points="1043.5,591.8 1043.5,511.61 1048.32,511.62 1053.14,511.54 1057.97,511.71 1062.79,511.86 1067.61,511.89 1072.43,511.8 1077.25,511.88 1082.08,511.47 1086.9,511.67 1091.72,511.53 1096.54,511.9 1101.36,511.67 1106.19,511.47 1111.01,511.6 1115.83,511.69 1120.65,511.68 1125.47,511.85 1130.3,511.83 1135.12,511.83 1139.94,511.72 1144.76,511.72 1149.58,511.47 1154.41,511.83 1159.23,511.78 1164.05,511.77 1168.87,511.82 1173.69,511.76 1178.52,511.79 1183.34,508.92 1188.16,509.13 1192.98,508.7 1197.8,511.72 1202.63,511.44 1207.45,511.56 1212.27,511.56 1217.09,511.65 1221.91,511.41 1226.74,511.81 1231.56,511.54 1236.38,511.71 1241.2,511.52 1246.02,511.49 1250.85,511.76 1255.67,511.73 1260.49,511.81 1265.31,511.71 1270.13,511.78 1274.96,511.61 1279.78,511.33 1284.6,511.62 1289.42,511.64 1294.24,511.56 1299.07,511.64 1303.89,511.42 1308.71,511.42 1313.53,511.68 1318.35,511.64 1323.18,511.42 1328,511.29 1332.82,511.43 1337.64,511.52 1342.46,511.25 1347.29,511.72 1352.11,511.69 1356.93,511.33 1361.75,511.5 1366.57,511.68 1371.4,511.43 1376.22,511.21 1381.04,511.43 1385.86,511.5 1390.68,511.62 1395.51,511.63 1400.33,511.22 1405.15,511.41 1409.97,511.19 1414.79,511.61 1419.62,511.52 1424.44,511.6 1429.26,511.43 1434.08,511.59 1438.9,511.49 1443.73,511.41 1448.55,511.45 1453.37,511.57 1458.19,511.57 1463.01,511.11 1467.84,511.49 1472.66,511.32 1477.48,511.37 1482.3,511.3 1487.12,511.51 1491.95,511.39 1496.77,511.49 1501.59,511.27 1506.41,511.08 1511.23,511.23 1516.06,511.1 1520.88,511.41 1525.7,511.5 1530.52,511.24 1535.34,511.26 1540.17,511.21 1544.99,511.3 1549.81,511.17 1554.63,511.12 1559.45,511.02 1564.28,511.31 1569.1,511.24 1573.92,511.05 1578.74,511.33 1583.56,511.38 1588.39,511.28 1593.21,511.38 1598.03,511.04 1602.85,511.01 1607.67,511.25 1612.5,511.34 1617.32,511.35 1622.14,511.27 1626.96,511.34 1631.78,511.17 1636.61,511.09 1641.43,511.25 1646.25,511.33 1651.07,511.01 1655.89,511.32 1660.72,511.25 1665.54,511.2 1670.36,511.15 1675.18,511.28 1680,511.11 1684.83,511.16 1689.65,510.94 1694.47,511.03 1699.29,510.86 1704.11,510.97 1708.94,510.91 1713.76,511 1718.58,511.06 1723.4,510.87 1728.22,510.94 1733.05,510.79 1733.05,591.8" fill="#CA8EAE" fill-opacity="0.5"/><polyline points="1043.5,511.61 1048.32,511.62 1053.14,511.54 1057.97,511.71 1062.79,511.86 1067.61,511.89 1072.43,511.8 1077.25,511.88 1082.08,511.47 1086.9,511.67 1091.72,511.53 1096.54,511.9 1101.36,511.67 1106.19,511.47 1111.01,511.6 1115.83,511.69 1120.65,511.68 1125.47,511.85 1130.3,511.83 1135.12,511.83 1139.94,511.72 1144.76,511.72 1149.58,511.47 1154.41,511.83 1159.23,511.78 1164.05,511.77 1168.87,511.82 1173.69,511.76 1178.52,511.79 1183.34,508.92 1188.16,509.13 1192.98,508.7 1197.8,511.72 1202.63,511.44 1207.45,511.56 1212.27,511.56 1217.09,511.65 1221.91,511.41 1226.74,511.81 1231.56,511.54 1236.38,511.71 1241.2,511.52 1246.02,511.49 1250.85,511.76 1255.67,511.73 1260.49,511.81 1265.31,511.71 1270.13,511.78 1274.96,511.61 1279.78,511.33 1284.6,511.62 1289.42,511.64 1294.24,511.56 1299.07,511.64 1303.89,511.42 1308.71,511.42 1313.53,511.68 1318.35,511.64 1323.18,511.42 1328,511.29 1332.82,511.43 1337.64,511.52 1342.46,511.25 1347.29,511.72 1352.11,511.69 1356.93,511.33 1361.75,511.5 1366.57,511.68 1371.4,511.43 1376.22,511.21 1381.04,511.43 1385.86,511.5 1390.68,511.62 1395.51,511.63 1400.33,511.22 1405.15,511.41 1409.97,511.19 1414.79,511.61 1419.62,511.52 1424.44,511.6 1429.26,511.43 1434.08,511.59 1438.9,511.49 1443.73,511.41 1448.55,511.45 1453.37,511.57 1458.19,511.57 1463.01,511.11 1467.84,511.49 1472.66,511.32 1477.48,511.37 1482.3,511.3 1487.12,511.51 1491.95,511.39 1496.77,511.49 1501.59,511.27 1506.41,511.08 1511.23,511.23 1516.06,511.1 1520.88,511.41 1525.7,511.5 1530.52,511.24 1535.34,511.26 1540.17,511.21 1544.99,511.3 1549.81,511.17 1554.63,511.12 1559.45,511.02 1564.28,511.31 1569.1,511.24 1573.92,511.05 1578.74,511.33 1583.56,511.38 1588.39,511.28 1593.21,511.38 1598.03,511.04 1602.85,511.01 1607.67,511.25 1612.5,511.34 1617.32,511.35 1622.14,511.27 1626.96,511.34 1631.78,511.17 1636.61,511.09 1641.43,511.25 1646.25,511.33 1651.07,511.01 1655.89,511.32 1660.72,511.25 1665.54,511.2 1670.36,511.15 1675.18,511.28 1680,511.11 1684.83,511.16 1689.65,510.94 1694.47,511.03 1699.29,510.86 1704.11,510.97 1708.94,510.91 1713.76,511 1718.58,511.06 1723.4,510.87 1728.22,510.94 1733.05,510.79" fill="none" stroke="#CA8EAE" stroke-opacity="0.35" stroke-width="1" stroke-linejoin="round"/>
<polygon points="1043.5,591.8 1043.5,524.74 1048.32,524.86 1053.14,524.87 1057.97,525.16 1062.79,525.17 1067.61,524.8 1072.43,524.98 1077.25,523.3 1082.08,524.78 1086.9,524.36 1091.72,524.24 1096.54,523.56 1101.36,522.54 1106.19,522.84 1111.01,523.56 1115.83,523.62 1120.65,524.15 1125.47,524.25 1130.3,524.6 1135.12,525.33 1139.94,525.6 1144.76,526.03 1149.58,526.29 1154.41,526.75 1159.23,526.92 1164.05,527.55 1168.87,527.63 1173.69,527.6 1178.52,527.89 1183.34,527.85 1188.16,527.71 1192.98,527.82 1197.8,528.27 1202.63,528.46 1207.45,528.18 1212.27,528.22 1217.09,528.5 1221.91,528.84 1226.74,528.89 1231.56,528.67 1236.38,528.77 1241.2,529.26 1246.02,529.24 1250.85,529.17 1255.67,529.3 1260.49,529.11 1265.31,529.34 1270.13,529.2 1274.96,529.55 1279.78,529.42 1284.6,529.25 1289.42,529.43 1294.24,529.78 1299.07,529.82 1303.89,529.57 1308.71,529.71 1313.53,529.72 1318.35,529.68 1323.18,529.64 1328,529.46 1332.82,529.82 1337.64,529.67 1342.46,529.83 1347.29,529.7 1352.11,529.62 1356.93,529.92 1361.75,529.76 1366.57,529.66 1371.4,530 1376.22,529.64 1381.04,529.82 1385.86,529.79 1390.68,529.75 1395.51,529.67 1400.33,530.03 1405.15,529.83 1409.97,530.06 1414.79,529.9 1419.62,529.93 1424.44,530.1 1429.26,529.97 1434.08,529.91 1438.9,529.82 1443.73,529.69 1448.55,529.97 1453.37,529.9 1458.19,529.82 1463.01,529.72 1467.84,529.73 1472.66,529.72 1477.48,524.95 1482.3,519.92 1487.12,520.52 1491.95,521.9 1496.77,521.69 1501.59,521.51 1506.41,521.58 1511.23,521.61 1516.06,521.32 1520.88,521.58 1525.7,521.43 1530.52,521.26 1535.34,521.56 1540.17,521.42 1544.99,521.31 1549.81,521.24 1554.63,521.38 1559.45,521.23 1564.28,521.38 1569.1,521.33 1573.92,521.18 1578.74,521.24 1583.56,520.8 1588.39,521.11 1593.21,521.07 1598.03,520.79 1602.85,520.77 1607.67,520.97 1612.5,520.66 1617.32,520.72 1622.14,520.8 1626.96,520.65 1631.78,520.8 1636.61,520.76 1641.43,520.42 1646.25,520.6 1651.07,520.34 1655.89,520.66 1660.72,520.64 1665.54,520.65 1670.36,520.28 1675.18,520.33 1680,520.56 1684.83,520.51 1689.65,520.1 1694.47,520.22 1699.29,520 1704.11,520.37 1708.94,520.07 1713.76,520.26 1718.58,522.56 1723.4,522.61 1728.22,522.61 1733.05,522.8 1733.05,591.8" fill="#D6BF57" fill-opacity="0.5"/><polyline points="1043.5,524.74 1048.32,524.86 1053.14,524.87 1057.97,525.16 1062.79,525.17 1067.61,524.8 1072.43,524.98 1077.25,523.3 1082.08,524.78 1086.9,524.36 1091.72,524.24 1096.54,523.56 1101.36,522.54 1106.19,522.84 1111.01,523.56 1115.83,523.62 1120.65,524.15 1125.47,524.25 1130.3,524.6 1135.12,525.33 1139.94,525.6 1144.76,526.03 1149.58,526.29 1154.41,526.75 1159.23,526.92 1164.05,527.55 1168.87,527.63 1173.69,527.6 1178.52,527.89 1183.34,527.85 1188.16,527.71 1192.98,527.82 1197.8,528.27 1202.63,528.46 1207.45,528.18 1212.27,528.22 1217.09,528.5 1221.91,528.84 1226.74,528.89 1231.56,528.67 1236.38,528.77 1241.2,529.26 1246.02,529.24 1250.85,529.17 1255.67,529.3 1260.49,529.11 1265.31,529.34 1270.13,529.2 1274.96,529.55 1279.78,529.42 1284.6,529.25 1289.42,529.43 1294.24,529.78 1299.07,529.82 1303.89,529.57 1308.71,529.71 1313.53,529.72 1318.35,529.68 1323.18,529.64 1328,529.46 1332.82,529.82 1337.64,529.67 1342.46,529.83 1347.29,529.7 1352.11,529.62 1356.93,529.92 1361.75,529.76 1366.57,529.66 1371.4,530 1376.22,529.64 1381.04,529.82 1385.86,529.79 1390.68,529.75 1395.51,529.67 1400.33,530.03 1405.15,529.83 1409.97,530.06 1414.79,529.9 1419.62,529.93 1424.44,530.1 1429.26,529.97 1434.08,529.91 1438.9,529.82 1443.73,529.69 1448.55,529.97 1453.37,529.9 1458.19,529.82 1463.01,529.72 1467.84,529.73 1472.66,529.72 1477.48,524.95 1482.3,519.92 1487.12,520.52 1491.95,521.9 1496.77,521.69 1501.59,521.51 1506.41,521.58 1511.23,521.61 1516.06,521.32 1520.88,521.58 1525.7,521.43 1530.52,521.26 1535.34,521.56 1540.17,521.42 1544.99,521.31 1549.81,521.24 1554.63,521.38 1559.45,521.23 1564.28,521.38 1569.1,521.33 1573.92,521.18 1578.74,521.24 1583.56,520.8 1588.39,521.11 1593.21,521.07 1598.03,520.79 1602.85,520.77 1607.67,520.97 1612.5,520.66 1617.32,520.72 1622.14,520.8 1626.96,520.65 1631.78,520.8 1636.61,520.76 1641.43,520.42 1646.25,520.6 1651.07,520.34 1655.89,520.66 1660.72,520.64 1665.54,520.65 1670.36,520.28 1675.18,520.33 1680,520.56 1684.83,520.51 1689.65,520.1 1694.47,520.22 1699.29,520 1704.11,520.37 1708.94,520.07 1713.76,520.26 1718.58,522.56 1723.4,522.61 1728.22,522.61 1733.05,522.8" fill="none" stroke="#D6BF57" stroke-opacity="0.35" stroke-width="1" stroke-linejoin="round"/>
<polygon points="1043.5,591.8 1043.5,518.35 1048.32,518.49 1053.14,518.21 1057.97,518.28 1062.79,518.2 1067.61,518.37 1072.43,518.12 1077.25,518.45 1082.08,518.4 1086.9,518.42 1091.72,518.25 1096.54,518.12 1101.36,518.48 1106.19,518.25 1111.01,518.19 1115.83,518.45 1120.65,518.53 1125.47,518.29 1130.3,518.16 1135.12,518.14 1139.94,518.22 1144.76,518.37 1149.58,518.37 1154.41,518.32 1159.23,518.14 1164.05,518.43 1168.87,518.44 1173.69,518.29 1178.52,518.11 1183.34,518.49 1188.16,518.57 1192.98,518.53 1197.8,518.32 1202.63,518.3 1207.45,518.5 1212.27,518.5 1217.09,518.31 1221.91,518.28 1226.74,518.26 1231.56,518.25 1236.38,518.57 1241.2,518.37 1246.02,518.2 1250.85,518.14 1255.67,518.45 1260.49,518.2 1265.31,518.3 1270.13,518.16 1274.96,518.5 1279.78,518.28 1284.6,518.21 1289.42,518.39 1294.24,518.57 1299.07,518.53 1303.89,518.55 1308.71,518.58 1313.53,518.55 1318.35,518.33 1323.18,518.58 1328,518.26 1332.82,518.27 1337.64,518.24 1342.46,518.24 1347.29,518.29 1352.11,518.19 1356.93,518.17 1361.75,518.34 1366.57,518.17 1371.4,518.59 1376.22,518.6 1381.04,518.62 1385.86,518.55 1390.68,518.47 1395.51,518.43 1400.33,518.32 1405.15,518.29 1409.97,518.62 1414.79,518.46 1419.62,518.4 1424.44,518.48 1429.26,518.61 1434.08,518.37 1438.9,518.48 1443.73,518.33 1448.55,518.43 1453.37,518.2 1458.19,518.21 1463.01,518.64 1467.84,518.31 1472.66,518.33 1477.48,518.53 1482.3,518.62 1487.12,518.45 1491.95,518.51 1496.77,518.33 1501.59,518.24 1506.41,518.5 1511.23,518.55 1516.06,518.45 1520.88,518.35 1525.7,518.31 1530.52,518.41 1535.34,518.55 1540.17,518.53 1544.99,518.29 1549.81,518.45 1554.63,518.68 1559.45,515.75 1564.28,517.78 1569.1,517.57 1573.92,517.86 1578.74,517.76 1583.56,517.85 1588.39,517.66 1593.21,517.41 1598.03,517.63 1602.85,517.71 1607.67,517.44 1612.5,517.85 1617.32,517.72 1622.14,517.5 1626.96,517.89 1631.78,517.52 1636.61,517.72 1641.43,517.88 1646.25,517.77 1651.07,517.67 1655.89,517.71 1660.72,517.64 1665.54,517.87 1670.36,517.79 1675.18,517.42 1680,517.68 1684.83,517.66 1689.65,517.85 1694.47,517.76 1699.29,517.43 1704.11,517.56 1708.94,517.65 1713.76,517.87 1718.58,517.7 1723.4,517.51 1728.22,517.68 1733.05,517.6 1733.05,591.8" fill="#AA6556" fill-opacity="0.5"/><polyline points="1043.5,518.35 1048.32,518.49 1053.14,518.21 1057.97,518.28 1062.79,518.2 1067.61,518.37 1072.43,518.12 1077.25,518.45 1082.08,518.4 1086.9,518.42 1091.72,518.25 1096.54,518.12 1101.36,518.48 1106.19,518.25 1111.01,518.19 1115.83,518.45 1120.65,518.53 1125.47,518.29 1130.3,518.16 1135.12,518.14 1139.94,518.22 1144.76,518.37 1149.58,518.37 1154.41,518.32 1159.23,518.14 1164.05,518.43 1168.87,518.44 1173.69,518.29 1178.52,518.11 1183.34,518.49 1188.16,518.57 1192.98,518.53 1197.8,518.32 1202.63,518.3 1207.45,518.5 1212.27,518.5 1217.09,518.31 1221.91,518.28 1226.74,518.26 1231.56,518.25 1236.38,518.57 1241.2,518.37 1246.02,518.2 1250.85,518.14 1255.67,518.45 1260.49,518.2 1265.31,518.3 1270.13,518.16 1274.96,518.5 1279.78,518.28 1284.6,518.21 1289.42,518.39 1294.24,518.57 1299.07,518.53 1303.89,518.55 1308.71,518.58 1313.53,518.55 1318.35,518.33 1323.18,518.58 1328,518.26 1332.82,518.27 1337.64,518.24 1342.46,518.24 1347.29,518.29 1352.11,518.19 1356.93,518.17 1361.75,518.34 1366.57,518.17 1371.4,518.59 1376.22,518.6 1381.04,518.62 1385.86,518.55 1390.68,518.47 1395.51,518.43 1400.33,518.32 1405.15,518.29 1409.97,518.62 1414.79,518.46 1419.62,518.4 1424.44,518.48 1429.26,518.61 1434.08,518.37 1438.9,518.48 1443.73,518.33 1448.55,518.43 1453.37,518.2 1458.19,518.21 1463.01,518.64 1467.84,518.31 1472.66,518.33 1477.48,518.53 1482.3,518.62 1487.12,518.45 1491.95,518.51 1496.77,518.33 1501.59,518.24 1506.41,518.5 1511.23,518.55 1516.06,518.45 1520.88,518.35 1525.7,518.31 1530.52,518.41 1535.34,518.55 1540.17,518.53 1544.99,518.29 1549.81,518.45 1554.63,518.68 1559.45,515.75 1564.28,517.78 1569.1,517.57 1573.92,517.86 1578.74,517.76 1583.56,517.85 1588.39,517.66 1593.21,517.41 1598.03,517.63 1602.85,517.71 1607.67,517.44 1612.5,517.85 1617.32,517.72 1622.14,517.5 1626.96,517.89 1631.78,517.52 1636.61,517.72 1641.43,517.88 1646.25,517.77 1651.07,517.67 1655.89,517.71 1660.72,517.64 1665.54,517.87 1670.36,517.79 1675.18,517.42 1680,517.68 1684.83,517.66 1689.65,517.85 1694.47,517.76 1699.29,517.43 1704.11,517.56 1708.94,517.65 1713.76,517.87 1718.58,517.7 1723.4,517.51 1728.22,517.68 1733.05,517.6" fill="none" stroke="#AA6556" stroke-opacity="0.35" stroke-width="1" stroke-linejoin="round"/>
<polygon points="1043.5,591.8 1043.5,504.63 1048.32,504.35 1053.14,504.36 1057.97,504.41 1062.79,504.43 1067.61,504.37 1072.43,504.62 1077.25,504.4 1082.08,504.68 1086.9,504.55 1091.72,504.36 1096.54,504.41 1101.36,503.86 1106.19,505.54 1111.01,505.73 1115.83,505.78 1120.65,506.15 1125.47,505.8 1130.3,505.99 1135.12,505.72 1139.94,505.86 1144.76,505.63 1149.58,505.74 1154.41,505.64 1159.23,505.93 1164.05,505.74 1168.87,505.68 1173.69,505.62 1178.52,505.93 1183.34,505.61 1188.16,505.59 1192.98,505.71 1197.8,505.52 1202.63,505.54 1207.45,505.82 1212.27,505.81 1217.09,500.06 1221.91,484.4 1226.74,492.43 1231.56,492.73 1236.38,492.59 1241.2,491.77 1246.02,494.51 1250.85,496.49 1255.67,496.91 1260.49,497.07 1265.31,497.05 1270.13,497.25 1274.96,497.15 1279.78,497.09 1284.6,497.22 1289.42,497.2 1294.24,497.68 1299.07,497.63 1303.89,497.45 1308.71,497.32 1313.53,497.59 1318.35,497.29 1323.18,497.33 1328,497.71 1332.82,495.49 1337.64,497.59 1342.46,497.68 1347.29,497.61 1352.11,497.47 1356.93,497.54 1361.75,497.51 1366.57,497.59 1371.4,497.29 1376.22,497.33 1381.04,497.16 1385.86,497.15 1390.68,497.36 1395.51,496.91 1400.33,497.47 1405.15,497.19 1409.97,497.25 1414.79,497.15 1419.62,494.91 1424.44,496.39 1429.26,496.7 1434.08,496.93 1438.9,496.57 1443.73,496.92 1448.55,496.65 1453.37,496.8 1458.19,496.65 1463.01,496.42 1467.84,496.53 1472.66,496.8 1477.48,496.56 1482.3,496.69 1487.12,496.88 1491.95,497.04 1496.77,496.76 1501.59,496.8 1506.41,496.56 1511.23,496.56 1516.06,496.81 1520.88,496.99 1525.7,496.66 1530.52,497.25 1535.34,492.16 1540.17,495.1 1544.99,495.03 1549.81,495.29 1554.63,494.93 1559.45,494.71 1564.28,495 1569.1,494.92 1573.92,495.01 1578.74,494.92 1583.56,494.44 1588.39,494.78 1593.21,494.36 1598.03,494.34 1602.85,494.5 1607.67,494.68 1612.5,494.16 1617.32,494.43 1622.14,494.44 1626.96,494.46 1631.78,493.98 1636.61,494.26 1641.43,494.35 1646.25,494.18 1651.07,494.36 1655.89,494 1660.72,494.07 1665.54,494.12 1670.36,493.76 1675.18,493.68 1680,494.17 1684.83,488.65 1689.65,494 1694.47,493.57 1699.29,493.67 1704.11,494.02 1708.94,494 1713.76,494.07 1718.58,493.53 1723.4,493.98 1728.22,493.78 1733.05,493.87 1733.05,591.8" fill="#DA8B45" fill-opacity="0.5"/><polyline points="1043.5,504.63 1048.32,504.35 1053.14,504.36 1057.97,504.41 1062.79,504.43 1067.61,504.37 1072.43,504.62 1077.25,504.4 1082.08,504.68 1086.9,504.55 1091.72,504.36 1096.54,504.41 1101.36,503.86 1106.19,505.54 1111.01,505.73 1115.83,505.78 1120.65,506.15 1125.47,505.8 1130.3,505.99 1135.12,505.72 1139.94,505.86 1144.76,505.63 1149.58,505.74 1154.41,505.64 1159.23,505.93 1164.05,505.74 1168.87,505.68 1173.69,505.62 1178.52,505.93 1183.34,505.61 1188.16,505.59 1192.98,505.71 1197.8,505.52 1202.63,505.54 1207.45,505.82 1212.27,505.81 1217.09,500.06 1221.91,484.4 1226.74,492.43 1231.56,492.73 1236.38,492.59 1241.2,491.77 1246.02,494.51 1250.85,496.49 1255.67,496.91 1260.49,497.07 1265.31,497.05 1270.13,497.25 1274.96,497.15 1279.78,497.09 1284.6,497.22 1289.42,497.2 1294.24,497.68 1299.07,497.63 1303.89,497.45 1308.71,497.32 1313.53,497.59 1318.35,497.29 1323.18,497.33 1328,497.71 1332.82,495.49 1337.64,497.59 1342.46,497.68 1347.29,497.61 1352.11,497.47 1356.93,497.54 1361.75,497.51 1366.57,497.59 1371.4,497.29 1376.22,497.33 1381.04,497.16 1385.86,497.15 1390.68,497.36 1395.51,496.91 1400.33,497.47 1405.15,497.19 1409.97,497.25 1414.79,497.15 1419.62,494.91 1424.44,496.39 1429.26,496.7 1434.08,496.93 1438.9,496.57 1443.73,496.92 1448.55,496.65 1453.37,496.8 1458.19,496.65 1463.01,496.42 1467.84,496.53 1472.66,496.8 1477.48,496.56 1482.3,496.69 1487.12,496.88 1491.95,497.04 1496.77,496.76 1501.59,496.8 1506.41,496.56 1511.23,496.56 1516.06,496.81 1520.88,496.99 1525.7,496.66 1530.52,497.25 1535.34,492.16 1540.17,495.1 1544.99,495.03 1549.81,495.29 1554.63,494.93 1559.45,494.71 1564.28,495 1569.1,494.92 1573.92,495.01 1578.74,494.92 1583.56,494.44 1588.39,494.78 1593.21,494.36 1598.03,494.34 1602.85,494.5 1607.67,494.68 1612.5,494.16 1617.32,494.43 1622.14,494.44 1626.96,494.46 1631.78,493.98 1636.61,494.26 1641.43,494.35 1646.25,494.18 1651.07,494.36 1655.89,494 1660.72,494.07 1665.54,494.12 1670.36,493.76 1675.18,493.68 1680,494.17 1684.83,488.65 1689.65,494 1694.47,493.57 1699.29,493.67 1704.11,494.02 1708.94,494 1713.76,494.07 1718.58,493.53 1723.4,493.98 1728.22,493.78 1733.05,493.87" fill="none" stroke="#DA8B45" stroke-opacity="0.6" stroke-width="1" stroke-linejoin="round"/>
<g fill="#438f7a" fill-opacity="0.95"><circle cx="1043.5" cy="498.13" r="1.1"/><circle cx="1048.32" cy="501.39" r="1.1"/><circle cx="1053.14" cy="501.73" r="1.1"/><circle cx="1057.97" cy="502.57" r="1.1"/><circle cx="1062.79" cy="502.59" r="1.1"/><circle cx="1067.61" cy="503.69" r="1.1"/><circle cx="1072.43" cy="503.54" r="1.1"/><circle cx="1077.25" cy="500.92" r="1.1"/><circle cx="1082.08" cy="499.65" r="1.1"/><circle cx="1086.9" cy="501.93" r="1.1"/><circle cx="1091.72" cy="502.78" r="1.1"/><circle cx="1096.54" cy="504.46" r="1.1"/><circle cx="1101.36" cy="501.95" r="1.1"/><circle cx="1106.19" cy="505.93" r="1.1"/><circle cx="1111.01" cy="506.31" r="1.1"/><circle cx="1115.83" cy="506.18" r="1.1"/><circle cx="1120.65" cy="506.06" r="1.1"/><circle cx="1125.47" cy="505.78" r="1.1"/><circle cx="1130.3" cy="505.81" r="1.1"/><circle cx="1135.12" cy="506.05" r="1.1"/><circle cx="1139.94" cy="506.41" r="1.1"/><circle cx="1144.76" cy="505.93" r="1.1"/><circle cx="1149.58" cy="506.17" r="1.1"/><circle cx="1154.41" cy="506.08" r="1.1"/><circle cx="1159.23" cy="506.01" r="1.1"/><circle cx="1164.05" cy="506.08" r="1.1"/><circle cx="1168.87" cy="506.19" r="1.1"/><circle cx="1173.69" cy="505.92" r="1.1"/><circle cx="1178.52" cy="506.28" r="1.1"/><circle cx="1183.34" cy="506.29" r="1.1"/><circle cx="1188.16" cy="506" r="1.1"/><circle cx="1192.98" cy="506.44" r="1.1"/><circle cx="1197.8" cy="506.39" r="1.1"/><circle cx="1202.63" cy="506.06" r="1.1"/><circle cx="1207.45" cy="506.57" r="1.1"/><circle cx="1212.27" cy="506.08" r="1.1"/><circle cx="1217.09" cy="506.19" r="1.1"/><circle cx="1221.91" cy="505.23" r="1.1"/><circle cx="1226.74" cy="505.22" r="1.1"/><circle cx="1231.56" cy="504.81" r="1.1"/><circle cx="1236.38" cy="504.63" r="1.1"/><circle cx="1241.2" cy="505.03" r="1.1"/><circle cx="1246.02" cy="504.71" r="1.1"/><circle cx="1250.85" cy="506.77" r="1.1"/><circle cx="1255.67" cy="506.87" r="1.1"/><circle cx="1260.49" cy="507.04" r="1.1"/><circle cx="1265.31" cy="507.22" r="1.1"/><circle cx="1270.13" cy="507.01" r="1.1"/><circle cx="1274.96" cy="506.92" r="1.1"/><circle cx="1279.78" cy="507.47" r="1.1"/><circle cx="1284.6" cy="507.43" r="1.1"/><circle cx="1289.42" cy="507.11" r="1.1"/><circle cx="1294.24" cy="507.2" r="1.1"/><circle cx="1299.07" cy="507.34" r="1.1"/><circle cx="1303.89" cy="507.76" r="1.1"/><circle cx="1308.71" cy="507.31" r="1.1"/><circle cx="1313.53" cy="507.14" r="1.1"/><circle cx="1318.35" cy="507.13" r="1.1"/><circle cx="1323.18" cy="507.32" r="1.1"/><circle cx="1328" cy="507.74" r="1.1"/><circle cx="1332.82" cy="507.23" r="1.1"/><circle cx="1337.64" cy="507.63" r="1.1"/><circle cx="1342.46" cy="507.36" r="1.1"/><circle cx="1347.29" cy="507.16" r="1.1"/><circle cx="1352.11" cy="507.31" r="1.1"/><circle cx="1356.93" cy="507.69" r="1.1"/><circle cx="1361.75" cy="507.58" r="1.1"/><circle cx="1366.57" cy="507.18" r="1.1"/><circle cx="1371.4" cy="507.68" r="1.1"/><circle cx="1376.22" cy="507.38" r="1.1"/><circle cx="1381.04" cy="507.51" r="1.1"/><circle cx="1385.86" cy="507.67" r="1.1"/><circle cx="1390.68" cy="507.37" r="1.1"/><circle cx="1395.51" cy="507.75" r="1.1"/><circle cx="1400.33" cy="507.7" r="1.1"/><circle cx="1405.15" cy="507.53" r="1.1"/><circle cx="1409.97" cy="507.73" r="1.1"/><circle cx="1414.79" cy="507.74" r="1.1"/><circle cx="1419.62" cy="507.4" r="1.1"/><circle cx="1424.44" cy="507.29" r="1.1"/><circle cx="1429.26" cy="507.21" r="1.1"/><circle cx="1434.08" cy="507.69" r="1.1"/><circle cx="1438.9" cy="507.49" r="1.1"/><circle cx="1443.73" cy="507.57" r="1.1"/><circle cx="1448.55" cy="507.39" r="1.1"/><circle cx="1453.37" cy="507.46" r="1.1"/><circle cx="1458.19" cy="507.17" r="1.1"/><circle cx="1463.01" cy="507.53" r="1.1"/><circle cx="1467.84" cy="507.74" r="1.1"/><circle cx="1472.66" cy="507.32" r="1.1"/><circle cx="1477.48" cy="507.68" r="1.1"/><circle cx="1482.3" cy="507.37" r="1.1"/><circle cx="1487.12" cy="507.45" r="1.1"/><circle cx="1491.95" cy="507.18" r="1.1"/><circle cx="1496.77" cy="507.41" r="1.1"/><circle cx="1501.59" cy="506.56" r="1.1"/><circle cx="1506.41" cy="506.79" r="1.1"/><circle cx="1511.23" cy="506.61" r="1.1"/><circle cx="1516.06" cy="506.8" r="1.1"/><circle cx="1520.88" cy="506.48" r="1.1"/><circle cx="1525.7" cy="506.63" r="1.1"/><circle cx="1530.52" cy="506.88" r="1.1"/><circle cx="1535.34" cy="506.81" r="1.1"/><circle cx="1540.17" cy="506.72" r="1.1"/><circle cx="1544.99" cy="506.49" r="1.1"/><circle cx="1549.81" cy="506.85" r="1.1"/><circle cx="1554.63" cy="506.5" r="1.1"/><circle cx="1559.45" cy="506.54" r="1.1"/><circle cx="1564.28" cy="506.91" r="1.1"/><circle cx="1569.1" cy="506.53" r="1.1"/><circle cx="1573.92" cy="506.91" r="1.1"/><circle cx="1578.74" cy="506.88" r="1.1"/><circle cx="1583.56" cy="506.58" r="1.1"/><circle cx="1588.39" cy="506.81" r="1.1"/><circle cx="1593.21" cy="506.4" r="1.1"/><circle cx="1598.03" cy="506.65" r="1.1"/><circle cx="1602.85" cy="506.76" r="1.1"/><circle cx="1607.67" cy="506.45" r="1.1"/><circle cx="1612.5" cy="506.95" r="1.1"/><circle cx="1617.32" cy="506.49" r="1.1"/><circle cx="1622.14" cy="506.93" r="1.1"/><circle cx="1626.96" cy="506.87" r="1.1"/><circle cx="1631.78" cy="506.35" r="1.1"/><circle cx="1636.61" cy="506.52" r="1.1"/><circle cx="1641.43" cy="506.82" r="1.1"/><circle cx="1646.25" cy="506.89" r="1.1"/><circle cx="1651.07" cy="506.33" r="1.1"/><circle cx="1655.89" cy="506.53" r="1.1"/><circle cx="1660.72" cy="506.43" r="1.1"/><circle cx="1665.54" cy="506.87" r="1.1"/><circle cx="1670.36" cy="506.56" r="1.1"/><circle cx="1675.18" cy="506.73" r="1.1"/><circle cx="1680" cy="506.81" r="1.1"/><circle cx="1684.83" cy="503.19" r="1.1"/><circle cx="1689.65" cy="505.92" r="1.1"/><circle cx="1694.47" cy="506.16" r="1.1"/><circle cx="1699.29" cy="506.21" r="1.1"/><circle cx="1704.11" cy="506.44" r="1.1"/><circle cx="1708.94" cy="506.07" r="1.1"/><circle cx="1713.76" cy="506.26" r="1.1"/><circle cx="1718.58" cy="506.23" r="1.1"/><circle cx="1723.4" cy="506.54" r="1.1"/><circle cx="1728.22" cy="506.34" r="1.1"/><circle cx="1733.05" cy="506.63" r="1.1"/></g>
<g fill="#4c7499" fill-opacity="0.95"><circle cx="1043.5" cy="513.33" r="1.1"/><circle cx="1048.32" cy="513.34" r="1.1"/><circle cx="1053.14" cy="513.56" r="1.1"/><circle cx="1057.97" cy="513.3" r="1.1"/><circle cx="1062.79" cy="513.51" r="1.1"/><circle cx="1067.61" cy="513.63" r="1.1"/><circle cx="1072.43" cy="513.66" r="1.1"/><circle cx="1077.25" cy="513.62" r="1.1"/><circle cx="1082.08" cy="513.57" r="1.1"/><circle cx="1086.9" cy="513.38" r="1.1"/><circle cx="1091.72" cy="513.57" r="1.1"/><circle cx="1096.54" cy="513.68" r="1.1"/><circle cx="1101.36" cy="513.34" r="1.1"/><circle cx="1106.19" cy="513.44" r="1.1"/><circle cx="1111.01" cy="513.7" r="1.1"/><circle cx="1115.83" cy="513.69" r="1.1"/><circle cx="1120.65" cy="513.66" r="1.1"/><circle cx="1125.47" cy="513.55" r="1.1"/><circle cx="1130.3" cy="513.31" r="1.1"/><circle cx="1135.12" cy="513.27" r="1.1"/><circle cx="1139.94" cy="513.43" r="1.1"/><circle cx="1144.76" cy="513.62" r="1.1"/><circle cx="1149.58" cy="513.52" r="1.1"/><circle cx="1154.41" cy="513.56" r="1.1"/><circle cx="1159.23" cy="513.58" r="1.1"/><circle cx="1164.05" cy="513.73" r="1.1"/><circle cx="1168.87" cy="513.46" r="1.1"/><circle cx="1173.69" cy="513.34" r="1.1"/><circle cx="1178.52" cy="513.39" r="1.1"/><circle cx="1183.34" cy="513.7" r="1.1"/><circle cx="1188.16" cy="513.49" r="1.1"/><circle cx="1192.98" cy="513.67" r="1.1"/><circle cx="1197.8" cy="513.41" r="1.1"/><circle cx="1202.63" cy="513.54" r="1.1"/><circle cx="1207.45" cy="513.3" r="1.1"/><circle cx="1212.27" cy="513.38" r="1.1"/><circle cx="1217.09" cy="513.71" r="1.1"/><circle cx="1221.91" cy="513.61" r="1.1"/><circle cx="1226.74" cy="513.32" r="1.1"/><circle cx="1231.56" cy="513.55" r="1.1"/><circle cx="1236.38" cy="513.56" r="1.1"/><circle cx="1241.2" cy="513.56" r="1.1"/><circle cx="1246.02" cy="513.41" r="1.1"/><circle cx="1250.85" cy="513.33" r="1.1"/><circle cx="1255.67" cy="513.52" r="1.1"/><circle cx="1260.49" cy="513.31" r="1.1"/><circle cx="1265.31" cy="513.5" r="1.1"/><circle cx="1270.13" cy="513.74" r="1.1"/><circle cx="1274.96" cy="513.4" r="1.1"/><circle cx="1279.78" cy="513.59" r="1.1"/><circle cx="1284.6" cy="513.77" r="1.1"/><circle cx="1289.42" cy="513.32" r="1.1"/><circle cx="1294.24" cy="513.79" r="1.1"/><circle cx="1299.07" cy="513.52" r="1.1"/><circle cx="1303.89" cy="513.57" r="1.1"/><circle cx="1308.71" cy="513.38" r="1.1"/><circle cx="1313.53" cy="513.62" r="1.1"/><circle cx="1318.35" cy="513.71" r="1.1"/><circle cx="1323.18" cy="513.68" r="1.1"/><circle cx="1328" cy="513.72" r="1.1"/><circle cx="1332.82" cy="513.55" r="1.1"/><circle cx="1337.64" cy="513.65" r="1.1"/><circle cx="1342.46" cy="513.46" r="1.1"/><circle cx="1347.29" cy="513.71" r="1.1"/><circle cx="1352.11" cy="513.66" r="1.1"/><circle cx="1356.93" cy="513.71" r="1.1"/><circle cx="1361.75" cy="513.36" r="1.1"/><circle cx="1366.57" cy="513.43" r="1.1"/><circle cx="1371.4" cy="513.42" r="1.1"/><circle cx="1376.22" cy="513.54" r="1.1"/><circle cx="1381.04" cy="513.65" r="1.1"/><circle cx="1385.86" cy="513.77" r="1.1"/><circle cx="1390.68" cy="513.44" r="1.1"/><circle cx="1395.51" cy="513.61" r="1.1"/><circle cx="1400.33" cy="513.83" r="1.1"/><circle cx="1405.15" cy="513.77" r="1.1"/><circle cx="1409.97" cy="513.81" r="1.1"/><circle cx="1414.79" cy="513.51" r="1.1"/><circle cx="1419.62" cy="513.42" r="1.1"/><circle cx="1424.44" cy="513.77" r="1.1"/><circle cx="1429.26" cy="513.48" r="1.1"/><circle cx="1434.08" cy="513.71" r="1.1"/><circle cx="1438.9" cy="513.54" r="1.1"/><circle cx="1443.73" cy="513.45" r="1.1"/><circle cx="1448.55" cy="513.57" r="1.1"/><circle cx="1453.37" cy="513.49" r="1.1"/><circle cx="1458.19" cy="513.7" r="1.1"/><circle cx="1463.01" cy="513.88" r="1.1"/><circle cx="1467.84" cy="513.63" r="1.1"/><circle cx="1472.66" cy="513.6" r="1.1"/><circle cx="1477.48" cy="513.8" r="1.1"/><circle cx="1482.3" cy="513.7" r="1.1"/><circle cx="1487.12" cy="513.74" r="1.1"/><circle cx="1491.95" cy="513.88" r="1.1"/><circle cx="1496.77" cy="513.74" r="1.1"/><circle cx="1501.59" cy="513.71" r="1.1"/><circle cx="1506.41" cy="513.67" r="1.1"/><circle cx="1511.23" cy="513.56" r="1.1"/><circle cx="1516.06" cy="513.71" r="1.1"/><circle cx="1520.88" cy="513.43" r="1.1"/><circle cx="1525.7" cy="513.51" r="1.1"/><circle cx="1530.52" cy="513.46" r="1.1"/><circle cx="1535.34" cy="513.58" r="1.1"/><circle cx="1540.17" cy="513.59" r="1.1"/><circle cx="1544.99" cy="513.66" r="1.1"/><circle cx="1549.81" cy="513.53" r="1.1"/><circle cx="1554.63" cy="513.75" r="1.1"/><circle cx="1559.45" cy="513.64" r="1.1"/><circle cx="1564.28" cy="513.6" r="1.1"/><circle cx="1569.1" cy="513.68" r="1.1"/><circle cx="1573.92" cy="513.79" r="1.1"/><circle cx="1578.74" cy="513.9" r="1.1"/><circle cx="1583.56" cy="513.89" r="1.1"/><circle cx="1588.39" cy="513.77" r="1.1"/><circle cx="1593.21" cy="513.66" r="1.1"/><circle cx="1598.03" cy="513.57" r="1.1"/><circle cx="1602.85" cy="513.6" r="1.1"/><circle cx="1607.67" cy="513.8" r="1.1"/><circle cx="1612.5" cy="513.5" r="1.1"/><circle cx="1617.32" cy="513.82" r="1.1"/><circle cx="1622.14" cy="513.61" r="1.1"/><circle cx="1626.96" cy="513.92" r="1.1"/><circle cx="1631.78" cy="513.59" r="1.1"/><circle cx="1636.61" cy="513.64" r="1.1"/><circle cx="1641.43" cy="513.5" r="1.1"/><circle cx="1646.25" cy="513.53" r="1.1"/><circle cx="1651.07" cy="513.63" r="1.1"/><circle cx="1655.89" cy="513.56" r="1.1"/><circle cx="1660.72" cy="513.61" r="1.1"/><circle cx="1665.54" cy="513.68" r="1.1"/><circle cx="1670.36" cy="513.88" r="1.1"/><circle cx="1675.18" cy="513.73" r="1.1"/><circle cx="1680" cy="513.55" r="1.1"/><circle cx="1684.83" cy="513.87" r="1.1"/><circle cx="1689.65" cy="513.51" r="1.1"/><circle cx="1694.47" cy="513.72" r="1.1"/><circle cx="1699.29" cy="513.8" r="1.1"/><circle cx="1704.11" cy="513.99" r="1.1"/><circle cx="1708.94" cy="513.81" r="1.1"/><circle cx="1713.76" cy="513.91" r="1.1"/><circle cx="1718.58" cy="513.68" r="1.1"/><circle cx="1723.4" cy="513.57" r="1.1"/><circle cx="1728.22" cy="513.56" r="1.1"/><circle cx="1733.05" cy="513.71" r="1.1"/></g>
<g fill="#94866c" fill-opacity="0.95"><circle cx="1043.5" cy="396.61" r="1.1"/><circle cx="1048.32" cy="406.63" r="1.1"/><circle cx="1053.14" cy="416.71" r="1.1"/><circle cx="1057.97" cy="416.59" r="1.1"/><circle cx="1062.79" cy="416.75" r="1.1"/><circle cx="1067.61" cy="416.61" r="1.1"/><circle cx="1072.43" cy="417.33" r="1.1"/><circle cx="1077.25" cy="416.98" r="1.1"/><circle cx="1082.08" cy="416.59" r="1.1"/><circle cx="1086.9" cy="388.49" r="1.1"/><circle cx="1091.72" cy="386.67" r="1.1"/><circle cx="1096.54" cy="383.75" r="1.1"/><circle cx="1101.36" cy="402.4" r="1.1"/><circle cx="1106.19" cy="421.52" r="1.1"/><circle cx="1111.01" cy="421.77" r="1.1"/><circle cx="1115.83" cy="422.23" r="1.1"/><circle cx="1120.65" cy="418.15" r="1.1"/><circle cx="1125.47" cy="419.61" r="1.1"/><circle cx="1130.3" cy="419.45" r="1.1"/><circle cx="1135.12" cy="418.84" r="1.1"/><circle cx="1139.94" cy="418.86" r="1.1"/><circle cx="1144.76" cy="419.25" r="1.1"/><circle cx="1149.58" cy="418.63" r="1.1"/><circle cx="1154.41" cy="419.06" r="1.1"/><circle cx="1159.23" cy="418.57" r="1.1"/><circle cx="1164.05" cy="418.87" r="1.1"/><circle cx="1168.87" cy="416.54" r="1.1"/><circle cx="1173.69" cy="418.27" r="1.1"/><circle cx="1178.52" cy="419.21" r="1.1"/><circle cx="1183.34" cy="419.61" r="1.1"/><circle cx="1188.16" cy="414.94" r="1.1"/><circle cx="1192.98" cy="414.22" r="1.1"/><circle cx="1197.8" cy="413.88" r="1.1"/><circle cx="1202.63" cy="413.34" r="1.1"/><circle cx="1207.45" cy="413.68" r="1.1"/><circle cx="1212.27" cy="413.57" r="1.1"/><circle cx="1217.09" cy="413.95" r="1.1"/><circle cx="1221.91" cy="413.35" r="1.1"/><circle cx="1226.74" cy="414.37" r="1.1"/><circle cx="1231.56" cy="414.14" r="1.1"/><circle cx="1236.38" cy="407.72" r="1.1"/><circle cx="1241.2" cy="408.21" r="1.1"/><circle cx="1246.02" cy="408.16" r="1.1"/><circle cx="1250.85" cy="408.31" r="1.1"/><circle cx="1255.67" cy="408.33" r="1.1"/><circle cx="1260.49" cy="408.4" r="1.1"/><circle cx="1265.31" cy="408.2" r="1.1"/><circle cx="1270.13" cy="406.34" r="1.1"/><circle cx="1274.96" cy="406.62" r="1.1"/><circle cx="1279.78" cy="405.88" r="1.1"/><circle cx="1284.6" cy="405.95" r="1.1"/><circle cx="1289.42" cy="405.77" r="1.1"/><circle cx="1294.24" cy="403.74" r="1.1"/><circle cx="1299.07" cy="408.87" r="1.1"/><circle cx="1303.89" cy="409" r="1.1"/><circle cx="1308.71" cy="408.87" r="1.1"/><circle cx="1313.53" cy="408.69" r="1.1"/><circle cx="1318.35" cy="409.21" r="1.1"/><circle cx="1323.18" cy="408.47" r="1.1"/><circle cx="1328" cy="409.24" r="1.1"/><circle cx="1332.82" cy="408.65" r="1.1"/><circle cx="1337.64" cy="408.57" r="1.1"/><circle cx="1342.46" cy="409.24" r="1.1"/><circle cx="1347.29" cy="411.86" r="1.1"/><circle cx="1352.11" cy="412.2" r="1.1"/><circle cx="1356.93" cy="410.81" r="1.1"/><circle cx="1361.75" cy="410.06" r="1.1"/><circle cx="1366.57" cy="411.65" r="1.1"/><circle cx="1371.4" cy="411.54" r="1.1"/><circle cx="1376.22" cy="410.91" r="1.1"/><circle cx="1381.04" cy="411.53" r="1.1"/><circle cx="1385.86" cy="411.07" r="1.1"/><circle cx="1390.68" cy="410.93" r="1.1"/><circle cx="1395.51" cy="410.92" r="1.1"/><circle cx="1400.33" cy="411.41" r="1.1"/><circle cx="1405.15" cy="411.4" r="1.1"/><circle cx="1409.97" cy="411.26" r="1.1"/><circle cx="1414.79" cy="411.06" r="1.1"/><circle cx="1419.62" cy="411.6" r="1.1"/><circle cx="1424.44" cy="411.08" r="1.1"/><circle cx="1429.26" cy="411.04" r="1.1"/><circle cx="1434.08" cy="410.99" r="1.1"/><circle cx="1438.9" cy="411.66" r="1.1"/><circle cx="1443.73" cy="410.92" r="1.1"/><circle cx="1448.55" cy="411.61" r="1.1"/><circle cx="1453.37" cy="411.41" r="1.1"/><circle cx="1458.19" cy="411.19" r="1.1"/><circle cx="1463.01" cy="410.94" r="1.1"/><circle cx="1467.84" cy="411.41" r="1.1"/><circle cx="1472.66" cy="410.94" r="1.1"/><circle cx="1477.48" cy="411.24" r="1.1"/><circle cx="1482.3" cy="411.43" r="1.1"/><circle cx="1487.12" cy="411.43" r="1.1"/><circle cx="1491.95" cy="409.11" r="1.1"/><circle cx="1496.77" cy="411.62" r="1.1"/><circle cx="1501.59" cy="411.57" r="1.1"/><circle cx="1506.41" cy="411.13" r="1.1"/><circle cx="1511.23" cy="410.88" r="1.1"/><circle cx="1516.06" cy="411.56" r="1.1"/><circle cx="1520.88" cy="411.65" r="1.1"/><circle cx="1525.7" cy="410.89" r="1.1"/><circle cx="1530.52" cy="411.25" r="1.1"/><circle cx="1535.34" cy="408.93" r="1.1"/><circle cx="1540.17" cy="411.49" r="1.1"/><circle cx="1544.99" cy="411.21" r="1.1"/><circle cx="1549.81" cy="411.02" r="1.1"/><circle cx="1554.63" cy="411.32" r="1.1"/><circle cx="1559.45" cy="411.34" r="1.1"/><circle cx="1564.28" cy="411.64" r="1.1"/><circle cx="1569.1" cy="410.94" r="1.1"/><circle cx="1573.92" cy="411.66" r="1.1"/><circle cx="1578.74" cy="411.29" r="1.1"/><circle cx="1583.56" cy="411.01" r="1.1"/><circle cx="1588.39" cy="411.58" r="1.1"/><circle cx="1593.21" cy="411.09" r="1.1"/><circle cx="1598.03" cy="410.92" r="1.1"/><circle cx="1602.85" cy="411.18" r="1.1"/><circle cx="1607.67" cy="411.05" r="1.1"/><circle cx="1612.5" cy="411.6" r="1.1"/><circle cx="1617.32" cy="411.33" r="1.1"/><circle cx="1622.14" cy="411.57" r="1.1"/><circle cx="1626.96" cy="411" r="1.1"/><circle cx="1631.78" cy="411.45" r="1.1"/><circle cx="1636.61" cy="411.32" r="1.1"/><circle cx="1641.43" cy="410.88" r="1.1"/><circle cx="1646.25" cy="411" r="1.1"/><circle cx="1651.07" cy="410.9" r="1.1"/><circle cx="1655.89" cy="411.32" r="1.1"/><circle cx="1660.72" cy="411.29" r="1.1"/><circle cx="1665.54" cy="411.1" r="1.1"/><circle cx="1670.36" cy="411.3" r="1.1"/><circle cx="1675.18" cy="411.45" r="1.1"/><circle cx="1680" cy="411.36" r="1.1"/><circle cx="1684.83" cy="411.57" r="1.1"/><circle cx="1689.65" cy="411.38" r="1.1"/><circle cx="1694.47" cy="410.89" r="1.1"/><circle cx="1699.29" cy="410.91" r="1.1"/><circle cx="1704.11" cy="411.18" r="1.1"/><circle cx="1708.94" cy="410.47" r="1.1"/><circle cx="1713.76" cy="409.79" r="1.1"/><circle cx="1718.58" cy="410" r="1.1"/><circle cx="1723.4" cy="409.85" r="1.1"/><circle cx="1728.22" cy="409.43" r="1.1"/><circle cx="1733.05" cy="409.37" r="1.1"/></g>
<g fill="#745993" fill-opacity="0.95"><circle cx="1043.5" cy="532.97" r="1.1"/><circle cx="1048.32" cy="532.73" r="1.1"/><circle cx="1053.14" cy="531.3" r="1.1"/><circle cx="1057.97" cy="529.06" r="1.1"/><circle cx="1062.79" cy="529.83" r="1.1"/><circle cx="1067.61" cy="528.87" r="1.1"/><circle cx="1072.43" cy="526.25" r="1.1"/><circle cx="1077.25" cy="527.29" r="1.1"/><circle cx="1082.08" cy="518.75" r="1.1"/><circle cx="1086.9" cy="507.99" r="1.1"/><circle cx="1091.72" cy="506.69" r="1.1"/><circle cx="1096.54" cy="531.02" r="1.1"/><circle cx="1101.36" cy="532.05" r="1.1"/><circle cx="1106.19" cy="532.4" r="1.1"/><circle cx="1111.01" cy="532.09" r="1.1"/><circle cx="1115.83" cy="532.32" r="1.1"/><circle cx="1120.65" cy="532.3" r="1.1"/><circle cx="1125.47" cy="532.44" r="1.1"/><circle cx="1130.3" cy="532.07" r="1.1"/><circle cx="1135.12" cy="532.18" r="1.1"/><circle cx="1139.94" cy="531.99" r="1.1"/><circle cx="1144.76" cy="532.19" r="1.1"/><circle cx="1149.58" cy="532.34" r="1.1"/><circle cx="1154.41" cy="532.31" r="1.1"/><circle cx="1159.23" cy="532.28" r="1.1"/><circle cx="1164.05" cy="531.94" r="1.1"/><circle cx="1168.87" cy="532.3" r="1.1"/><circle cx="1173.69" cy="532.35" r="1.1"/><circle cx="1178.52" cy="532.22" r="1.1"/><circle cx="1183.34" cy="532.34" r="1.1"/><circle cx="1188.16" cy="532.17" r="1.1"/><circle cx="1192.98" cy="532.07" r="1.1"/><circle cx="1197.8" cy="532.05" r="1.1"/><circle cx="1202.63" cy="532.28" r="1.1"/><circle cx="1207.45" cy="532.29" r="1.1"/><circle cx="1212.27" cy="532.12" r="1.1"/><circle cx="1217.09" cy="532.02" r="1.1"/><circle cx="1221.91" cy="532.13" r="1.1"/><circle cx="1226.74" cy="532.06" r="1.1"/><circle cx="1231.56" cy="531.89" r="1.1"/><circle cx="1236.38" cy="532.26" r="1.1"/><circle cx="1241.2" cy="532.2" r="1.1"/><circle cx="1246.02" cy="532.08" r="1.1"/><circle cx="1250.85" cy="532.06" r="1.1"/><circle cx="1255.67" cy="531.87" r="1.1"/><circle cx="1260.49" cy="532.04" r="1.1"/><circle cx="1265.31" cy="531.98" r="1.1"/><circle cx="1270.13" cy="532.09" r="1.1"/><circle cx="1274.96" cy="531.91" r="1.1"/><circle cx="1279.78" cy="531.88" r="1.1"/><circle cx="1284.6" cy="532.14" r="1.1"/><circle cx="1289.42" cy="532.23" r="1.1"/><circle cx="1294.24" cy="532.15" r="1.1"/><circle cx="1299.07" cy="532.09" r="1.1"/><circle cx="1303.89" cy="531.83" r="1.1"/><circle cx="1308.71" cy="532.13" r="1.1"/><circle cx="1313.53" cy="531.95" r="1.1"/><circle cx="1318.35" cy="531.94" r="1.1"/><circle cx="1323.18" cy="531.78" r="1.1"/><circle cx="1328" cy="532.18" r="1.1"/><circle cx="1332.82" cy="531.86" r="1.1"/><circle cx="1337.64" cy="532.07" r="1.1"/><circle cx="1342.46" cy="532.18" r="1.1"/><circle cx="1347.29" cy="531.91" r="1.1"/><circle cx="1352.11" cy="531.81" r="1.1"/><circle cx="1356.93" cy="531.93" r="1.1"/><circle cx="1361.75" cy="532.18" r="1.1"/><circle cx="1366.57" cy="531.73" r="1.1"/><circle cx="1371.4" cy="532.01" r="1.1"/><circle cx="1376.22" cy="531.88" r="1.1"/><circle cx="1381.04" cy="531.84" r="1.1"/><circle cx="1385.86" cy="532.06" r="1.1"/><circle cx="1390.68" cy="531.98" r="1.1"/><circle cx="1395.51" cy="532.01" r="1.1"/><circle cx="1400.33" cy="532.12" r="1.1"/><circle cx="1405.15" cy="532.13" r="1.1"/><circle cx="1409.97" cy="531.81" r="1.1"/><circle cx="1414.79" cy="531.95" r="1.1"/><circle cx="1419.62" cy="531.73" r="1.1"/><circle cx="1424.44" cy="532.11" r="1.1"/><circle cx="1429.26" cy="531.99" r="1.1"/><circle cx="1434.08" cy="531.08" r="1.1"/><circle cx="1438.9" cy="530.7" r="1.1"/><circle cx="1443.73" cy="530.77" r="1.1"/><circle cx="1448.55" cy="530.71" r="1.1"/><circle cx="1453.37" cy="530.89" r="1.1"/><circle cx="1458.19" cy="531.08" r="1.1"/><circle cx="1463.01" cy="530.92" r="1.1"/><circle cx="1467.84" cy="531" r="1.1"/><circle cx="1472.66" cy="531.09" r="1.1"/><circle cx="1477.48" cy="530.82" r="1.1"/><circle cx="1482.3" cy="530.95" r="1.1"/><circle cx="1487.12" cy="531.03" r="1.1"/><circle cx="1491.95" cy="530.82" r="1.1"/><circle cx="1496.77" cy="530.61" r="1.1"/><circle cx="1501.59" cy="530.6" r="1.1"/><circle cx="1506.41" cy="530.82" r="1.1"/><circle cx="1511.23" cy="530.99" r="1.1"/><circle cx="1516.06" cy="530.66" r="1.1"/><circle cx="1520.88" cy="530.97" r="1.1"/><circle cx="1525.7" cy="530.75" r="1.1"/><circle cx="1530.52" cy="530.97" r="1.1"/><circle cx="1535.34" cy="528.1" r="1.1"/><circle cx="1540.17" cy="526.05" r="1.1"/><circle cx="1544.99" cy="523.83" r="1.1"/><circle cx="1549.81" cy="522.62" r="1.1"/><circle cx="1554.63" cy="523.06" r="1.1"/><circle cx="1559.45" cy="523.44" r="1.1"/><circle cx="1564.28" cy="524.29" r="1.1"/><circle cx="1569.1" cy="524.98" r="1.1"/><circle cx="1573.92" cy="525.41" r="1.1"/><circle cx="1578.74" cy="525.25" r="1.1"/><circle cx="1583.56" cy="525.54" r="1.1"/><circle cx="1588.39" cy="525.44" r="1.1"/><circle cx="1593.21" cy="525.34" r="1.1"/><circle cx="1598.03" cy="525.65" r="1.1"/><circle cx="1602.85" cy="525.45" r="1.1"/><circle cx="1607.67" cy="525.61" r="1.1"/><circle cx="1612.5" cy="525.83" r="1.1"/><circle cx="1617.32" cy="525.9" r="1.1"/><circle cx="1622.14" cy="525.5" r="1.1"/><circle cx="1626.96" cy="525.76" r="1.1"/><circle cx="1631.78" cy="525.8" r="1.1"/><circle cx="1636.61" cy="525.6" r="1.1"/><circle cx="1641.43" cy="525.8" r="1.1"/><circle cx="1646.25" cy="525.86" r="1.1"/><circle cx="1651.07" cy="526" r="1.1"/><circle cx="1655.89" cy="525.8" r="1.1"/><circle cx="1660.72" cy="526.07" r="1.1"/><circle cx="1665.54" cy="525.99" r="1.1"/><circle cx="1670.36" cy="525.88" r="1.1"/><circle cx="1675.18" cy="525.99" r="1.1"/><circle cx="1680" cy="526.25" r="1.1"/><circle cx="1684.83" cy="526.24" r="1.1"/><circle cx="1689.65" cy="526.03" r="1.1"/><circle cx="1694.47" cy="526.05" r="1.1"/><circle cx="1699.29" cy="526.38" r="1.1"/><circle cx="1704.11" cy="525.97" r="1.1"/><circle cx="1708.94" cy="526.42" r="1.1"/><circle cx="1713.76" cy="526.44" r="1.1"/><circle cx="1718.58" cy="526.5" r="1.1"/><circle cx="1723.4" cy="526.36" r="1.1"/><circle cx="1728.22" cy="526.3" r="1.1"/><circle cx="1733.05" cy="526.22" r="1.1"/></g>
<g fill="#a1718b" fill-opacity="0.95"><circle cx="1043.5" cy="511.61" r="1.1"/><circle cx="1048.32" cy="511.62" r="1.1"/><circle cx="1053.14" cy="511.54" r="1.1"/><circle cx="1057.97" cy="511.71" r="1.1"/><circle cx="1062.79" cy="511.86" r="1.1"/><circle cx="1067.61" cy="511.89" r="1.1"/><circle cx="1072.43" cy="511.8" r="1.1"/><circle cx="1077.25" cy="511.88" r="1.1"/><circle cx="1082.08" cy="511.47" r="1.1"/><circle cx="1086.9" cy="511.67" r="1.1"/><circle cx="1091.72" cy="511.53" r="1.1"/><circle cx="1096.54" cy="511.9" r="1.1"/><circle cx="1101.36" cy="511.67" r="1.1"/><circle cx="1106.19" cy="511.47" r="1.1"/><circle cx="1111.01" cy="511.6" r="1.1"/><circle cx="1115.83" cy="511.69" r="1.1"/><circle cx="1120.65" cy="511.68" r="1.1"/><circle cx="1125.47" cy="511.85" r="1.1"/><circle cx="1130.3" cy="511.83" r="1.1"/><circle cx="1135.12" cy="511.83" r="1.1"/><circle cx="1139.94" cy="511.72" r="1.1"/><circle cx="1144.76" cy="511.72" r="1.1"/><circle cx="1149.58" cy="511.47" r="1.1"/><circle cx="1154.41" cy="511.83" r="1.1"/><circle cx="1159.23" cy="511.78" r="1.1"/><circle cx="1164.05" cy="511.77" r="1.1"/><circle cx="1168.87" cy="511.82" r="1.1"/><circle cx="1173.69" cy="511.76" r="1.1"/><circle cx="1178.52" cy="511.79" r="1.1"/><circle cx="1183.34" cy="508.92" r="1.1"/><circle cx="1188.16" cy="509.13" r="1.1"/><circle cx="1192.98" cy="508.7" r="1.1"/><circle cx="1197.8" cy="511.72" r="1.1"/><circle cx="1202.63" cy="511.44" r="1.1"/><circle cx="1207.45" cy="511.56" r="1.1"/><circle cx="1212.27" cy="511.56" r="1.1"/><circle cx="1217.09" cy="511.65" r="1.1"/><circle cx="1221.91" cy="511.41" r="1.1"/><circle cx="1226.74" cy="511.81" r="1.1"/><circle cx="1231.56" cy="511.54" r="1.1"/><circle cx="1236.38" cy="511.71" r="1.1"/><circle cx="1241.2" cy="511.52" r="1.1"/><circle cx="1246.02" cy="511.49" r="1.1"/><circle cx="1250.85" cy="511.76" r="1.1"/><circle cx="1255.67" cy="511.73" r="1.1"/><circle cx="1260.49" cy="511.81" r="1.1"/><circle cx="1265.31" cy="511.71" r="1.1"/><circle cx="1270.13" cy="511.78" r="1.1"/><circle cx="1274.96" cy="511.61" r="1.1"/><circle cx="1279.78" cy="511.33" r="1.1"/><circle cx="1284.6" cy="511.62" r="1.1"/><circle cx="1289.42" cy="511.64" r="1.1"/><circle cx="1294.24" cy="511.56" r="1.1"/><circle cx="1299.07" cy="511.64" r="1.1"/><circle cx="1303.89" cy="511.42" r="1.1"/><circle cx="1308.71" cy="511.42" r="1.1"/><circle cx="1313.53" cy="511.68" r="1.1"/><circle cx="1318.35" cy="511.64" r="1.1"/><circle cx="1323.18" cy="511.42" r="1.1"/><circle cx="1328" cy="511.29" r="1.1"/><circle cx="1332.82" cy="511.43" r="1.1"/><circle cx="1337.64" cy="511.52" r="1.1"/><circle cx="1342.46" cy="511.25" r="1.1"/><circle cx="1347.29" cy="511.72" r="1.1"/><circle cx="1352.11" cy="511.69" r="1.1"/><circle cx="1356.93" cy="511.33" r="1.1"/><circle cx="1361.75" cy="511.5" r="1.1"/><circle cx="1366.57" cy="511.68" r="1.1"/><circle cx="1371.4" cy="511.43" r="1.1"/><circle cx="1376.22" cy="511.21" r="1.1"/><circle cx="1381.04" cy="511.43" r="1.1"/><circle cx="1385.86" cy="511.5" r="1.1"/><circle cx="1390.68" cy="511.62" r="1.1"/><circle cx="1395.51" cy="511.63" r="1.1"/><circle cx="1400.33" cy="511.22" r="1.1"/><circle cx="1405.15" cy="511.41" r="1.1"/><circle cx="1409.97" cy="511.19" r="1.1"/><circle cx="1414.79" cy="511.61" r="1.1"/><circle cx="1419.62" cy="511.52" r="1.1"/><circle cx="1424.44" cy="511.6" r="1.1"/><circle cx="1429.26" cy="511.43" r="1.1"/><circle cx="1434.08" cy="511.59" r="1.1"/><circle cx="1438.9" cy="511.49" r="1.1"/><circle cx="1443.73" cy="511.41" r="1.1"/><circle cx="1448.55" cy="511.45" r="1.1"/><circle cx="1453.37" cy="511.57" r="1.1"/><circle cx="1458.19" cy="511.57" r="1.1"/><circle cx="1463.01" cy="511.11" r="1.1"/><circle cx="1467.84" cy="511.49" r="1.1"/><circle cx="1472.66" cy="511.32" r="1.1"/><circle cx="1477.48" cy="511.37" r="1.1"/><circle cx="1482.3" cy="511.3" r="1.1"/><circle cx="1487.12" cy="511.51" r="1.1"/><circle cx="1491.95" cy="511.39" r="1.1"/><circle cx="1496.77" cy="511.49" r="1.1"/><circle cx="1501.59" cy="511.27" r="1.1"/><circle cx="1506.41" cy="511.08" r="1.1"/><circle cx="1511.23" cy="511.23" r="1.1"/><circle cx="1516.06" cy="511.1" r="1.1"/><circle cx="1520.88" cy="511.41" r="1.1"/><circle cx="1525.7" cy="511.5" r="1.1"/><circle cx="1530.52" cy="511.24" r="1.1"/><circle cx="1535.34" cy="511.26" r="1.1"/><circle cx="1540.17" cy="511.21" r="1.1"/><circle cx="1544.99" cy="511.3" r="1.1"/><circle cx="1549.81" cy="511.17" r="1.1"/><circle cx="1554.63" cy="511.12" r="1.1"/><circle cx="1559.45" cy="511.02" r="1.1"/><circle cx="1564.28" cy="511.31" r="1.1"/><circle cx="1569.1" cy="511.24" r="1.1"/><circle cx="1573.92" cy="511.05" r="1.1"/><circle cx="1578.74" cy="511.33" r="1.1"/><circle cx="1583.56" cy="511.38" r="1.1"/><circle cx="1588.39" cy="511.28" r="1.1"/><circle cx="1593.21" cy="511.38" r="1.1"/><circle cx="1598.03" cy="511.04" r="1.1"/><circle cx="1602.85" cy="511.01" r="1.1"/><circle cx="1607.67" cy="511.25" r="1.1"/><circle cx="1612.5" cy="511.34" r="1.1"/><circle cx="1617.32" cy="511.35" r="1.1"/><circle cx="1622.14" cy="511.27" r="1.1"/><circle cx="1626.96" cy="511.34" r="1.1"/><circle cx="1631.78" cy="511.17" r="1.1"/><circle cx="1636.61" cy="511.09" r="1.1"/><circle cx="1641.43" cy="511.25" r="1.1"/><circle cx="1646.25" cy="511.33" r="1.1"/><circle cx="1651.07" cy="511.01" r="1.1"/><circle cx="1655.89" cy="511.32" r="1.1"/><circle cx="1660.72" cy="511.25" r="1.1"/><circle cx="1665.54" cy="511.2" r="1.1"/><circle cx="1670.36" cy="511.15" r="1.1"/><circle cx="1675.18" cy="511.28" r="1.1"/><circle cx="1680" cy="511.11" r="1.1"/><circle cx="1684.83" cy="511.16" r="1.1"/><circle cx="1689.65" cy="510.94" r="1.1"/><circle cx="1694.47" cy="511.03" r="1.1"/><circle cx="1699.29" cy="510.86" r="1.1"/><circle cx="1704.11" cy="510.97" r="1.1"/><circle cx="1708.94" cy="510.91" r="1.1"/><circle cx="1713.76" cy="511" r="1.1"/><circle cx="1718.58" cy="511.06" r="1.1"/><circle cx="1723.4" cy="510.87" r="1.1"/><circle cx="1728.22" cy="510.94" r="1.1"/><circle cx="1733.05" cy="510.79" r="1.1"/></g>
<g fill="#ab9845" fill-opacity="0.95"><circle cx="1043.5" cy="524.74" r="1.1"/><circle cx="1048.32" cy="524.86" r="1.1"/><circle cx="1053.14" cy="524.87" r="1.1"/><circle cx="1057.97" cy="525.16" r="1.1"/><circle cx="1062.79" cy="525.17" r="1.1"/><circle cx="1067.61" cy="524.8" r="1.1"/><circle cx="1072.43" cy="524.98" r="1.1"/><circle cx="1077.25" cy="523.3" r="1.1"/><circle cx="1082.08" cy="524.78" r="1.1"/><circle cx="1086.9" cy="524.36" r="1.1"/><circle cx="1091.72" cy="524.24" r="1.1"/><circle cx="1096.54" cy="523.56" r="1.1"/><circle cx="1101.36" cy="522.54" r="1.1"/><circle cx="1106.19" cy="522.84" r="1.1"/><circle cx="1111.01" cy="523.56" r="1.1"/><circle cx="1115.83" cy="523.62" r="1.1"/><circle cx="1120.65" cy="524.15" r="1.1"/><circle cx="1125.47" cy="524.25" r="1.1"/><circle cx="1130.3" cy="524.6" r="1.1"/><circle cx="1135.12" cy="525.33" r="1.1"/><circle cx="1139.94" cy="525.6" r="1.1"/><circle cx="1144.76" cy="526.03" r="1.1"/><circle cx="1149.58" cy="526.29" r="1.1"/><circle cx="1154.41" cy="526.75" r="1.1"/><circle cx="1159.23" cy="526.92" r="1.1"/><circle cx="1164.05" cy="527.55" r="1.1"/><circle cx="1168.87" cy="527.63" r="1.1"/><circle cx="1173.69" cy="527.6" r="1.1"/><circle cx="1178.52" cy="527.89" r="1.1"/><circle cx="1183.34" cy="527.85" r="1.1"/><circle cx="1188.16" cy="527.71" r="1.1"/><circle cx="1192.98" cy="527.82" r="1.1"/><circle cx="1197.8" cy="528.27" r="1.1"/><circle cx="1202.63" cy="528.46" r="1.1"/><circle cx="1207.45" cy="528.18" r="1.1"/><circle cx="1212.27" cy="528.22" r="1.1"/><circle cx="1217.09" cy="528.5" r="1.1"/><circle cx="1221.91" cy="528.84" r="1.1"/><circle cx="1226.74" cy="528.89" r="1.1"/><circle cx="1231.56" cy="528.67" r="1.1"/><circle cx="1236.38" cy="528.77" r="1.1"/><circle cx="1241.2" cy="529.26" r="1.1"/><circle cx="1246.02" cy="529.24" r="1.1"/><circle cx="1250.85" cy="529.17" r="1.1"/><circle cx="1255.67" cy="529.3" r="1.1"/><circle cx="1260.49" cy="529.11" r="1.1"/><circle cx="1265.31" cy="529.34" r="1.1"/><circle cx="1270.13" cy="529.2" r="1.1"/><circle cx="1274.96" cy="529.55" r="1.1"/><circle cx="1279.78" cy="529.42" r="1.1"/><circle cx="1284.6" cy="529.25" r="1.1"/><circle cx="1289.42" cy="529.43" r="1.1"/><circle cx="1294.24" cy="529.78" r="1.1"/><circle cx="1299.07" cy="529.82" r="1.1"/><circle cx="1303.89" cy="529.57" r="1.1"/><circle cx="1308.71" cy="529.71" r="1.1"/><circle cx="1313.53" cy="529.72" r="1.1"/><circle cx="1318.35" cy="529.68" r="1.1"/><circle cx="1323.18" cy="529.64" r="1.1"/><circle cx="1328" cy="529.46" r="1.1"/><circle cx="1332.82" cy="529.82" r="1.1"/><circle cx="1337.64" cy="529.67" r="1.1"/><circle cx="1342.46" cy="529.83" r="1.1"/><circle cx="1347.29" cy="529.7" r="1.1"/><circle cx="1352.11" cy="529.62" r="1.1"/><circle cx="1356.93" cy="529.92" r="1.1"/><circle cx="1361.75" cy="529.76" r="1.1"/><circle cx="1366.57" cy="529.66" r="1.1"/><circle cx="1371.4" cy="530" r="1.1"/><circle cx="1376.22" cy="529.64" r="1.1"/><circle cx="1381.04" cy="529.82" r="1.1"/><circle cx="1385.86" cy="529.79" r="1.1"/><circle cx="1390.68" cy="529.75" r="1.1"/><circle cx="1395.51" cy="529.67" r="1.1"/><circle cx="1400.33" cy="530.03" r="1.1"/><circle cx="1405.15" cy="529.83" r="1.1"/><circle cx="1409.97" cy="530.06" r="1.1"/><circle cx="1414.79" cy="529.9" r="1.1"/><circle cx="1419.62" cy="529.93" r="1.1"/><circle cx="1424.44" cy="530.1" r="1.1"/><circle cx="1429.26" cy="529.97" r="1.1"/><circle cx="1434.08" cy="529.91" r="1.1"/><circle cx="1438.9" cy="529.82" r="1.1"/><circle cx="1443.73" cy="529.69" r="1.1"/><circle cx="1448.55" cy="529.97" r="1.1"/><circle cx="1453.37" cy="529.9" r="1.1"/><circle cx="1458.19" cy="529.82" r="1.1"/><circle cx="1463.01" cy="529.72" r="1.1"/><circle cx="1467.84" cy="529.73" r="1.1"/><circle cx="1472.66" cy="529.72" r="1.1"/><circle cx="1477.48" cy="524.95" r="1.1"/><circle cx="1482.3" cy="519.92" r="1.1"/><circle cx="1487.12" cy="520.52" r="1.1"/><circle cx="1491.95" cy="521.9" r="1.1"/><circle cx="1496.77" cy="521.69" r="1.1"/><circle cx="1501.59" cy="521.51" r="1.1"/><circle cx="1506.41" cy="521.58" r="1.1"/><circle cx="1511.23" cy="521.61" r="1.1"/><circle cx="1516.06" cy="521.32" r="1.1"/><circle cx="1520.88" cy="521.58" r="1.1"/><circle cx="1525.7" cy="521.43" r="1.1"/><circle cx="1530.52" cy="521.26" r="1.1"/><circle cx="1535.34" cy="521.56" r="1.1"/><circle cx="1540.17" cy="521.42" r="1.1"/><circle cx="1544.99" cy="521.31" r="1.1"/><circle cx="1549.81" cy="521.24" r="1.1"/><circle cx="1554.63" cy="521.38" r="1.1"/><circle cx="1559.45" cy="521.23" r="1.1"/><circle cx="1564.28" cy="521.38" r="1.1"/><circle cx="1569.1" cy="521.33" r="1.1"/><circle cx="1573.92" cy="521.18" r="1.1"/><circle cx="1578.74" cy="521.24" r="1.1"/><circle cx="1583.56" cy="520.8" r="1.1"/><circle cx="1588.39" cy="521.11" r="1.1"/><circle cx="1593.21" cy="521.07" r="1.1"/><circle cx="1598.03" cy="520.79" r="1.1"/><circle cx="1602.85" cy="520.77" r="1.1"/><circle cx="1607.67" cy="520.97" r="1.1"/><circle cx="1612.5" cy="520.66" r="1.1"/><circle cx="1617.32" cy="520.72" r="1.1"/><circle cx="1622.14" cy="520.8" r="1.1"/><circle cx="1626.96" cy="520.65" r="1.1"/><circle cx="1631.78" cy="520.8" r="1.1"/><circle cx="1636.61" cy="520.76" r="1.1"/><circle cx="1641.43" cy="520.42" r="1.1"/><circle cx="1646.25" cy="520.6" r="1.1"/><circle cx="1651.07" cy="520.34" r="1.1"/><circle cx="1655.89" cy="520.66" r="1.1"/><circle cx="1660.72" cy="520.64" r="1.1"/><circle cx="1665.54" cy="520.65" r="1.1"/><circle cx="1670.36" cy="520.28" r="1.1"/><circle cx="1675.18" cy="520.33" r="1.1"/><circle cx="1680" cy="520.56" r="1.1"/><circle cx="1684.83" cy="520.51" r="1.1"/><circle cx="1689.65" cy="520.1" r="1.1"/><circle cx="1694.47" cy="520.22" r="1.1"/><circle cx="1699.29" cy="520" r="1.1"/><circle cx="1704.11" cy="520.37" r="1.1"/><circle cx="1708.94" cy="520.07" r="1.1"/><circle cx="1713.76" cy="520.26" r="1.1"/><circle cx="1718.58" cy="522.56" r="1.1"/><circle cx="1723.4" cy="522.61" r="1.1"/><circle cx="1728.22" cy="522.61" r="1.1"/><circle cx="1733.05" cy="522.8" r="1.1"/></g>
<g fill="#885044" fill-opacity="0.95"><circle cx="1043.5" cy="518.35" r="1.1"/><circle cx="1048.32" cy="518.49" r="1.1"/><circle cx="1053.14" cy="518.21" r="1.1"/><circle cx="1057.97" cy="518.28" r="1.1"/><circle cx="1062.79" cy="518.2" r="1.1"/><circle cx="1067.61" cy="518.37" r="1.1"/><circle cx="1072.43" cy="518.12" r="1.1"/><circle cx="1077.25" cy="518.45" r="1.1"/><circle cx="1082.08" cy="518.4" r="1.1"/><circle cx="1086.9" cy="518.42" r="1.1"/><circle cx="1091.72" cy="518.25" r="1.1"/><circle cx="1096.54" cy="518.12" r="1.1"/><circle cx="1101.36" cy="518.48" r="1.1"/><circle cx="1106.19" cy="518.25" r="1.1"/><circle cx="1111.01" cy="518.19" r="1.1"/><circle cx="1115.83" cy="518.45" r="1.1"/><circle cx="1120.65" cy="518.53" r="1.1"/><circle cx="1125.47" cy="518.29" r="1.1"/><circle cx="1130.3" cy="518.16" r="1.1"/><circle cx="1135.12" cy="518.14" r="1.1"/><circle cx="1139.94" cy="518.22" r="1.1"/><circle cx="1144.76" cy="518.37" r="1.1"/><circle cx="1149.58" cy="518.37" r="1.1"/><circle cx="1154.41" cy="518.32" r="1.1"/><circle cx="1159.23" cy="518.14" r="1.1"/><circle cx="1164.05" cy="518.43" r="1.1"/><circle cx="1168.87" cy="518.44" r="1.1"/><circle cx="1173.69" cy="518.29" r="1.1"/><circle cx="1178.52" cy="518.11" r="1.1"/><circle cx="1183.34" cy="518.49" r="1.1"/><circle cx="1188.16" cy="518.57" r="1.1"/><circle cx="1192.98" cy="518.53" r="1.1"/><circle cx="1197.8" cy="518.32" r="1.1"/><circle cx="1202.63" cy="518.3" r="1.1"/><circle cx="1207.45" cy="518.5" r="1.1"/><circle cx="1212.27" cy="518.5" r="1.1"/><circle cx="1217.09" cy="518.31" r="1.1"/><circle cx="1221.91" cy="518.28" r="1.1"/><circle cx="1226.74" cy="518.26" r="1.1"/><circle cx="1231.56" cy="518.25" r="1.1"/><circle cx="1236.38" cy="518.57" r="1.1"/><circle cx="1241.2" cy="518.37" r="1.1"/><circle cx="1246.02" cy="518.2" r="1.1"/><circle cx="1250.85" cy="518.14" r="1.1"/><circle cx="1255.67" cy="518.45" r="1.1"/><circle cx="1260.49" cy="518.2" r="1.1"/><circle cx="1265.31" cy="518.3" r="1.1"/><circle cx="1270.13" cy="518.16" r="1.1"/><circle cx="1274.96" cy="518.5" r="1.1"/><circle cx="1279.78" cy="518.28" r="1.1"/><circle cx="1284.6" cy="518.21" r="1.1"/><circle cx="1289.42" cy="518.39" r="1.1"/><circle cx="1294.24" cy="518.57" r="1.1"/><circle cx="1299.07" cy="518.53" r="1.1"/><circle cx="1303.89" cy="518.55" r="1.1"/><circle cx="1308.71" cy="518.58" r="1.1"/><circle cx="1313.53" cy="518.55" r="1.1"/><circle cx="1318.35" cy="518.33" r="1.1"/><circle cx="1323.18" cy="518.58" r="1.1"/><circle cx="1328" cy="518.26" r="1.1"/><circle cx="1332.82" cy="518.27" r="1.1"/><circle cx="1337.64" cy="518.24" r="1.1"/><circle cx="1342.46" cy="518.24" r="1.1"/><circle cx="1347.29" cy="518.29" r="1.1"/><circle cx="1352.11" cy="518.19" r="1.1"/><circle cx="1356.93" cy="518.17" r="1.1"/><circle cx="1361.75" cy="518.34" r="1.1"/><circle cx="1366.57" cy="518.17" r="1.1"/><circle cx="1371.4" cy="518.59" r="1.1"/><circle cx="1376.22" cy="518.6" r="1.1"/><circle cx="1381.04" cy="518.62" r="1.1"/><circle cx="1385.86" cy="518.55" r="1.1"/><circle cx="1390.68" cy="518.47" r="1.1"/><circle cx="1395.51" cy="518.43" r="1.1"/><circle cx="1400.33" cy="518.32" r="1.1"/><circle cx="1405.15" cy="518.29" r="1.1"/><circle cx="1409.97" cy="518.62" r="1.1"/><circle cx="1414.79" cy="518.46" r="1.1"/><circle cx="1419.62" cy="518.4" r="1.1"/><circle cx="1424.44" cy="518.48" r="1.1"/><circle cx="1429.26" cy="518.61" r="1.1"/><circle cx="1434.08" cy="518.37" r="1.1"/><circle cx="1438.9" cy="518.48" r="1.1"/><circle cx="1443.73" cy="518.33" r="1.1"/><circle cx="1448.55" cy="518.43" r="1.1"/><circle cx="1453.37" cy="518.2" r="1.1"/><circle cx="1458.19" cy="518.21" r="1.1"/><circle cx="1463.01" cy="518.64" r="1.1"/><circle cx="1467.84" cy="518.31" r="1.1"/><circle cx="1472.66" cy="518.33" r="1.1"/><circle cx="1477.48" cy="518.53" r="1.1"/><circle cx="1482.3" cy="518.62" r="1.1"/><circle cx="1487.12" cy="518.45" r="1.1"/><circle cx="1491.95" cy="518.51" r="1.1"/><circle cx="1496.77" cy="518.33" r="1.1"/><circle cx="1501.59" cy="518.24" r="1.1"/><circle cx="1506.41" cy="518.5" r="1.1"/><circle cx="1511.23" cy="518.55" r="1.1"/><circle cx="1516.06" cy="518.45" r="1.1"/><circle cx="1520.88" cy="518.35" r="1.1"/><circle cx="1525.7" cy="518.31" r="1.1"/><circle cx="1530.52" cy="518.41" r="1.1"/><circle cx="1535.34" cy="518.55" r="1.1"/><circle cx="1540.17" cy="518.53" r="1.1"/><circle cx="1544.99" cy="518.29" r="1.1"/><circle cx="1549.81" cy="518.45" r="1.1"/><circle cx="1554.63" cy="518.68" r="1.1"/><circle cx="1559.45" cy="515.75" r="1.1"/><circle cx="1564.28" cy="517.78" r="1.1"/><circle cx="1569.1" cy="517.57" r="1.1"/><circle cx="1573.92" cy="517.86" r="1.1"/><circle cx="1578.74" cy="517.76" r="1.1"/><circle cx="1583.56" cy="517.85" r="1.1"/><circle cx="1588.39" cy="517.66" r="1.1"/><circle cx="1593.21" cy="517.41" r="1.1"/><circle cx="1598.03" cy="517.63" r="1.1"/><circle cx="1602.85" cy="517.71" r="1.1"/><circle cx="1607.67" cy="517.44" r="1.1"/><circle cx="1612.5" cy="517.85" r="1.1"/><circle cx="1617.32" cy="517.72" r="1.1"/><circle cx="1622.14" cy="517.5" r="1.1"/><circle cx="1626.96" cy="517.89" r="1.1"/><circle cx="1631.78" cy="517.52" r="1.1"/><circle cx="1636.61" cy="517.72" r="1.1"/><circle cx="1641.43" cy="517.88" r="1.1"/><circle cx="1646.25" cy="517.77" r="1.1"/><circle cx="1651.07" cy="517.67" r="1.1"/><circle cx="1655.89" cy="517.71" r="1.1"/><circle cx="1660.72" cy="517.64" r="1.1"/><circle cx="1665.54" cy="517.87" r="1.1"/><circle cx="1670.36" cy="517.79" r="1.1"/><circle cx="1675.18" cy="517.42" r="1.1"/><circle cx="1680" cy="517.68" r="1.1"/><circle cx="1684.83" cy="517.66" r="1.1"/><circle cx="1689.65" cy="517.85" r="1.1"/><circle cx="1694.47" cy="517.76" r="1.1"/><circle cx="1699.29" cy="517.43" r="1.1"/><circle cx="1704.11" cy="517.56" r="1.1"/><circle cx="1708.94" cy="517.65" r="1.1"/><circle cx="1713.76" cy="517.87" r="1.1"/><circle cx="1718.58" cy="517.7" r="1.1"/><circle cx="1723.4" cy="517.51" r="1.1"/><circle cx="1728.22" cy="517.68" r="1.1"/><circle cx="1733.05" cy="517.6" r="1.1"/></g>
<g fill="#ae6f37" fill-opacity="0.95"><circle cx="1043.5" cy="504.63" r="1.1"/><circle cx="1048.32" cy="504.35" r="1.1"/><circle cx="1053.14" cy="504.36" r="1.1"/><circle cx="1057.97" cy="504.41" r="1.1"/><circle cx="1062.79" cy="504.43" r="1.1"/><circle cx="1067.61" cy="504.37" r="1.1"/><circle cx="1072.43" cy="504.62" r="1.1"/><circle cx="1077.25" cy="504.4" r="1.1"/><circle cx="1082.08" cy="504.68" r="1.1"/><circle cx="1086.9" cy="504.55" r="1.1"/><circle cx="1091.72" cy="504.36" r="1.1"/><circle cx="1096.54" cy="504.41" r="1.1"/><circle cx="1101.36" cy="503.86" r="1.1"/><circle cx="1106.19" cy="505.54" r="1.1"/><circle cx="1111.01" cy="505.73" r="1.1"/><circle cx="1115.83" cy="505.78" r="1.1"/><circle cx="1120.65" cy="506.15" r="1.1"/><circle cx="1125.47" cy="505.8" r="1.1"/><circle cx="1130.3" cy="505.99" r="1.1"/><circle cx="1135.12" cy="505.72" r="1.1"/><circle cx="1139.94" cy="505.86" r="1.1"/><circle cx="1144.76" cy="505.63" r="1.1"/><circle cx="1149.58" cy="505.74" r="1.1"/><circle cx="1154.41" cy="505.64" r="1.1"/><circle cx="1159.23" cy="505.93" r="1.1"/><circle cx="1164.05" cy="505.74" r="1.1"/><circle cx="1168.87" cy="505.68" r="1.1"/><circle cx="1173.69" cy="505.62" r="1.1"/><circle cx="1178.52" cy="505.93" r="1.1"/><circle cx="1183.34" cy="505.61" r="1.1"/><circle cx="1188.16" cy="505.59" r="1.1"/><circle cx="1192.98" cy="505.71" r="1.1"/><circle cx="1197.8" cy="505.52" r="1.1"/><circle cx="1202.63" cy="505.54" r="1.1"/><circle cx="1207.45" cy="505.82" r="1.1"/><circle cx="1212.27" cy="505.81" r="1.1"/><circle cx="1217.09" cy="500.06" r="1.1"/><circle cx="1221.91" cy="484.4" r="1.1"/><circle cx="1226.74" cy="492.43" r="1.1"/><circle cx="1231.56" cy="492.73" r="1.1"/><circle cx="1236.38" cy="492.59" r="1.1"/><circle cx="1241.2" cy="491.77" r="1.1"/><circle cx="1246.02" cy="494.51" r="1.1"/><circle cx="1250.85" cy="496.49" r="1.1"/><circle cx="1255.67" cy="496.91" r="1.1"/><circle cx="1260.49" cy="497.07" r="1.1"/><circle cx="1265.31" cy="497.05" r="1.1"/><circle cx="1270.13" cy="497.25" r="1.1"/><circle cx="1274.96" cy="497.15" r="1.1"/><circle cx="1279.78" cy="497.09" r="1.1"/><circle cx="1284.6" cy="497.22" r="1.1"/><circle cx="1289.42" cy="497.2" r="1.1"/><circle cx="1294.24" cy="497.68" r="1.1"/><circle cx="1299.07" cy="497.63" r="1.1"/><circle cx="1303.89" cy="497.45" r="1.1"/><circle cx="1308.71" cy="497.32" r="1.1"/><circle cx="1313.53" cy="497.59" r="1.1"/><circle cx="1318.35" cy="497.29" r="1.1"/><circle cx="1323.18" cy="497.33" r="1.1"/><circle cx="1328" cy="497.71" r="1.1"/><circle cx="1332.82" cy="495.49" r="1.1"/><circle cx="1337.64" cy="497.59" r="1.1"/><circle cx="1342.46" cy="497.68" r="1.1"/><circle cx="1347.29" cy="497.61" r="1.1"/><circle cx="1352.11" cy="497.47" r="1.1"/><circle cx="1356.93" cy="497.54" r="1.1"/><circle cx="1361.75" cy="497.51" r="1.1"/><circle cx="1366.57" cy="497.59" r="1.1"/><circle cx="1371.4" cy="497.29" r="1.1"/><circle cx="1376.22" cy="497.33" r="1.1"/><circle cx="1381.04" cy="497.16" r="1.1"/><circle cx="1385.86" cy="497.15" r="1.1"/><circle cx="1390.68" cy="497.36" r="1.1"/><circle cx="1395.51" cy="496.91" r="1.1"/><circle cx="1400.33" cy="497.47" r="1.1"/><circle cx="1405.15" cy="497.19" r="1.1"/><circle cx="1409.97" cy="497.25" r="1.1"/><circle cx="1414.79" cy="497.15" r="1.1"/><circle cx="1419.62" cy="494.91" r="1.1"/><circle cx="1424.44" cy="496.39" r="1.1"/><circle cx="1429.26" cy="496.7" r="1.1"/><circle cx="1434.08" cy="496.93" r="1.1"/><circle cx="1438.9" cy="496.57" r="1.1"/><circle cx="1443.73" cy="496.92" r="1.1"/><circle cx="1448.55" cy="496.65" r="1.1"/><circle cx="1453.37" cy="496.8" r="1.1"/><circle cx="1458.19" cy="496.65" r="1.1"/><circle cx="1463.01" cy="496.42" r="1.1"/><circle cx="1467.84" cy="496.53" r="1.1"/><circle cx="1472.66" cy="496.8" r="1.1"/><circle cx="1477.48" cy="496.56" r="1.1"/><circle cx="1482.3" cy="496.69" r="1.1"/><circle cx="1487.12" cy="496.88" r="1.1"/><circle cx="1491.95" cy="497.04" r="1.1"/><circle cx="1496.77" cy="496.76" r="1.1"/><circle cx="1501.59" cy="496.8" r="1.1"/><circle cx="1506.41" cy="496.56" r="1.1"/><circle cx="1511.23" cy="496.56" r="1.1"/><circle cx="1516.06" cy="496.81" r="1.1"/><circle cx="1520.88" cy="496.99" r="1.1"/><circle cx="1525.7" cy="496.66" r="1.1"/><circle cx="1530.52" cy="497.25" r="1.1"/><circle cx="1535.34" cy="492.16" r="1.1"/><circle cx="1540.17" cy="495.1" r="1.1"/><circle cx="1544.99" cy="495.03" r="1.1"/><circle cx="1549.81" cy="495.29" r="1.1"/><circle cx="1554.63" cy="494.93" r="1.1"/><circle cx="1559.45" cy="494.71" r="1.1"/><circle cx="1564.28" cy="495" r="1.1"/><circle cx="1569.1" cy="494.92" r="1.1"/><circle cx="1573.92" cy="495.01" r="1.1"/><circle cx="1578.74" cy="494.92" r="1.1"/><circle cx="1583.56" cy="494.44" r="1.1"/><circle cx="1588.39" cy="494.78" r="1.1"/><circle cx="1593.21" cy="494.36" r="1.1"/><circle cx="1598.03" cy="494.34" r="1.1"/><circle cx="1602.85" cy="494.5" r="1.1"/><circle cx="1607.67" cy="494.68" r="1.1"/><circle cx="1612.5" cy="494.16" r="1.1"/><circle cx="1617.32" cy="494.43" r="1.1"/><circle cx="1622.14" cy="494.44" r="1.1"/><circle cx="1626.96" cy="494.46" r="1.1"/><circle cx="1631.78" cy="493.98" r="1.1"/><circle cx="1636.61" cy="494.26" r="1.1"/><circle cx="1641.43" cy="494.35" r="1.1"/><circle cx="1646.25" cy="494.18" r="1.1"/><circle cx="1651.07" cy="494.36" r="1.1"/><circle cx="1655.89" cy="494" r="1.1"/><circle cx="1660.72" cy="494.07" r="1.1"/><circle cx="1665.54" cy="494.12" r="1.1"/><circle cx="1670.36" cy="493.76" r="1.1"/><circle cx="1675.18" cy="493.68" r="1.1"/><circle cx="1680" cy="494.17" r="1.1"/><circle cx="1684.83" cy="488.65" r="1.1"/><circle cx="1689.65" cy="494" r="1.1"/><circle cx="1694.47" cy="493.57" r="1.1"/><circle cx="1699.29" cy="493.67" r="1.1"/><circle cx="1704.11" cy="494.02" r="1.1"/><circle cx="1708.94" cy="494" r="1.1"/><circle cx="1713.76" cy="494.07" r="1.1"/><circle cx="1718.58" cy="493.53" r="1.1"/><circle cx="1723.4" cy="493.98" r="1.1"/><circle cx="1728.22" cy="493.78" r="1.1"/><circle cx="1733.05" cy="493.87" r="1.1"/></g>
<circle cx="1758.4" cy="388.8" r="3.1" fill="#54B399"/>
<text transform="translate(1768 391.7) scale(1 1.16)" font-size="8.8" font-weight="bold" fill="#d5dae1" text-anchor="start">VDI0041</text>
<text transform="translate(1885 391.7) scale(1 1.16)" font-size="9.0" font-weight="bold" fill="#d5dae1" text-anchor="end">5,253,183,488</text>
<circle cx="1758.4" cy="405.28" r="3.1" fill="#6092C0"/>
<text transform="translate(1768 408.18) scale(1 1.16)" font-size="8.8" font-weight="bold" fill="#d5dae1" text-anchor="start">VDI0193</text>
<text transform="translate(1885 408.18) scale(1 1.16)" font-size="9.0" font-weight="bold" fill="#d5dae1" text-anchor="end">4,880,380,842.667</text>
<circle cx="1758.4" cy="421.76" r="3.1" fill="#D36086"/>
<text transform="translate(1768 424.66) scale(1 1.16)" font-size="8.8" font-weight="bold" fill="#d5dae1" text-anchor="start">VDI0103</text>
<circle cx="1758.4" cy="438.24" r="3.1" fill="#B9A888"/>
<text transform="translate(1768 441.14) scale(1 1.16)" font-size="8.8" font-weight="bold" fill="#d5dae1" text-anchor="start">VDI0…</text>
<text transform="translate(1885 441.14) scale(1 1.16)" font-size="9.0" font-weight="bold" fill="#d5dae1" text-anchor="end">11,219,243,467.755</text>
<circle cx="1758.4" cy="454.72" r="3.1" fill="#9170B8"/>
<text transform="translate(1768 457.62) scale(1 1.16)" font-size="8.8" font-weight="bold" fill="#d5dae1" text-anchor="start">VDI0130</text>
<text transform="translate(1885 457.62) scale(1 1.16)" font-size="9.0" font-weight="bold" fill="#d5dae1" text-anchor="end">4,039,288,455.837</text>
<circle cx="1758.4" cy="471.2" r="3.1" fill="#CA8EAE"/>
<text transform="translate(1768 474.1) scale(1 1.16)" font-size="8.8" font-weight="bold" fill="#d5dae1" text-anchor="start">VDI0112</text>
<text transform="translate(1885 474.1) scale(1 1.16)" font-size="9.0" font-weight="bold" fill="#d5dae1" text-anchor="end">4,989,117,936.165</text>
<circle cx="1758.4" cy="487.68" r="3.1" fill="#D6BF57"/>
<text transform="translate(1768 490.58) scale(1 1.16)" font-size="8.8" font-weight="bold" fill="#d5dae1" text-anchor="start">VDI0053</text>
<text transform="translate(1885 490.58) scale(1 1.16)" font-size="9.0" font-weight="bold" fill="#d5dae1" text-anchor="end">4,303,379,931.052</text>
<circle cx="1758.4" cy="504.16" r="3.1" fill="#AA6556"/>
<text transform="translate(1768 507.06) scale(1 1.16)" font-size="8.8" font-weight="bold" fill="#d5dae1" text-anchor="start">VDI0111</text>
<text transform="translate(1885 507.06) scale(1 1.16)" font-size="9.0" font-weight="bold" fill="#d5dae1" text-anchor="end">4,618,834,722.309</text>
<circle cx="1758.4" cy="520.64" r="3.1" fill="#E7664C"/>
<text transform="translate(1768 523.54) scale(1 1.16)" font-size="8.8" font-weight="bold" fill="#d5dae1" text-anchor="start">vdi0027</text>
<circle cx="1758.4" cy="537.12" r="3.1" fill="#DA8B45"/>
<text transform="translate(1768 540.02) scale(1 1.16)" font-size="8.8" font-weight="bold" fill="#d5dae1" text-anchor="start">VDI0028</text>
<text transform="translate(1885 540.02) scale(1 1.16)" font-size="9.0" font-weight="bold" fill="#d5dae1" text-anchor="end">6,089,722,858.213</text>
</svg></body></html>
